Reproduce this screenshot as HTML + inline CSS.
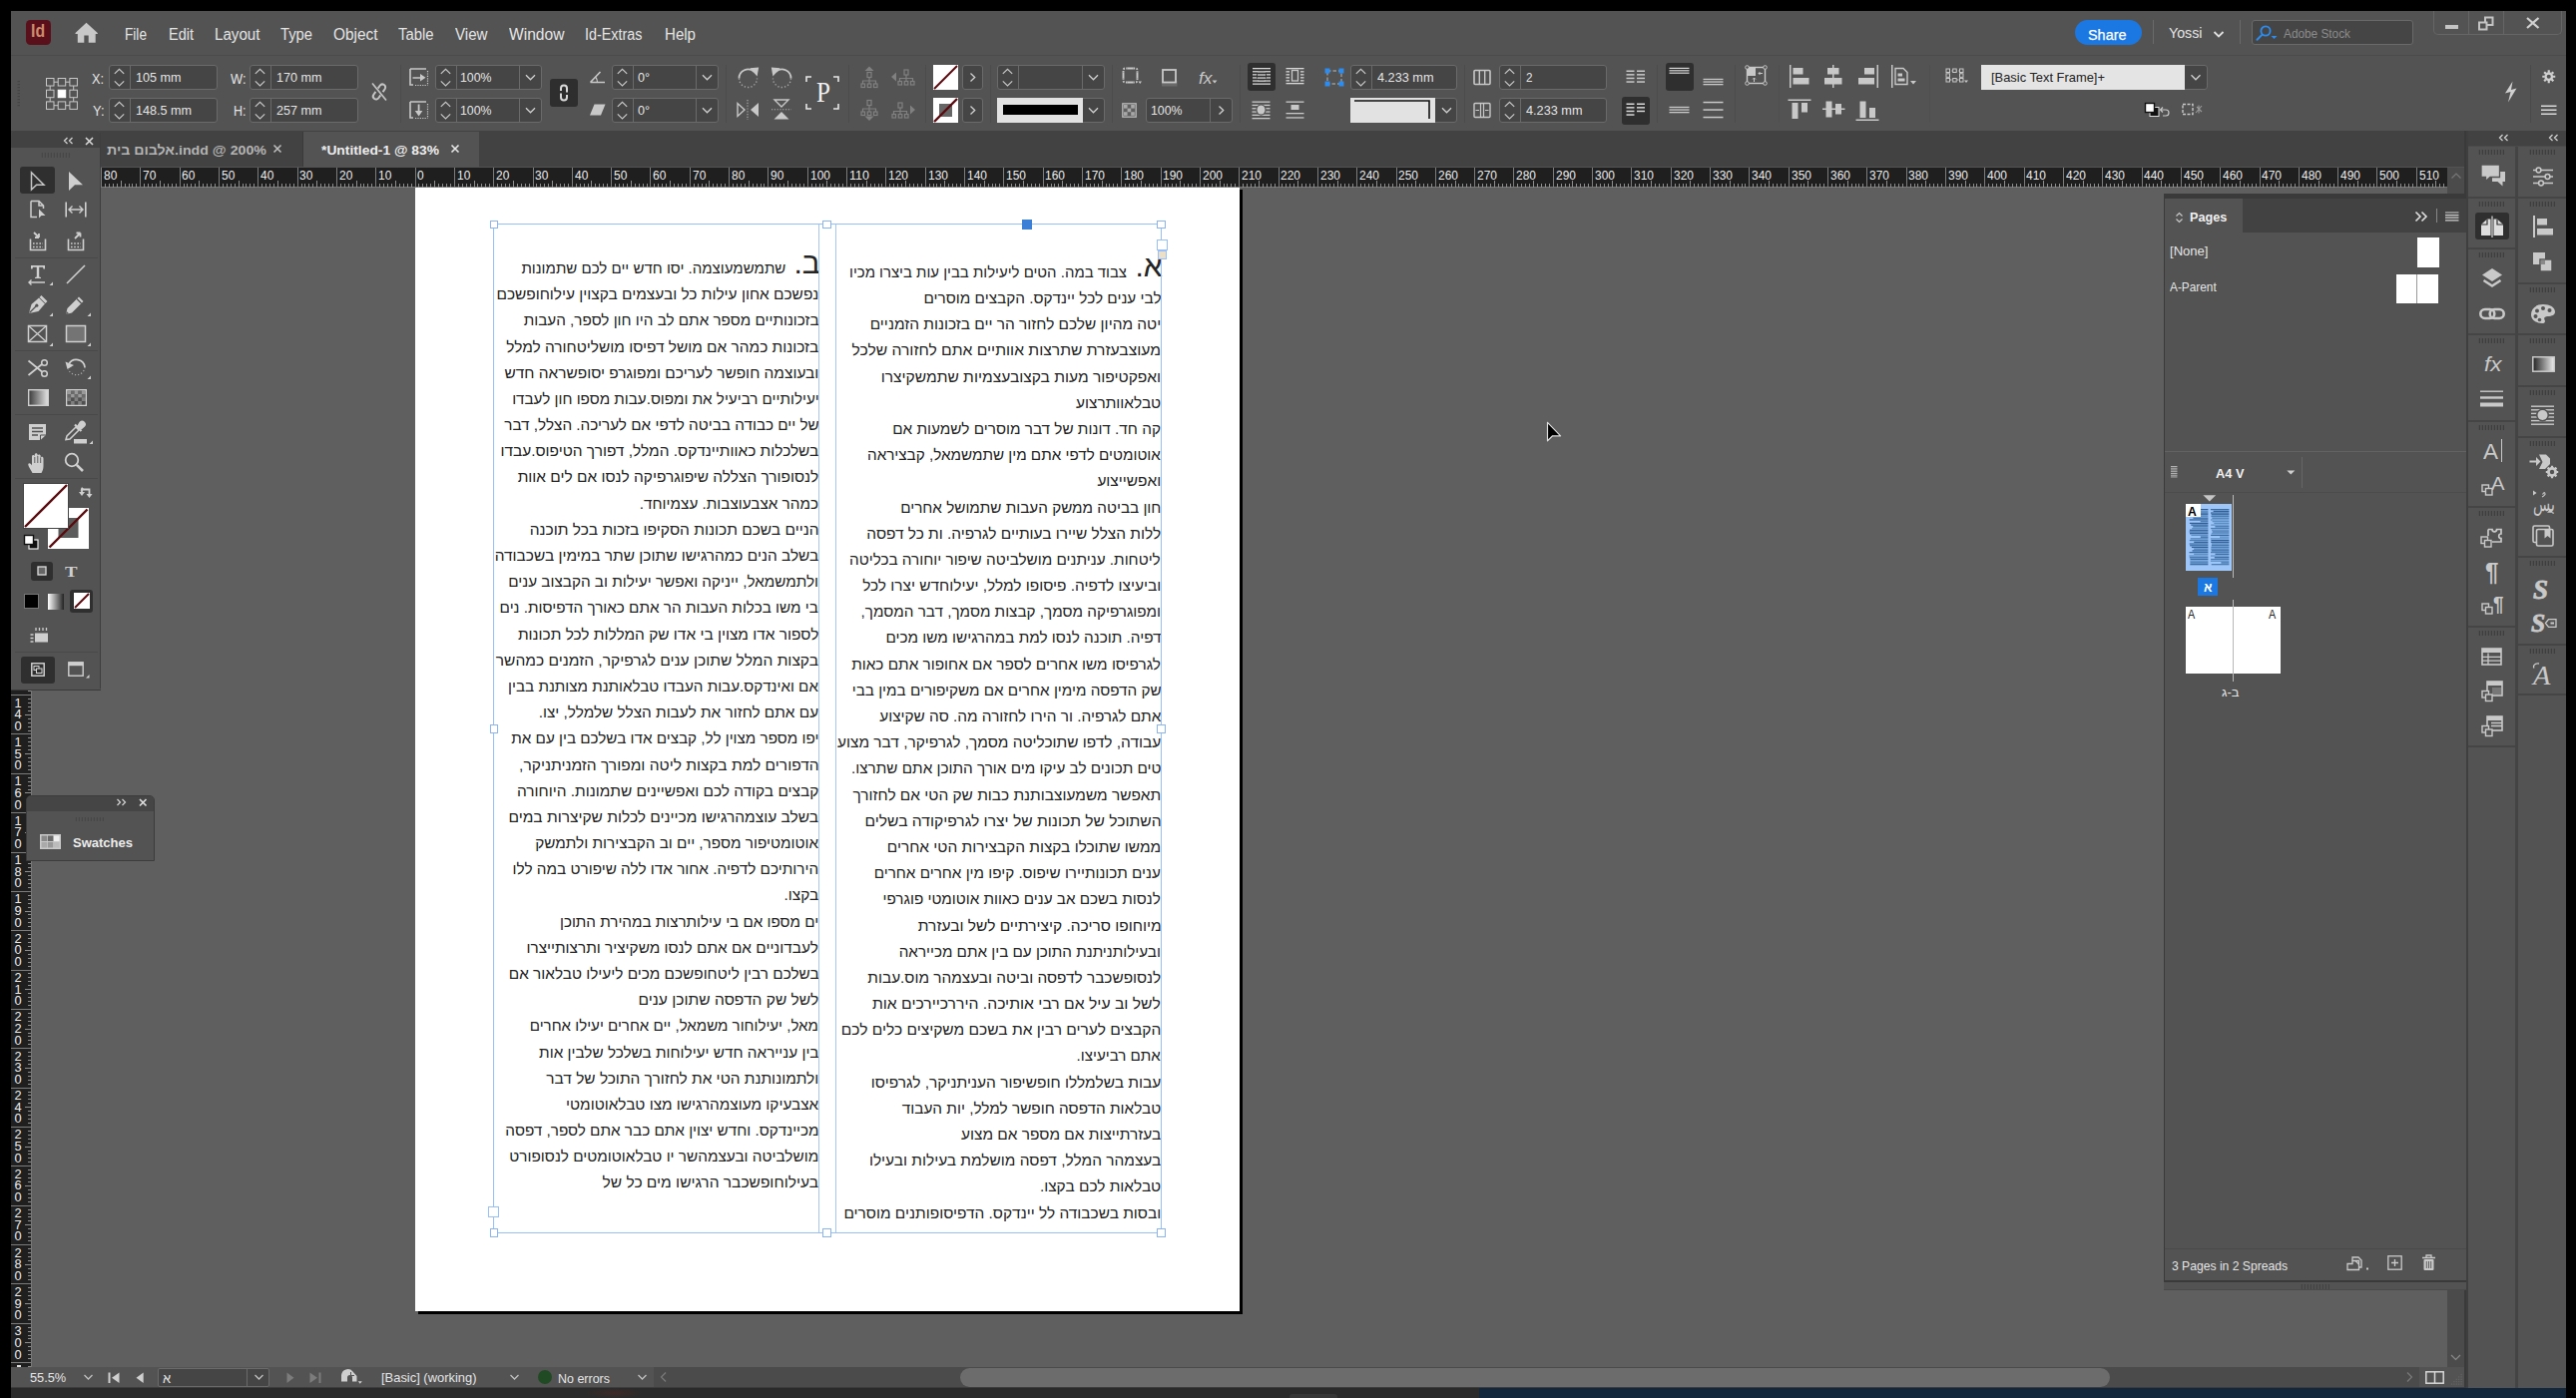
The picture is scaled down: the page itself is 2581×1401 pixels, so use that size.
<!DOCTYPE html>
<html><head><meta charset="utf-8"><title>InDesign</title>
<style>
html,body{margin:0;padding:0;background:#000;overflow:hidden;}
body{width:2581px;height:1401px;position:relative;font-family:"Liberation Sans",sans-serif;}
body>div,body>svg{position:absolute;display:block;}
svg{overflow:visible;}
</style></head><body>
<div style="left:11px;top:11px;width:2560px;height:1380px;background:#535353;"></div>
<div style="left:11px;top:1391px;width:2560px;height:10px;background:#12263c;"></div>
<div style="left:11px;top:1391px;width:1471px;height:10px;background:#2a2a2a;"></div>
<div style="left:1292px;top:1397px;width:48px;height:4px;background:#363636;border-radius:3px 3px 0 0;"></div>
<div style="left:585px;top:1391px;width:60px;height:10px;background:radial-gradient(ellipse at center,rgba(100,40,32,.35),rgba(100,40,32,0) 70%);"></div>
<div style="left:11px;top:54.6px;width:2560px;height:1.8px;background:#4b4b4b;"></div>
<div style="left:11px;top:131px;width:2560px;height:36px;background:#424242;"></div>
<div style="left:32px;top:188px;width:2420px;height:1182px;background:#5f5f5f;"></div>
<div style="left:418.5px;top:190px;width:826.5px;height:1127.3px;background:#000;"></div>
<div style="left:416px;top:187px;width:825.7px;height:1126.6px;background:#fff;"></div>
<div style="left:101px;top:168px;width:2351px;height:19px;background:#1f1f1f;"></div>
<div style="left:101px;top:187px;width:2351px;height:1px;background:#777;"></div>
<svg style="left:101px;top:168px;" width="2351" height="20" viewBox="0 0 2351 20"><rect x="0" y="0" width="1" height="20" fill="#7c7c7c"/><rect x="4" y="16" width="1" height="4" fill="#8e8e8e"/><rect x="8" y="16" width="1" height="4" fill="#8e8e8e"/><rect x="12" y="16" width="1" height="4" fill="#8e8e8e"/><rect x="16" y="16" width="1" height="4" fill="#8e8e8e"/><rect x="20" y="13" width="1" height="7" fill="#8e8e8e"/><rect x="24" y="16" width="1" height="4" fill="#8e8e8e"/><rect x="28" y="16" width="1" height="4" fill="#8e8e8e"/><rect x="31" y="16" width="1" height="4" fill="#8e8e8e"/><rect x="35" y="16" width="1" height="4" fill="#8e8e8e"/><rect x="39" y="0" width="1" height="20" fill="#7c7c7c"/><rect x="43" y="16" width="1" height="4" fill="#8e8e8e"/><rect x="47" y="16" width="1" height="4" fill="#8e8e8e"/><rect x="51" y="16" width="1" height="4" fill="#8e8e8e"/><rect x="55" y="16" width="1" height="4" fill="#8e8e8e"/><rect x="59" y="13" width="1" height="7" fill="#8e8e8e"/><rect x="63" y="16" width="1" height="4" fill="#8e8e8e"/><rect x="67" y="16" width="1" height="4" fill="#8e8e8e"/><rect x="71" y="16" width="1" height="4" fill="#8e8e8e"/><rect x="75" y="16" width="1" height="4" fill="#8e8e8e"/><rect x="79" y="0" width="1" height="20" fill="#7c7c7c"/><rect x="83" y="16" width="1" height="4" fill="#8e8e8e"/><rect x="86" y="16" width="1" height="4" fill="#8e8e8e"/><rect x="90" y="16" width="1" height="4" fill="#8e8e8e"/><rect x="94" y="16" width="1" height="4" fill="#8e8e8e"/><rect x="98" y="13" width="1" height="7" fill="#8e8e8e"/><rect x="102" y="16" width="1" height="4" fill="#8e8e8e"/><rect x="106" y="16" width="1" height="4" fill="#8e8e8e"/><rect x="110" y="16" width="1" height="4" fill="#8e8e8e"/><rect x="114" y="16" width="1" height="4" fill="#8e8e8e"/><rect x="118" y="0" width="1" height="20" fill="#7c7c7c"/><rect x="122" y="16" width="1" height="4" fill="#8e8e8e"/><rect x="126" y="16" width="1" height="4" fill="#8e8e8e"/><rect x="130" y="16" width="1" height="4" fill="#8e8e8e"/><rect x="134" y="16" width="1" height="4" fill="#8e8e8e"/><rect x="138" y="13" width="1" height="7" fill="#8e8e8e"/><rect x="142" y="16" width="1" height="4" fill="#8e8e8e"/><rect x="145" y="16" width="1" height="4" fill="#8e8e8e"/><rect x="149" y="16" width="1" height="4" fill="#8e8e8e"/><rect x="153" y="16" width="1" height="4" fill="#8e8e8e"/><rect x="157" y="0" width="1" height="20" fill="#7c7c7c"/><rect x="161" y="16" width="1" height="4" fill="#8e8e8e"/><rect x="165" y="16" width="1" height="4" fill="#8e8e8e"/><rect x="169" y="16" width="1" height="4" fill="#8e8e8e"/><rect x="173" y="16" width="1" height="4" fill="#8e8e8e"/><rect x="177" y="13" width="1" height="7" fill="#8e8e8e"/><rect x="181" y="16" width="1" height="4" fill="#8e8e8e"/><rect x="185" y="16" width="1" height="4" fill="#8e8e8e"/><rect x="189" y="16" width="1" height="4" fill="#8e8e8e"/><rect x="193" y="16" width="1" height="4" fill="#8e8e8e"/><rect x="197" y="0" width="1" height="20" fill="#7c7c7c"/><rect x="201" y="16" width="1" height="4" fill="#8e8e8e"/><rect x="204" y="16" width="1" height="4" fill="#8e8e8e"/><rect x="208" y="16" width="1" height="4" fill="#8e8e8e"/><rect x="212" y="16" width="1" height="4" fill="#8e8e8e"/><rect x="216" y="13" width="1" height="7" fill="#8e8e8e"/><rect x="220" y="16" width="1" height="4" fill="#8e8e8e"/><rect x="224" y="16" width="1" height="4" fill="#8e8e8e"/><rect x="228" y="16" width="1" height="4" fill="#8e8e8e"/><rect x="232" y="16" width="1" height="4" fill="#8e8e8e"/><rect x="236" y="0" width="1" height="20" fill="#7c7c7c"/><rect x="240" y="16" width="1" height="4" fill="#8e8e8e"/><rect x="244" y="16" width="1" height="4" fill="#8e8e8e"/><rect x="248" y="16" width="1" height="4" fill="#8e8e8e"/><rect x="252" y="16" width="1" height="4" fill="#8e8e8e"/><rect x="256" y="13" width="1" height="7" fill="#8e8e8e"/><rect x="260" y="16" width="1" height="4" fill="#8e8e8e"/><rect x="263" y="16" width="1" height="4" fill="#8e8e8e"/><rect x="267" y="16" width="1" height="4" fill="#8e8e8e"/><rect x="271" y="16" width="1" height="4" fill="#8e8e8e"/><rect x="275" y="0" width="1" height="20" fill="#7c7c7c"/><rect x="279" y="16" width="1" height="4" fill="#8e8e8e"/><rect x="283" y="16" width="1" height="4" fill="#8e8e8e"/><rect x="287" y="16" width="1" height="4" fill="#8e8e8e"/><rect x="291" y="16" width="1" height="4" fill="#8e8e8e"/><rect x="295" y="13" width="1" height="7" fill="#8e8e8e"/><rect x="299" y="16" width="1" height="4" fill="#8e8e8e"/><rect x="303" y="16" width="1" height="4" fill="#8e8e8e"/><rect x="307" y="16" width="1" height="4" fill="#8e8e8e"/><rect x="311" y="16" width="1" height="4" fill="#8e8e8e"/><rect x="315" y="0" width="1" height="20" fill="#7c7c7c"/><rect x="318" y="16" width="1" height="4" fill="#8e8e8e"/><rect x="322" y="16" width="1" height="4" fill="#8e8e8e"/><rect x="326" y="16" width="1" height="4" fill="#8e8e8e"/><rect x="330" y="16" width="1" height="4" fill="#8e8e8e"/><rect x="334" y="13" width="1" height="7" fill="#8e8e8e"/><rect x="338" y="16" width="1" height="4" fill="#8e8e8e"/><rect x="342" y="16" width="1" height="4" fill="#8e8e8e"/><rect x="346" y="16" width="1" height="4" fill="#8e8e8e"/><rect x="350" y="16" width="1" height="4" fill="#8e8e8e"/><rect x="354" y="0" width="1" height="20" fill="#7c7c7c"/><rect x="358" y="16" width="1" height="4" fill="#8e8e8e"/><rect x="362" y="16" width="1" height="4" fill="#8e8e8e"/><rect x="366" y="16" width="1" height="4" fill="#8e8e8e"/><rect x="370" y="16" width="1" height="4" fill="#8e8e8e"/><rect x="374" y="13" width="1" height="7" fill="#8e8e8e"/><rect x="377" y="16" width="1" height="4" fill="#8e8e8e"/><rect x="381" y="16" width="1" height="4" fill="#8e8e8e"/><rect x="385" y="16" width="1" height="4" fill="#8e8e8e"/><rect x="389" y="16" width="1" height="4" fill="#8e8e8e"/><rect x="393" y="0" width="1" height="20" fill="#7c7c7c"/><rect x="397" y="16" width="1" height="4" fill="#8e8e8e"/><rect x="401" y="16" width="1" height="4" fill="#8e8e8e"/><rect x="405" y="16" width="1" height="4" fill="#8e8e8e"/><rect x="409" y="16" width="1" height="4" fill="#8e8e8e"/><rect x="413" y="13" width="1" height="7" fill="#8e8e8e"/><rect x="417" y="16" width="1" height="4" fill="#8e8e8e"/><rect x="421" y="16" width="1" height="4" fill="#8e8e8e"/><rect x="425" y="16" width="1" height="4" fill="#8e8e8e"/><rect x="429" y="16" width="1" height="4" fill="#8e8e8e"/><rect x="433" y="0" width="1" height="20" fill="#7c7c7c"/><rect x="436" y="16" width="1" height="4" fill="#8e8e8e"/><rect x="440" y="16" width="1" height="4" fill="#8e8e8e"/><rect x="444" y="16" width="1" height="4" fill="#8e8e8e"/><rect x="448" y="16" width="1" height="4" fill="#8e8e8e"/><rect x="452" y="13" width="1" height="7" fill="#8e8e8e"/><rect x="456" y="16" width="1" height="4" fill="#8e8e8e"/><rect x="460" y="16" width="1" height="4" fill="#8e8e8e"/><rect x="464" y="16" width="1" height="4" fill="#8e8e8e"/><rect x="468" y="16" width="1" height="4" fill="#8e8e8e"/><rect x="472" y="0" width="1" height="20" fill="#7c7c7c"/><rect x="476" y="16" width="1" height="4" fill="#8e8e8e"/><rect x="480" y="16" width="1" height="4" fill="#8e8e8e"/><rect x="484" y="16" width="1" height="4" fill="#8e8e8e"/><rect x="488" y="16" width="1" height="4" fill="#8e8e8e"/><rect x="491" y="13" width="1" height="7" fill="#8e8e8e"/><rect x="495" y="16" width="1" height="4" fill="#8e8e8e"/><rect x="499" y="16" width="1" height="4" fill="#8e8e8e"/><rect x="503" y="16" width="1" height="4" fill="#8e8e8e"/><rect x="507" y="16" width="1" height="4" fill="#8e8e8e"/><rect x="511" y="0" width="1" height="20" fill="#7c7c7c"/><rect x="515" y="16" width="1" height="4" fill="#8e8e8e"/><rect x="519" y="16" width="1" height="4" fill="#8e8e8e"/><rect x="523" y="16" width="1" height="4" fill="#8e8e8e"/><rect x="527" y="16" width="1" height="4" fill="#8e8e8e"/><rect x="531" y="13" width="1" height="7" fill="#8e8e8e"/><rect x="535" y="16" width="1" height="4" fill="#8e8e8e"/><rect x="539" y="16" width="1" height="4" fill="#8e8e8e"/><rect x="543" y="16" width="1" height="4" fill="#8e8e8e"/><rect x="547" y="16" width="1" height="4" fill="#8e8e8e"/><rect x="550" y="0" width="1" height="20" fill="#7c7c7c"/><rect x="554" y="16" width="1" height="4" fill="#8e8e8e"/><rect x="558" y="16" width="1" height="4" fill="#8e8e8e"/><rect x="562" y="16" width="1" height="4" fill="#8e8e8e"/><rect x="566" y="16" width="1" height="4" fill="#8e8e8e"/><rect x="570" y="13" width="1" height="7" fill="#8e8e8e"/><rect x="574" y="16" width="1" height="4" fill="#8e8e8e"/><rect x="578" y="16" width="1" height="4" fill="#8e8e8e"/><rect x="582" y="16" width="1" height="4" fill="#8e8e8e"/><rect x="586" y="16" width="1" height="4" fill="#8e8e8e"/><rect x="590" y="0" width="1" height="20" fill="#7c7c7c"/><rect x="594" y="16" width="1" height="4" fill="#8e8e8e"/><rect x="598" y="16" width="1" height="4" fill="#8e8e8e"/><rect x="602" y="16" width="1" height="4" fill="#8e8e8e"/><rect x="606" y="16" width="1" height="4" fill="#8e8e8e"/><rect x="609" y="13" width="1" height="7" fill="#8e8e8e"/><rect x="613" y="16" width="1" height="4" fill="#8e8e8e"/><rect x="617" y="16" width="1" height="4" fill="#8e8e8e"/><rect x="621" y="16" width="1" height="4" fill="#8e8e8e"/><rect x="625" y="16" width="1" height="4" fill="#8e8e8e"/><rect x="629" y="0" width="1" height="20" fill="#7c7c7c"/><rect x="633" y="16" width="1" height="4" fill="#8e8e8e"/><rect x="637" y="16" width="1" height="4" fill="#8e8e8e"/><rect x="641" y="16" width="1" height="4" fill="#8e8e8e"/><rect x="645" y="16" width="1" height="4" fill="#8e8e8e"/><rect x="649" y="13" width="1" height="7" fill="#8e8e8e"/><rect x="653" y="16" width="1" height="4" fill="#8e8e8e"/><rect x="657" y="16" width="1" height="4" fill="#8e8e8e"/><rect x="661" y="16" width="1" height="4" fill="#8e8e8e"/><rect x="664" y="16" width="1" height="4" fill="#8e8e8e"/><rect x="668" y="0" width="1" height="20" fill="#7c7c7c"/><rect x="672" y="16" width="1" height="4" fill="#8e8e8e"/><rect x="676" y="16" width="1" height="4" fill="#8e8e8e"/><rect x="680" y="16" width="1" height="4" fill="#8e8e8e"/><rect x="684" y="16" width="1" height="4" fill="#8e8e8e"/><rect x="688" y="13" width="1" height="7" fill="#8e8e8e"/><rect x="692" y="16" width="1" height="4" fill="#8e8e8e"/><rect x="696" y="16" width="1" height="4" fill="#8e8e8e"/><rect x="700" y="16" width="1" height="4" fill="#8e8e8e"/><rect x="704" y="16" width="1" height="4" fill="#8e8e8e"/><rect x="708" y="0" width="1" height="20" fill="#7c7c7c"/><rect x="712" y="16" width="1" height="4" fill="#8e8e8e"/><rect x="716" y="16" width="1" height="4" fill="#8e8e8e"/><rect x="720" y="16" width="1" height="4" fill="#8e8e8e"/><rect x="723" y="16" width="1" height="4" fill="#8e8e8e"/><rect x="727" y="13" width="1" height="7" fill="#8e8e8e"/><rect x="731" y="16" width="1" height="4" fill="#8e8e8e"/><rect x="735" y="16" width="1" height="4" fill="#8e8e8e"/><rect x="739" y="16" width="1" height="4" fill="#8e8e8e"/><rect x="743" y="16" width="1" height="4" fill="#8e8e8e"/><rect x="747" y="0" width="1" height="20" fill="#7c7c7c"/><rect x="751" y="16" width="1" height="4" fill="#8e8e8e"/><rect x="755" y="16" width="1" height="4" fill="#8e8e8e"/><rect x="759" y="16" width="1" height="4" fill="#8e8e8e"/><rect x="763" y="16" width="1" height="4" fill="#8e8e8e"/><rect x="767" y="13" width="1" height="7" fill="#8e8e8e"/><rect x="771" y="16" width="1" height="4" fill="#8e8e8e"/><rect x="775" y="16" width="1" height="4" fill="#8e8e8e"/><rect x="779" y="16" width="1" height="4" fill="#8e8e8e"/><rect x="782" y="16" width="1" height="4" fill="#8e8e8e"/><rect x="786" y="0" width="1" height="20" fill="#7c7c7c"/><rect x="790" y="16" width="1" height="4" fill="#8e8e8e"/><rect x="794" y="16" width="1" height="4" fill="#8e8e8e"/><rect x="798" y="16" width="1" height="4" fill="#8e8e8e"/><rect x="802" y="16" width="1" height="4" fill="#8e8e8e"/><rect x="806" y="13" width="1" height="7" fill="#8e8e8e"/><rect x="810" y="16" width="1" height="4" fill="#8e8e8e"/><rect x="814" y="16" width="1" height="4" fill="#8e8e8e"/><rect x="818" y="16" width="1" height="4" fill="#8e8e8e"/><rect x="822" y="16" width="1" height="4" fill="#8e8e8e"/><rect x="826" y="0" width="1" height="20" fill="#7c7c7c"/><rect x="830" y="16" width="1" height="4" fill="#8e8e8e"/><rect x="834" y="16" width="1" height="4" fill="#8e8e8e"/><rect x="837" y="16" width="1" height="4" fill="#8e8e8e"/><rect x="841" y="16" width="1" height="4" fill="#8e8e8e"/><rect x="845" y="13" width="1" height="7" fill="#8e8e8e"/><rect x="849" y="16" width="1" height="4" fill="#8e8e8e"/><rect x="853" y="16" width="1" height="4" fill="#8e8e8e"/><rect x="857" y="16" width="1" height="4" fill="#8e8e8e"/><rect x="861" y="16" width="1" height="4" fill="#8e8e8e"/><rect x="865" y="0" width="1" height="20" fill="#7c7c7c"/><rect x="869" y="16" width="1" height="4" fill="#8e8e8e"/><rect x="873" y="16" width="1" height="4" fill="#8e8e8e"/><rect x="877" y="16" width="1" height="4" fill="#8e8e8e"/><rect x="881" y="16" width="1" height="4" fill="#8e8e8e"/><rect x="885" y="13" width="1" height="7" fill="#8e8e8e"/><rect x="889" y="16" width="1" height="4" fill="#8e8e8e"/><rect x="893" y="16" width="1" height="4" fill="#8e8e8e"/><rect x="896" y="16" width="1" height="4" fill="#8e8e8e"/><rect x="900" y="16" width="1" height="4" fill="#8e8e8e"/><rect x="904" y="0" width="1" height="20" fill="#7c7c7c"/><rect x="908" y="16" width="1" height="4" fill="#8e8e8e"/><rect x="912" y="16" width="1" height="4" fill="#8e8e8e"/><rect x="916" y="16" width="1" height="4" fill="#8e8e8e"/><rect x="920" y="16" width="1" height="4" fill="#8e8e8e"/><rect x="924" y="13" width="1" height="7" fill="#8e8e8e"/><rect x="928" y="16" width="1" height="4" fill="#8e8e8e"/><rect x="932" y="16" width="1" height="4" fill="#8e8e8e"/><rect x="936" y="16" width="1" height="4" fill="#8e8e8e"/><rect x="940" y="16" width="1" height="4" fill="#8e8e8e"/><rect x="944" y="0" width="1" height="20" fill="#7c7c7c"/><rect x="948" y="16" width="1" height="4" fill="#8e8e8e"/><rect x="952" y="16" width="1" height="4" fill="#8e8e8e"/><rect x="955" y="16" width="1" height="4" fill="#8e8e8e"/><rect x="959" y="16" width="1" height="4" fill="#8e8e8e"/><rect x="963" y="13" width="1" height="7" fill="#8e8e8e"/><rect x="967" y="16" width="1" height="4" fill="#8e8e8e"/><rect x="971" y="16" width="1" height="4" fill="#8e8e8e"/><rect x="975" y="16" width="1" height="4" fill="#8e8e8e"/><rect x="979" y="16" width="1" height="4" fill="#8e8e8e"/><rect x="983" y="0" width="1" height="20" fill="#7c7c7c"/><rect x="987" y="16" width="1" height="4" fill="#8e8e8e"/><rect x="991" y="16" width="1" height="4" fill="#8e8e8e"/><rect x="995" y="16" width="1" height="4" fill="#8e8e8e"/><rect x="999" y="16" width="1" height="4" fill="#8e8e8e"/><rect x="1003" y="13" width="1" height="7" fill="#8e8e8e"/><rect x="1007" y="16" width="1" height="4" fill="#8e8e8e"/><rect x="1010" y="16" width="1" height="4" fill="#8e8e8e"/><rect x="1014" y="16" width="1" height="4" fill="#8e8e8e"/><rect x="1018" y="16" width="1" height="4" fill="#8e8e8e"/><rect x="1022" y="0" width="1" height="20" fill="#7c7c7c"/><rect x="1026" y="16" width="1" height="4" fill="#8e8e8e"/><rect x="1030" y="16" width="1" height="4" fill="#8e8e8e"/><rect x="1034" y="16" width="1" height="4" fill="#8e8e8e"/><rect x="1038" y="16" width="1" height="4" fill="#8e8e8e"/><rect x="1042" y="13" width="1" height="7" fill="#8e8e8e"/><rect x="1046" y="16" width="1" height="4" fill="#8e8e8e"/><rect x="1050" y="16" width="1" height="4" fill="#8e8e8e"/><rect x="1054" y="16" width="1" height="4" fill="#8e8e8e"/><rect x="1058" y="16" width="1" height="4" fill="#8e8e8e"/><rect x="1062" y="0" width="1" height="20" fill="#7c7c7c"/><rect x="1066" y="16" width="1" height="4" fill="#8e8e8e"/><rect x="1069" y="16" width="1" height="4" fill="#8e8e8e"/><rect x="1073" y="16" width="1" height="4" fill="#8e8e8e"/><rect x="1077" y="16" width="1" height="4" fill="#8e8e8e"/><rect x="1081" y="13" width="1" height="7" fill="#8e8e8e"/><rect x="1085" y="16" width="1" height="4" fill="#8e8e8e"/><rect x="1089" y="16" width="1" height="4" fill="#8e8e8e"/><rect x="1093" y="16" width="1" height="4" fill="#8e8e8e"/><rect x="1097" y="16" width="1" height="4" fill="#8e8e8e"/><rect x="1101" y="0" width="1" height="20" fill="#7c7c7c"/><rect x="1105" y="16" width="1" height="4" fill="#8e8e8e"/><rect x="1109" y="16" width="1" height="4" fill="#8e8e8e"/><rect x="1113" y="16" width="1" height="4" fill="#8e8e8e"/><rect x="1117" y="16" width="1" height="4" fill="#8e8e8e"/><rect x="1121" y="13" width="1" height="7" fill="#8e8e8e"/><rect x="1125" y="16" width="1" height="4" fill="#8e8e8e"/><rect x="1128" y="16" width="1" height="4" fill="#8e8e8e"/><rect x="1132" y="16" width="1" height="4" fill="#8e8e8e"/><rect x="1136" y="16" width="1" height="4" fill="#8e8e8e"/><rect x="1140" y="0" width="1" height="20" fill="#7c7c7c"/><rect x="1144" y="16" width="1" height="4" fill="#8e8e8e"/><rect x="1148" y="16" width="1" height="4" fill="#8e8e8e"/><rect x="1152" y="16" width="1" height="4" fill="#8e8e8e"/><rect x="1156" y="16" width="1" height="4" fill="#8e8e8e"/><rect x="1160" y="13" width="1" height="7" fill="#8e8e8e"/><rect x="1164" y="16" width="1" height="4" fill="#8e8e8e"/><rect x="1168" y="16" width="1" height="4" fill="#8e8e8e"/><rect x="1172" y="16" width="1" height="4" fill="#8e8e8e"/><rect x="1176" y="16" width="1" height="4" fill="#8e8e8e"/><rect x="1180" y="0" width="1" height="20" fill="#7c7c7c"/><rect x="1183" y="16" width="1" height="4" fill="#8e8e8e"/><rect x="1187" y="16" width="1" height="4" fill="#8e8e8e"/><rect x="1191" y="16" width="1" height="4" fill="#8e8e8e"/><rect x="1195" y="16" width="1" height="4" fill="#8e8e8e"/><rect x="1199" y="13" width="1" height="7" fill="#8e8e8e"/><rect x="1203" y="16" width="1" height="4" fill="#8e8e8e"/><rect x="1207" y="16" width="1" height="4" fill="#8e8e8e"/><rect x="1211" y="16" width="1" height="4" fill="#8e8e8e"/><rect x="1215" y="16" width="1" height="4" fill="#8e8e8e"/><rect x="1219" y="0" width="1" height="20" fill="#7c7c7c"/><rect x="1223" y="16" width="1" height="4" fill="#8e8e8e"/><rect x="1227" y="16" width="1" height="4" fill="#8e8e8e"/><rect x="1231" y="16" width="1" height="4" fill="#8e8e8e"/><rect x="1235" y="16" width="1" height="4" fill="#8e8e8e"/><rect x="1239" y="13" width="1" height="7" fill="#8e8e8e"/><rect x="1242" y="16" width="1" height="4" fill="#8e8e8e"/><rect x="1246" y="16" width="1" height="4" fill="#8e8e8e"/><rect x="1250" y="16" width="1" height="4" fill="#8e8e8e"/><rect x="1254" y="16" width="1" height="4" fill="#8e8e8e"/><rect x="1258" y="0" width="1" height="20" fill="#7c7c7c"/><rect x="1262" y="16" width="1" height="4" fill="#8e8e8e"/><rect x="1266" y="16" width="1" height="4" fill="#8e8e8e"/><rect x="1270" y="16" width="1" height="4" fill="#8e8e8e"/><rect x="1274" y="16" width="1" height="4" fill="#8e8e8e"/><rect x="1278" y="13" width="1" height="7" fill="#8e8e8e"/><rect x="1282" y="16" width="1" height="4" fill="#8e8e8e"/><rect x="1286" y="16" width="1" height="4" fill="#8e8e8e"/><rect x="1290" y="16" width="1" height="4" fill="#8e8e8e"/><rect x="1294" y="16" width="1" height="4" fill="#8e8e8e"/><rect x="1298" y="0" width="1" height="20" fill="#7c7c7c"/><rect x="1301" y="16" width="1" height="4" fill="#8e8e8e"/><rect x="1305" y="16" width="1" height="4" fill="#8e8e8e"/><rect x="1309" y="16" width="1" height="4" fill="#8e8e8e"/><rect x="1313" y="16" width="1" height="4" fill="#8e8e8e"/><rect x="1317" y="13" width="1" height="7" fill="#8e8e8e"/><rect x="1321" y="16" width="1" height="4" fill="#8e8e8e"/><rect x="1325" y="16" width="1" height="4" fill="#8e8e8e"/><rect x="1329" y="16" width="1" height="4" fill="#8e8e8e"/><rect x="1333" y="16" width="1" height="4" fill="#8e8e8e"/><rect x="1337" y="0" width="1" height="20" fill="#7c7c7c"/><rect x="1341" y="16" width="1" height="4" fill="#8e8e8e"/><rect x="1345" y="16" width="1" height="4" fill="#8e8e8e"/><rect x="1349" y="16" width="1" height="4" fill="#8e8e8e"/><rect x="1353" y="16" width="1" height="4" fill="#8e8e8e"/><rect x="1357" y="13" width="1" height="7" fill="#8e8e8e"/><rect x="1360" y="16" width="1" height="4" fill="#8e8e8e"/><rect x="1364" y="16" width="1" height="4" fill="#8e8e8e"/><rect x="1368" y="16" width="1" height="4" fill="#8e8e8e"/><rect x="1372" y="16" width="1" height="4" fill="#8e8e8e"/><rect x="1376" y="0" width="1" height="20" fill="#7c7c7c"/><rect x="1380" y="16" width="1" height="4" fill="#8e8e8e"/><rect x="1384" y="16" width="1" height="4" fill="#8e8e8e"/><rect x="1388" y="16" width="1" height="4" fill="#8e8e8e"/><rect x="1392" y="16" width="1" height="4" fill="#8e8e8e"/><rect x="1396" y="13" width="1" height="7" fill="#8e8e8e"/><rect x="1400" y="16" width="1" height="4" fill="#8e8e8e"/><rect x="1404" y="16" width="1" height="4" fill="#8e8e8e"/><rect x="1408" y="16" width="1" height="4" fill="#8e8e8e"/><rect x="1412" y="16" width="1" height="4" fill="#8e8e8e"/><rect x="1415" y="0" width="1" height="20" fill="#7c7c7c"/><rect x="1419" y="16" width="1" height="4" fill="#8e8e8e"/><rect x="1423" y="16" width="1" height="4" fill="#8e8e8e"/><rect x="1427" y="16" width="1" height="4" fill="#8e8e8e"/><rect x="1431" y="16" width="1" height="4" fill="#8e8e8e"/><rect x="1435" y="13" width="1" height="7" fill="#8e8e8e"/><rect x="1439" y="16" width="1" height="4" fill="#8e8e8e"/><rect x="1443" y="16" width="1" height="4" fill="#8e8e8e"/><rect x="1447" y="16" width="1" height="4" fill="#8e8e8e"/><rect x="1451" y="16" width="1" height="4" fill="#8e8e8e"/><rect x="1455" y="0" width="1" height="20" fill="#7c7c7c"/><rect x="1459" y="16" width="1" height="4" fill="#8e8e8e"/><rect x="1463" y="16" width="1" height="4" fill="#8e8e8e"/><rect x="1467" y="16" width="1" height="4" fill="#8e8e8e"/><rect x="1471" y="16" width="1" height="4" fill="#8e8e8e"/><rect x="1474" y="13" width="1" height="7" fill="#8e8e8e"/><rect x="1478" y="16" width="1" height="4" fill="#8e8e8e"/><rect x="1482" y="16" width="1" height="4" fill="#8e8e8e"/><rect x="1486" y="16" width="1" height="4" fill="#8e8e8e"/><rect x="1490" y="16" width="1" height="4" fill="#8e8e8e"/><rect x="1494" y="0" width="1" height="20" fill="#7c7c7c"/><rect x="1498" y="16" width="1" height="4" fill="#8e8e8e"/><rect x="1502" y="16" width="1" height="4" fill="#8e8e8e"/><rect x="1506" y="16" width="1" height="4" fill="#8e8e8e"/><rect x="1510" y="16" width="1" height="4" fill="#8e8e8e"/><rect x="1514" y="13" width="1" height="7" fill="#8e8e8e"/><rect x="1518" y="16" width="1" height="4" fill="#8e8e8e"/><rect x="1522" y="16" width="1" height="4" fill="#8e8e8e"/><rect x="1526" y="16" width="1" height="4" fill="#8e8e8e"/><rect x="1530" y="16" width="1" height="4" fill="#8e8e8e"/><rect x="1533" y="0" width="1" height="20" fill="#7c7c7c"/><rect x="1537" y="16" width="1" height="4" fill="#8e8e8e"/><rect x="1541" y="16" width="1" height="4" fill="#8e8e8e"/><rect x="1545" y="16" width="1" height="4" fill="#8e8e8e"/><rect x="1549" y="16" width="1" height="4" fill="#8e8e8e"/><rect x="1553" y="13" width="1" height="7" fill="#8e8e8e"/><rect x="1557" y="16" width="1" height="4" fill="#8e8e8e"/><rect x="1561" y="16" width="1" height="4" fill="#8e8e8e"/><rect x="1565" y="16" width="1" height="4" fill="#8e8e8e"/><rect x="1569" y="16" width="1" height="4" fill="#8e8e8e"/><rect x="1573" y="0" width="1" height="20" fill="#7c7c7c"/><rect x="1577" y="16" width="1" height="4" fill="#8e8e8e"/><rect x="1581" y="16" width="1" height="4" fill="#8e8e8e"/><rect x="1585" y="16" width="1" height="4" fill="#8e8e8e"/><rect x="1588" y="16" width="1" height="4" fill="#8e8e8e"/><rect x="1592" y="13" width="1" height="7" fill="#8e8e8e"/><rect x="1596" y="16" width="1" height="4" fill="#8e8e8e"/><rect x="1600" y="16" width="1" height="4" fill="#8e8e8e"/><rect x="1604" y="16" width="1" height="4" fill="#8e8e8e"/><rect x="1608" y="16" width="1" height="4" fill="#8e8e8e"/><rect x="1612" y="0" width="1" height="20" fill="#7c7c7c"/><rect x="1616" y="16" width="1" height="4" fill="#8e8e8e"/><rect x="1620" y="16" width="1" height="4" fill="#8e8e8e"/><rect x="1624" y="16" width="1" height="4" fill="#8e8e8e"/><rect x="1628" y="16" width="1" height="4" fill="#8e8e8e"/><rect x="1632" y="13" width="1" height="7" fill="#8e8e8e"/><rect x="1636" y="16" width="1" height="4" fill="#8e8e8e"/><rect x="1640" y="16" width="1" height="4" fill="#8e8e8e"/><rect x="1644" y="16" width="1" height="4" fill="#8e8e8e"/><rect x="1647" y="16" width="1" height="4" fill="#8e8e8e"/><rect x="1651" y="0" width="1" height="20" fill="#7c7c7c"/><rect x="1655" y="16" width="1" height="4" fill="#8e8e8e"/><rect x="1659" y="16" width="1" height="4" fill="#8e8e8e"/><rect x="1663" y="16" width="1" height="4" fill="#8e8e8e"/><rect x="1667" y="16" width="1" height="4" fill="#8e8e8e"/><rect x="1671" y="13" width="1" height="7" fill="#8e8e8e"/><rect x="1675" y="16" width="1" height="4" fill="#8e8e8e"/><rect x="1679" y="16" width="1" height="4" fill="#8e8e8e"/><rect x="1683" y="16" width="1" height="4" fill="#8e8e8e"/><rect x="1687" y="16" width="1" height="4" fill="#8e8e8e"/><rect x="1691" y="0" width="1" height="20" fill="#7c7c7c"/><rect x="1695" y="16" width="1" height="4" fill="#8e8e8e"/><rect x="1699" y="16" width="1" height="4" fill="#8e8e8e"/><rect x="1703" y="16" width="1" height="4" fill="#8e8e8e"/><rect x="1706" y="16" width="1" height="4" fill="#8e8e8e"/><rect x="1710" y="13" width="1" height="7" fill="#8e8e8e"/><rect x="1714" y="16" width="1" height="4" fill="#8e8e8e"/><rect x="1718" y="16" width="1" height="4" fill="#8e8e8e"/><rect x="1722" y="16" width="1" height="4" fill="#8e8e8e"/><rect x="1726" y="16" width="1" height="4" fill="#8e8e8e"/><rect x="1730" y="0" width="1" height="20" fill="#7c7c7c"/><rect x="1734" y="16" width="1" height="4" fill="#8e8e8e"/><rect x="1738" y="16" width="1" height="4" fill="#8e8e8e"/><rect x="1742" y="16" width="1" height="4" fill="#8e8e8e"/><rect x="1746" y="16" width="1" height="4" fill="#8e8e8e"/><rect x="1750" y="13" width="1" height="7" fill="#8e8e8e"/><rect x="1754" y="16" width="1" height="4" fill="#8e8e8e"/><rect x="1758" y="16" width="1" height="4" fill="#8e8e8e"/><rect x="1761" y="16" width="1" height="4" fill="#8e8e8e"/><rect x="1765" y="16" width="1" height="4" fill="#8e8e8e"/><rect x="1769" y="0" width="1" height="20" fill="#7c7c7c"/><rect x="1773" y="16" width="1" height="4" fill="#8e8e8e"/><rect x="1777" y="16" width="1" height="4" fill="#8e8e8e"/><rect x="1781" y="16" width="1" height="4" fill="#8e8e8e"/><rect x="1785" y="16" width="1" height="4" fill="#8e8e8e"/><rect x="1789" y="13" width="1" height="7" fill="#8e8e8e"/><rect x="1793" y="16" width="1" height="4" fill="#8e8e8e"/><rect x="1797" y="16" width="1" height="4" fill="#8e8e8e"/><rect x="1801" y="16" width="1" height="4" fill="#8e8e8e"/><rect x="1805" y="16" width="1" height="4" fill="#8e8e8e"/><rect x="1809" y="0" width="1" height="20" fill="#7c7c7c"/><rect x="1813" y="16" width="1" height="4" fill="#8e8e8e"/><rect x="1817" y="16" width="1" height="4" fill="#8e8e8e"/><rect x="1820" y="16" width="1" height="4" fill="#8e8e8e"/><rect x="1824" y="16" width="1" height="4" fill="#8e8e8e"/><rect x="1828" y="13" width="1" height="7" fill="#8e8e8e"/><rect x="1832" y="16" width="1" height="4" fill="#8e8e8e"/><rect x="1836" y="16" width="1" height="4" fill="#8e8e8e"/><rect x="1840" y="16" width="1" height="4" fill="#8e8e8e"/><rect x="1844" y="16" width="1" height="4" fill="#8e8e8e"/><rect x="1848" y="0" width="1" height="20" fill="#7c7c7c"/><rect x="1852" y="16" width="1" height="4" fill="#8e8e8e"/><rect x="1856" y="16" width="1" height="4" fill="#8e8e8e"/><rect x="1860" y="16" width="1" height="4" fill="#8e8e8e"/><rect x="1864" y="16" width="1" height="4" fill="#8e8e8e"/><rect x="1868" y="13" width="1" height="7" fill="#8e8e8e"/><rect x="1872" y="16" width="1" height="4" fill="#8e8e8e"/><rect x="1876" y="16" width="1" height="4" fill="#8e8e8e"/><rect x="1879" y="16" width="1" height="4" fill="#8e8e8e"/><rect x="1883" y="16" width="1" height="4" fill="#8e8e8e"/><rect x="1887" y="0" width="1" height="20" fill="#7c7c7c"/><rect x="1891" y="16" width="1" height="4" fill="#8e8e8e"/><rect x="1895" y="16" width="1" height="4" fill="#8e8e8e"/><rect x="1899" y="16" width="1" height="4" fill="#8e8e8e"/><rect x="1903" y="16" width="1" height="4" fill="#8e8e8e"/><rect x="1907" y="13" width="1" height="7" fill="#8e8e8e"/><rect x="1911" y="16" width="1" height="4" fill="#8e8e8e"/><rect x="1915" y="16" width="1" height="4" fill="#8e8e8e"/><rect x="1919" y="16" width="1" height="4" fill="#8e8e8e"/><rect x="1923" y="16" width="1" height="4" fill="#8e8e8e"/><rect x="1927" y="0" width="1" height="20" fill="#7c7c7c"/><rect x="1931" y="16" width="1" height="4" fill="#8e8e8e"/><rect x="1934" y="16" width="1" height="4" fill="#8e8e8e"/><rect x="1938" y="16" width="1" height="4" fill="#8e8e8e"/><rect x="1942" y="16" width="1" height="4" fill="#8e8e8e"/><rect x="1946" y="13" width="1" height="7" fill="#8e8e8e"/><rect x="1950" y="16" width="1" height="4" fill="#8e8e8e"/><rect x="1954" y="16" width="1" height="4" fill="#8e8e8e"/><rect x="1958" y="16" width="1" height="4" fill="#8e8e8e"/><rect x="1962" y="16" width="1" height="4" fill="#8e8e8e"/><rect x="1966" y="0" width="1" height="20" fill="#7c7c7c"/><rect x="1970" y="16" width="1" height="4" fill="#8e8e8e"/><rect x="1974" y="16" width="1" height="4" fill="#8e8e8e"/><rect x="1978" y="16" width="1" height="4" fill="#8e8e8e"/><rect x="1982" y="16" width="1" height="4" fill="#8e8e8e"/><rect x="1986" y="13" width="1" height="7" fill="#8e8e8e"/><rect x="1990" y="16" width="1" height="4" fill="#8e8e8e"/><rect x="1993" y="16" width="1" height="4" fill="#8e8e8e"/><rect x="1997" y="16" width="1" height="4" fill="#8e8e8e"/><rect x="2001" y="16" width="1" height="4" fill="#8e8e8e"/><rect x="2005" y="0" width="1" height="20" fill="#7c7c7c"/><rect x="2009" y="16" width="1" height="4" fill="#8e8e8e"/><rect x="2013" y="16" width="1" height="4" fill="#8e8e8e"/><rect x="2017" y="16" width="1" height="4" fill="#8e8e8e"/><rect x="2021" y="16" width="1" height="4" fill="#8e8e8e"/><rect x="2025" y="13" width="1" height="7" fill="#8e8e8e"/><rect x="2029" y="16" width="1" height="4" fill="#8e8e8e"/><rect x="2033" y="16" width="1" height="4" fill="#8e8e8e"/><rect x="2037" y="16" width="1" height="4" fill="#8e8e8e"/><rect x="2041" y="16" width="1" height="4" fill="#8e8e8e"/><rect x="2045" y="0" width="1" height="20" fill="#7c7c7c"/><rect x="2049" y="16" width="1" height="4" fill="#8e8e8e"/><rect x="2052" y="16" width="1" height="4" fill="#8e8e8e"/><rect x="2056" y="16" width="1" height="4" fill="#8e8e8e"/><rect x="2060" y="16" width="1" height="4" fill="#8e8e8e"/><rect x="2064" y="13" width="1" height="7" fill="#8e8e8e"/><rect x="2068" y="16" width="1" height="4" fill="#8e8e8e"/><rect x="2072" y="16" width="1" height="4" fill="#8e8e8e"/><rect x="2076" y="16" width="1" height="4" fill="#8e8e8e"/><rect x="2080" y="16" width="1" height="4" fill="#8e8e8e"/><rect x="2084" y="0" width="1" height="20" fill="#7c7c7c"/><rect x="2088" y="16" width="1" height="4" fill="#8e8e8e"/><rect x="2092" y="16" width="1" height="4" fill="#8e8e8e"/><rect x="2096" y="16" width="1" height="4" fill="#8e8e8e"/><rect x="2100" y="16" width="1" height="4" fill="#8e8e8e"/><rect x="2104" y="13" width="1" height="7" fill="#8e8e8e"/><rect x="2107" y="16" width="1" height="4" fill="#8e8e8e"/><rect x="2111" y="16" width="1" height="4" fill="#8e8e8e"/><rect x="2115" y="16" width="1" height="4" fill="#8e8e8e"/><rect x="2119" y="16" width="1" height="4" fill="#8e8e8e"/><rect x="2123" y="0" width="1" height="20" fill="#7c7c7c"/><rect x="2127" y="16" width="1" height="4" fill="#8e8e8e"/><rect x="2131" y="16" width="1" height="4" fill="#8e8e8e"/><rect x="2135" y="16" width="1" height="4" fill="#8e8e8e"/><rect x="2139" y="16" width="1" height="4" fill="#8e8e8e"/><rect x="2143" y="13" width="1" height="7" fill="#8e8e8e"/><rect x="2147" y="16" width="1" height="4" fill="#8e8e8e"/><rect x="2151" y="16" width="1" height="4" fill="#8e8e8e"/><rect x="2155" y="16" width="1" height="4" fill="#8e8e8e"/><rect x="2159" y="16" width="1" height="4" fill="#8e8e8e"/><rect x="2163" y="0" width="1" height="20" fill="#7c7c7c"/><rect x="2166" y="16" width="1" height="4" fill="#8e8e8e"/><rect x="2170" y="16" width="1" height="4" fill="#8e8e8e"/><rect x="2174" y="16" width="1" height="4" fill="#8e8e8e"/><rect x="2178" y="16" width="1" height="4" fill="#8e8e8e"/><rect x="2182" y="13" width="1" height="7" fill="#8e8e8e"/><rect x="2186" y="16" width="1" height="4" fill="#8e8e8e"/><rect x="2190" y="16" width="1" height="4" fill="#8e8e8e"/><rect x="2194" y="16" width="1" height="4" fill="#8e8e8e"/><rect x="2198" y="16" width="1" height="4" fill="#8e8e8e"/><rect x="2202" y="0" width="1" height="20" fill="#7c7c7c"/><rect x="2206" y="16" width="1" height="4" fill="#8e8e8e"/><rect x="2210" y="16" width="1" height="4" fill="#8e8e8e"/><rect x="2214" y="16" width="1" height="4" fill="#8e8e8e"/><rect x="2218" y="16" width="1" height="4" fill="#8e8e8e"/><rect x="2222" y="13" width="1" height="7" fill="#8e8e8e"/><rect x="2225" y="16" width="1" height="4" fill="#8e8e8e"/><rect x="2229" y="16" width="1" height="4" fill="#8e8e8e"/><rect x="2233" y="16" width="1" height="4" fill="#8e8e8e"/><rect x="2237" y="16" width="1" height="4" fill="#8e8e8e"/><rect x="2241" y="0" width="1" height="20" fill="#7c7c7c"/><rect x="2245" y="16" width="1" height="4" fill="#8e8e8e"/><rect x="2249" y="16" width="1" height="4" fill="#8e8e8e"/><rect x="2253" y="16" width="1" height="4" fill="#8e8e8e"/><rect x="2257" y="16" width="1" height="4" fill="#8e8e8e"/><rect x="2261" y="13" width="1" height="7" fill="#8e8e8e"/><rect x="2265" y="16" width="1" height="4" fill="#8e8e8e"/><rect x="2269" y="16" width="1" height="4" fill="#8e8e8e"/><rect x="2273" y="16" width="1" height="4" fill="#8e8e8e"/><rect x="2277" y="16" width="1" height="4" fill="#8e8e8e"/><rect x="2280" y="0" width="1" height="20" fill="#7c7c7c"/><rect x="2284" y="16" width="1" height="4" fill="#8e8e8e"/><rect x="2288" y="16" width="1" height="4" fill="#8e8e8e"/><rect x="2292" y="16" width="1" height="4" fill="#8e8e8e"/><rect x="2296" y="16" width="1" height="4" fill="#8e8e8e"/><rect x="2300" y="13" width="1" height="7" fill="#8e8e8e"/><rect x="2304" y="16" width="1" height="4" fill="#8e8e8e"/><rect x="2308" y="16" width="1" height="4" fill="#8e8e8e"/><rect x="2312" y="16" width="1" height="4" fill="#8e8e8e"/><rect x="2316" y="16" width="1" height="4" fill="#8e8e8e"/><rect x="2320" y="0" width="1" height="20" fill="#7c7c7c"/><rect x="2324" y="16" width="1" height="4" fill="#8e8e8e"/><rect x="2328" y="16" width="1" height="4" fill="#8e8e8e"/><rect x="2332" y="16" width="1" height="4" fill="#8e8e8e"/><rect x="2336" y="16" width="1" height="4" fill="#8e8e8e"/><rect x="2339" y="13" width="1" height="7" fill="#8e8e8e"/><rect x="2343" y="16" width="1" height="4" fill="#8e8e8e"/><rect x="2347" y="16" width="1" height="4" fill="#8e8e8e"/></svg>
<div style="top:168.00px;font-size:13.4px;line-height:15px;height:15px;color:#ececec;white-space:nowrap;left:103.80px;transform-origin:0 50%;transform:scaleX(0.8911);">80</div>
<div style="top:168.00px;font-size:13.4px;line-height:15px;height:15px;color:#ececec;white-space:nowrap;left:143.12px;transform-origin:0 50%;transform:scaleX(0.8911);">70</div>
<div style="top:168.00px;font-size:13.4px;line-height:15px;height:15px;color:#ececec;white-space:nowrap;left:182.44px;transform-origin:0 50%;transform:scaleX(0.8911);">60</div>
<div style="top:168.00px;font-size:13.4px;line-height:15px;height:15px;color:#ececec;white-space:nowrap;left:221.76px;transform-origin:0 50%;transform:scaleX(0.8911);">50</div>
<div style="top:168.00px;font-size:13.4px;line-height:15px;height:15px;color:#ececec;white-space:nowrap;left:261.07px;transform-origin:0 50%;transform:scaleX(0.8911);">40</div>
<div style="top:168.00px;font-size:13.4px;line-height:15px;height:15px;color:#ececec;white-space:nowrap;left:300.39px;transform-origin:0 50%;transform:scaleX(0.8911);">30</div>
<div style="top:168.00px;font-size:13.4px;line-height:15px;height:15px;color:#ececec;white-space:nowrap;left:339.71px;transform-origin:0 50%;transform:scaleX(0.8911);">20</div>
<div style="top:168.00px;font-size:13.4px;line-height:15px;height:15px;color:#ececec;white-space:nowrap;left:379.03px;transform-origin:0 50%;transform:scaleX(0.8911);">10</div>
<div style="top:168.00px;font-size:13.4px;line-height:15px;height:15px;color:#ececec;white-space:nowrap;left:418.35px;transform-origin:0 50%;transform:scaleX(0.8911);">0</div>
<div style="top:168.00px;font-size:13.4px;line-height:15px;height:15px;color:#ececec;white-space:nowrap;left:457.67px;transform-origin:0 50%;transform:scaleX(0.8911);">10</div>
<div style="top:168.00px;font-size:13.4px;line-height:15px;height:15px;color:#ececec;white-space:nowrap;left:496.99px;transform-origin:0 50%;transform:scaleX(0.8911);">20</div>
<div style="top:168.00px;font-size:13.4px;line-height:15px;height:15px;color:#ececec;white-space:nowrap;left:536.31px;transform-origin:0 50%;transform:scaleX(0.8911);">30</div>
<div style="top:168.00px;font-size:13.4px;line-height:15px;height:15px;color:#ececec;white-space:nowrap;left:575.63px;transform-origin:0 50%;transform:scaleX(0.8911);">40</div>
<div style="top:168.00px;font-size:13.4px;line-height:15px;height:15px;color:#ececec;white-space:nowrap;left:614.94px;transform-origin:0 50%;transform:scaleX(0.8911);">50</div>
<div style="top:168.00px;font-size:13.4px;line-height:15px;height:15px;color:#ececec;white-space:nowrap;left:654.26px;transform-origin:0 50%;transform:scaleX(0.8911);">60</div>
<div style="top:168.00px;font-size:13.4px;line-height:15px;height:15px;color:#ececec;white-space:nowrap;left:693.58px;transform-origin:0 50%;transform:scaleX(0.8911);">70</div>
<div style="top:168.00px;font-size:13.4px;line-height:15px;height:15px;color:#ececec;white-space:nowrap;left:732.90px;transform-origin:0 50%;transform:scaleX(0.8911);">80</div>
<div style="top:168.00px;font-size:13.4px;line-height:15px;height:15px;color:#ececec;white-space:nowrap;left:772.22px;transform-origin:0 50%;transform:scaleX(0.8911);">90</div>
<div style="top:168.00px;font-size:13.4px;line-height:15px;height:15px;color:#ececec;white-space:nowrap;left:811.54px;transform-origin:0 50%;transform:scaleX(0.8911);">100</div>
<div style="top:168.00px;font-size:13.4px;line-height:15px;height:15px;color:#ececec;white-space:nowrap;left:850.86px;transform-origin:0 50%;transform:scaleX(0.9326);">110</div>
<div style="top:168.00px;font-size:13.4px;line-height:15px;height:15px;color:#ececec;white-space:nowrap;left:890.18px;transform-origin:0 50%;transform:scaleX(0.8911);">120</div>
<div style="top:168.00px;font-size:13.4px;line-height:15px;height:15px;color:#ececec;white-space:nowrap;left:929.50px;transform-origin:0 50%;transform:scaleX(0.8911);">130</div>
<div style="top:168.00px;font-size:13.4px;line-height:15px;height:15px;color:#ececec;white-space:nowrap;left:968.82px;transform-origin:0 50%;transform:scaleX(0.8911);">140</div>
<div style="top:168.00px;font-size:13.4px;line-height:15px;height:15px;color:#ececec;white-space:nowrap;left:1008.13px;transform-origin:0 50%;transform:scaleX(0.8911);">150</div>
<div style="top:168.00px;font-size:13.4px;line-height:15px;height:15px;color:#ececec;white-space:nowrap;left:1047.45px;transform-origin:0 50%;transform:scaleX(0.8911);">160</div>
<div style="top:168.00px;font-size:13.4px;line-height:15px;height:15px;color:#ececec;white-space:nowrap;left:1086.77px;transform-origin:0 50%;transform:scaleX(0.8911);">170</div>
<div style="top:168.00px;font-size:13.4px;line-height:15px;height:15px;color:#ececec;white-space:nowrap;left:1126.09px;transform-origin:0 50%;transform:scaleX(0.8911);">180</div>
<div style="top:168.00px;font-size:13.4px;line-height:15px;height:15px;color:#ececec;white-space:nowrap;left:1165.41px;transform-origin:0 50%;transform:scaleX(0.8911);">190</div>
<div style="top:168.00px;font-size:13.4px;line-height:15px;height:15px;color:#ececec;white-space:nowrap;left:1204.73px;transform-origin:0 50%;transform:scaleX(0.8911);">200</div>
<div style="top:168.00px;font-size:13.4px;line-height:15px;height:15px;color:#ececec;white-space:nowrap;left:1244.05px;transform-origin:0 50%;transform:scaleX(0.8911);">210</div>
<div style="top:168.00px;font-size:13.4px;line-height:15px;height:15px;color:#ececec;white-space:nowrap;left:1283.37px;transform-origin:0 50%;transform:scaleX(0.8911);">220</div>
<div style="top:168.00px;font-size:13.4px;line-height:15px;height:15px;color:#ececec;white-space:nowrap;left:1322.69px;transform-origin:0 50%;transform:scaleX(0.8911);">230</div>
<div style="top:168.00px;font-size:13.4px;line-height:15px;height:15px;color:#ececec;white-space:nowrap;left:1362.01px;transform-origin:0 50%;transform:scaleX(0.8911);">240</div>
<div style="top:168.00px;font-size:13.4px;line-height:15px;height:15px;color:#ececec;white-space:nowrap;left:1401.33px;transform-origin:0 50%;transform:scaleX(0.8911);">250</div>
<div style="top:168.00px;font-size:13.4px;line-height:15px;height:15px;color:#ececec;white-space:nowrap;left:1440.64px;transform-origin:0 50%;transform:scaleX(0.8911);">260</div>
<div style="top:168.00px;font-size:13.4px;line-height:15px;height:15px;color:#ececec;white-space:nowrap;left:1479.96px;transform-origin:0 50%;transform:scaleX(0.8911);">270</div>
<div style="top:168.00px;font-size:13.4px;line-height:15px;height:15px;color:#ececec;white-space:nowrap;left:1519.28px;transform-origin:0 50%;transform:scaleX(0.8911);">280</div>
<div style="top:168.00px;font-size:13.4px;line-height:15px;height:15px;color:#ececec;white-space:nowrap;left:1558.60px;transform-origin:0 50%;transform:scaleX(0.8911);">290</div>
<div style="top:168.00px;font-size:13.4px;line-height:15px;height:15px;color:#ececec;white-space:nowrap;left:1597.92px;transform-origin:0 50%;transform:scaleX(0.8911);">300</div>
<div style="top:168.00px;font-size:13.4px;line-height:15px;height:15px;color:#ececec;white-space:nowrap;left:1637.24px;transform-origin:0 50%;transform:scaleX(0.8911);">310</div>
<div style="top:168.00px;font-size:13.4px;line-height:15px;height:15px;color:#ececec;white-space:nowrap;left:1676.56px;transform-origin:0 50%;transform:scaleX(0.8911);">320</div>
<div style="top:168.00px;font-size:13.4px;line-height:15px;height:15px;color:#ececec;white-space:nowrap;left:1715.88px;transform-origin:0 50%;transform:scaleX(0.8911);">330</div>
<div style="top:168.00px;font-size:13.4px;line-height:15px;height:15px;color:#ececec;white-space:nowrap;left:1755.20px;transform-origin:0 50%;transform:scaleX(0.8911);">340</div>
<div style="top:168.00px;font-size:13.4px;line-height:15px;height:15px;color:#ececec;white-space:nowrap;left:1794.51px;transform-origin:0 50%;transform:scaleX(0.8911);">350</div>
<div style="top:168.00px;font-size:13.4px;line-height:15px;height:15px;color:#ececec;white-space:nowrap;left:1833.83px;transform-origin:0 50%;transform:scaleX(0.8911);">360</div>
<div style="top:168.00px;font-size:13.4px;line-height:15px;height:15px;color:#ececec;white-space:nowrap;left:1873.15px;transform-origin:0 50%;transform:scaleX(0.8911);">370</div>
<div style="top:168.00px;font-size:13.4px;line-height:15px;height:15px;color:#ececec;white-space:nowrap;left:1912.47px;transform-origin:0 50%;transform:scaleX(0.8911);">380</div>
<div style="top:168.00px;font-size:13.4px;line-height:15px;height:15px;color:#ececec;white-space:nowrap;left:1951.79px;transform-origin:0 50%;transform:scaleX(0.8911);">390</div>
<div style="top:168.00px;font-size:13.4px;line-height:15px;height:15px;color:#ececec;white-space:nowrap;left:1991.11px;transform-origin:0 50%;transform:scaleX(0.8911);">400</div>
<div style="top:168.00px;font-size:13.4px;line-height:15px;height:15px;color:#ececec;white-space:nowrap;left:2030.43px;transform-origin:0 50%;transform:scaleX(0.8911);">410</div>
<div style="top:168.00px;font-size:13.4px;line-height:15px;height:15px;color:#ececec;white-space:nowrap;left:2069.75px;transform-origin:0 50%;transform:scaleX(0.8911);">420</div>
<div style="top:168.00px;font-size:13.4px;line-height:15px;height:15px;color:#ececec;white-space:nowrap;left:2109.07px;transform-origin:0 50%;transform:scaleX(0.8911);">430</div>
<div style="top:168.00px;font-size:13.4px;line-height:15px;height:15px;color:#ececec;white-space:nowrap;left:2148.39px;transform-origin:0 50%;transform:scaleX(0.8911);">440</div>
<div style="top:168.00px;font-size:13.4px;line-height:15px;height:15px;color:#ececec;white-space:nowrap;left:2187.71px;transform-origin:0 50%;transform:scaleX(0.8911);">450</div>
<div style="top:168.00px;font-size:13.4px;line-height:15px;height:15px;color:#ececec;white-space:nowrap;left:2227.02px;transform-origin:0 50%;transform:scaleX(0.8911);">460</div>
<div style="top:168.00px;font-size:13.4px;line-height:15px;height:15px;color:#ececec;white-space:nowrap;left:2266.34px;transform-origin:0 50%;transform:scaleX(0.8911);">470</div>
<div style="top:168.00px;font-size:13.4px;line-height:15px;height:15px;color:#ececec;white-space:nowrap;left:2305.66px;transform-origin:0 50%;transform:scaleX(0.8911);">480</div>
<div style="top:168.00px;font-size:13.4px;line-height:15px;height:15px;color:#ececec;white-space:nowrap;left:2344.98px;transform-origin:0 50%;transform:scaleX(0.8911);">490</div>
<div style="top:168.00px;font-size:13.4px;line-height:15px;height:15px;color:#ececec;white-space:nowrap;left:2384.30px;transform-origin:0 50%;transform:scaleX(0.8911);">500</div>
<div style="top:168.00px;font-size:13.4px;line-height:15px;height:15px;color:#ececec;white-space:nowrap;left:2423.62px;transform-origin:0 50%;transform:scaleX(0.8911);">510</div>
<div style="left:2452px;top:168px;width:17px;height:20px;background:#4b4b4b;"></div>
<svg style="left:2452px;top:168px;" width="17" height="20" viewBox="0 0 17 20"><path d="M4.5 10.5 L9 6 L13.5 10.5" fill="none" stroke="#777" stroke-width="1.2"/></svg>
<div style="left:11px;top:188px;width:20px;height:1182px;background:#1f1f1f;"></div>
<div style="left:31px;top:188px;width:1px;height:1182px;background:#777;"></div>
<svg style="left:11px;top:188px;" width="20" height="1182" viewBox="0 0 20 1182"><rect x="17" y="0" width="3" height="1" fill="#8e8e8e"/><rect x="17" y="4" width="3" height="1" fill="#8e8e8e"/><rect x="17" y="8" width="3" height="1" fill="#8e8e8e"/><rect x="17" y="12" width="3" height="1" fill="#8e8e8e"/><rect x="14" y="16" width="6" height="1" fill="#8e8e8e"/><rect x="17" y="20" width="3" height="1" fill="#8e8e8e"/><rect x="17" y="24" width="3" height="1" fill="#8e8e8e"/><rect x="17" y="28" width="3" height="1" fill="#8e8e8e"/><rect x="17" y="32" width="3" height="1" fill="#8e8e8e"/><rect x="0" y="36" width="20" height="1" fill="#7c7c7c"/><rect x="17" y="40" width="3" height="1" fill="#8e8e8e"/><rect x="17" y="44" width="3" height="1" fill="#8e8e8e"/><rect x="17" y="48" width="3" height="1" fill="#8e8e8e"/><rect x="17" y="52" width="3" height="1" fill="#8e8e8e"/><rect x="14" y="56" width="6" height="1" fill="#8e8e8e"/><rect x="17" y="60" width="3" height="1" fill="#8e8e8e"/><rect x="17" y="63" width="3" height="1" fill="#8e8e8e"/><rect x="17" y="67" width="3" height="1" fill="#8e8e8e"/><rect x="17" y="71" width="3" height="1" fill="#8e8e8e"/><rect x="0" y="75" width="20" height="1" fill="#7c7c7c"/><rect x="17" y="79" width="3" height="1" fill="#8e8e8e"/><rect x="17" y="83" width="3" height="1" fill="#8e8e8e"/><rect x="17" y="87" width="3" height="1" fill="#8e8e8e"/><rect x="17" y="91" width="3" height="1" fill="#8e8e8e"/><rect x="14" y="95" width="6" height="1" fill="#8e8e8e"/><rect x="17" y="99" width="3" height="1" fill="#8e8e8e"/><rect x="17" y="103" width="3" height="1" fill="#8e8e8e"/><rect x="17" y="107" width="3" height="1" fill="#8e8e8e"/><rect x="17" y="111" width="3" height="1" fill="#8e8e8e"/><rect x="0" y="115" width="20" height="1" fill="#7c7c7c"/><rect x="17" y="119" width="3" height="1" fill="#8e8e8e"/><rect x="17" y="122" width="3" height="1" fill="#8e8e8e"/><rect x="17" y="126" width="3" height="1" fill="#8e8e8e"/><rect x="17" y="130" width="3" height="1" fill="#8e8e8e"/><rect x="14" y="134" width="6" height="1" fill="#8e8e8e"/><rect x="17" y="138" width="3" height="1" fill="#8e8e8e"/><rect x="17" y="142" width="3" height="1" fill="#8e8e8e"/><rect x="17" y="146" width="3" height="1" fill="#8e8e8e"/><rect x="17" y="150" width="3" height="1" fill="#8e8e8e"/><rect x="0" y="154" width="20" height="1" fill="#7c7c7c"/><rect x="17" y="158" width="3" height="1" fill="#8e8e8e"/><rect x="17" y="162" width="3" height="1" fill="#8e8e8e"/><rect x="17" y="166" width="3" height="1" fill="#8e8e8e"/><rect x="17" y="170" width="3" height="1" fill="#8e8e8e"/><rect x="14" y="174" width="6" height="1" fill="#8e8e8e"/><rect x="17" y="178" width="3" height="1" fill="#8e8e8e"/><rect x="17" y="181" width="3" height="1" fill="#8e8e8e"/><rect x="17" y="185" width="3" height="1" fill="#8e8e8e"/><rect x="17" y="189" width="3" height="1" fill="#8e8e8e"/><rect x="0" y="193" width="20" height="1" fill="#7c7c7c"/><rect x="17" y="197" width="3" height="1" fill="#8e8e8e"/><rect x="17" y="201" width="3" height="1" fill="#8e8e8e"/><rect x="17" y="205" width="3" height="1" fill="#8e8e8e"/><rect x="17" y="209" width="3" height="1" fill="#8e8e8e"/><rect x="14" y="213" width="6" height="1" fill="#8e8e8e"/><rect x="17" y="217" width="3" height="1" fill="#8e8e8e"/><rect x="17" y="221" width="3" height="1" fill="#8e8e8e"/><rect x="17" y="225" width="3" height="1" fill="#8e8e8e"/><rect x="17" y="229" width="3" height="1" fill="#8e8e8e"/><rect x="0" y="233" width="20" height="1" fill="#7c7c7c"/><rect x="17" y="237" width="3" height="1" fill="#8e8e8e"/><rect x="17" y="241" width="3" height="1" fill="#8e8e8e"/><rect x="17" y="244" width="3" height="1" fill="#8e8e8e"/><rect x="17" y="248" width="3" height="1" fill="#8e8e8e"/><rect x="14" y="252" width="6" height="1" fill="#8e8e8e"/><rect x="17" y="256" width="3" height="1" fill="#8e8e8e"/><rect x="17" y="260" width="3" height="1" fill="#8e8e8e"/><rect x="17" y="264" width="3" height="1" fill="#8e8e8e"/><rect x="17" y="268" width="3" height="1" fill="#8e8e8e"/><rect x="0" y="272" width="20" height="1" fill="#7c7c7c"/><rect x="17" y="276" width="3" height="1" fill="#8e8e8e"/><rect x="17" y="280" width="3" height="1" fill="#8e8e8e"/><rect x="17" y="284" width="3" height="1" fill="#8e8e8e"/><rect x="17" y="288" width="3" height="1" fill="#8e8e8e"/><rect x="14" y="292" width="6" height="1" fill="#8e8e8e"/><rect x="17" y="296" width="3" height="1" fill="#8e8e8e"/><rect x="17" y="300" width="3" height="1" fill="#8e8e8e"/><rect x="17" y="303" width="3" height="1" fill="#8e8e8e"/><rect x="17" y="307" width="3" height="1" fill="#8e8e8e"/><rect x="0" y="311" width="20" height="1" fill="#7c7c7c"/><rect x="17" y="315" width="3" height="1" fill="#8e8e8e"/><rect x="17" y="319" width="3" height="1" fill="#8e8e8e"/><rect x="17" y="323" width="3" height="1" fill="#8e8e8e"/><rect x="17" y="327" width="3" height="1" fill="#8e8e8e"/><rect x="14" y="331" width="6" height="1" fill="#8e8e8e"/><rect x="17" y="335" width="3" height="1" fill="#8e8e8e"/><rect x="17" y="339" width="3" height="1" fill="#8e8e8e"/><rect x="17" y="343" width="3" height="1" fill="#8e8e8e"/><rect x="17" y="347" width="3" height="1" fill="#8e8e8e"/><rect x="0" y="351" width="20" height="1" fill="#7c7c7c"/><rect x="17" y="355" width="3" height="1" fill="#8e8e8e"/><rect x="17" y="359" width="3" height="1" fill="#8e8e8e"/><rect x="17" y="363" width="3" height="1" fill="#8e8e8e"/><rect x="17" y="366" width="3" height="1" fill="#8e8e8e"/><rect x="14" y="370" width="6" height="1" fill="#8e8e8e"/><rect x="17" y="374" width="3" height="1" fill="#8e8e8e"/><rect x="17" y="378" width="3" height="1" fill="#8e8e8e"/><rect x="17" y="382" width="3" height="1" fill="#8e8e8e"/><rect x="17" y="386" width="3" height="1" fill="#8e8e8e"/><rect x="0" y="390" width="20" height="1" fill="#7c7c7c"/><rect x="17" y="394" width="3" height="1" fill="#8e8e8e"/><rect x="17" y="398" width="3" height="1" fill="#8e8e8e"/><rect x="17" y="402" width="3" height="1" fill="#8e8e8e"/><rect x="17" y="406" width="3" height="1" fill="#8e8e8e"/><rect x="14" y="410" width="6" height="1" fill="#8e8e8e"/><rect x="17" y="414" width="3" height="1" fill="#8e8e8e"/><rect x="17" y="418" width="3" height="1" fill="#8e8e8e"/><rect x="17" y="422" width="3" height="1" fill="#8e8e8e"/><rect x="17" y="425" width="3" height="1" fill="#8e8e8e"/><rect x="0" y="429" width="20" height="1" fill="#7c7c7c"/><rect x="17" y="433" width="3" height="1" fill="#8e8e8e"/><rect x="17" y="437" width="3" height="1" fill="#8e8e8e"/><rect x="17" y="441" width="3" height="1" fill="#8e8e8e"/><rect x="17" y="445" width="3" height="1" fill="#8e8e8e"/><rect x="14" y="449" width="6" height="1" fill="#8e8e8e"/><rect x="17" y="453" width="3" height="1" fill="#8e8e8e"/><rect x="17" y="457" width="3" height="1" fill="#8e8e8e"/><rect x="17" y="461" width="3" height="1" fill="#8e8e8e"/><rect x="17" y="465" width="3" height="1" fill="#8e8e8e"/><rect x="0" y="469" width="20" height="1" fill="#7c7c7c"/><rect x="17" y="473" width="3" height="1" fill="#8e8e8e"/><rect x="17" y="477" width="3" height="1" fill="#8e8e8e"/><rect x="17" y="481" width="3" height="1" fill="#8e8e8e"/><rect x="17" y="484" width="3" height="1" fill="#8e8e8e"/><rect x="14" y="488" width="6" height="1" fill="#8e8e8e"/><rect x="17" y="492" width="3" height="1" fill="#8e8e8e"/><rect x="17" y="496" width="3" height="1" fill="#8e8e8e"/><rect x="17" y="500" width="3" height="1" fill="#8e8e8e"/><rect x="17" y="504" width="3" height="1" fill="#8e8e8e"/><rect x="0" y="508" width="20" height="1" fill="#7c7c7c"/><rect x="17" y="512" width="3" height="1" fill="#8e8e8e"/><rect x="17" y="516" width="3" height="1" fill="#8e8e8e"/><rect x="17" y="520" width="3" height="1" fill="#8e8e8e"/><rect x="17" y="524" width="3" height="1" fill="#8e8e8e"/><rect x="14" y="528" width="6" height="1" fill="#8e8e8e"/><rect x="17" y="532" width="3" height="1" fill="#8e8e8e"/><rect x="17" y="536" width="3" height="1" fill="#8e8e8e"/><rect x="17" y="540" width="3" height="1" fill="#8e8e8e"/><rect x="17" y="544" width="3" height="1" fill="#8e8e8e"/><rect x="0" y="547" width="20" height="1" fill="#7c7c7c"/><rect x="17" y="551" width="3" height="1" fill="#8e8e8e"/><rect x="17" y="555" width="3" height="1" fill="#8e8e8e"/><rect x="17" y="559" width="3" height="1" fill="#8e8e8e"/><rect x="17" y="563" width="3" height="1" fill="#8e8e8e"/><rect x="14" y="567" width="6" height="1" fill="#8e8e8e"/><rect x="17" y="571" width="3" height="1" fill="#8e8e8e"/><rect x="17" y="575" width="3" height="1" fill="#8e8e8e"/><rect x="17" y="579" width="3" height="1" fill="#8e8e8e"/><rect x="17" y="583" width="3" height="1" fill="#8e8e8e"/><rect x="0" y="587" width="20" height="1" fill="#7c7c7c"/><rect x="17" y="591" width="3" height="1" fill="#8e8e8e"/><rect x="17" y="595" width="3" height="1" fill="#8e8e8e"/><rect x="17" y="599" width="3" height="1" fill="#8e8e8e"/><rect x="17" y="603" width="3" height="1" fill="#8e8e8e"/><rect x="14" y="606" width="6" height="1" fill="#8e8e8e"/><rect x="17" y="610" width="3" height="1" fill="#8e8e8e"/><rect x="17" y="614" width="3" height="1" fill="#8e8e8e"/><rect x="17" y="618" width="3" height="1" fill="#8e8e8e"/><rect x="17" y="622" width="3" height="1" fill="#8e8e8e"/><rect x="0" y="626" width="20" height="1" fill="#7c7c7c"/><rect x="17" y="630" width="3" height="1" fill="#8e8e8e"/><rect x="17" y="634" width="3" height="1" fill="#8e8e8e"/><rect x="17" y="638" width="3" height="1" fill="#8e8e8e"/><rect x="17" y="642" width="3" height="1" fill="#8e8e8e"/><rect x="14" y="646" width="6" height="1" fill="#8e8e8e"/><rect x="17" y="650" width="3" height="1" fill="#8e8e8e"/><rect x="17" y="654" width="3" height="1" fill="#8e8e8e"/><rect x="17" y="658" width="3" height="1" fill="#8e8e8e"/><rect x="17" y="662" width="3" height="1" fill="#8e8e8e"/><rect x="0" y="666" width="20" height="1" fill="#7c7c7c"/><rect x="17" y="669" width="3" height="1" fill="#8e8e8e"/><rect x="17" y="673" width="3" height="1" fill="#8e8e8e"/><rect x="17" y="677" width="3" height="1" fill="#8e8e8e"/><rect x="17" y="681" width="3" height="1" fill="#8e8e8e"/><rect x="14" y="685" width="6" height="1" fill="#8e8e8e"/><rect x="17" y="689" width="3" height="1" fill="#8e8e8e"/><rect x="17" y="693" width="3" height="1" fill="#8e8e8e"/><rect x="17" y="697" width="3" height="1" fill="#8e8e8e"/><rect x="17" y="701" width="3" height="1" fill="#8e8e8e"/><rect x="0" y="705" width="20" height="1" fill="#7c7c7c"/><rect x="17" y="709" width="3" height="1" fill="#8e8e8e"/><rect x="17" y="713" width="3" height="1" fill="#8e8e8e"/><rect x="17" y="717" width="3" height="1" fill="#8e8e8e"/><rect x="17" y="721" width="3" height="1" fill="#8e8e8e"/><rect x="14" y="725" width="6" height="1" fill="#8e8e8e"/><rect x="17" y="728" width="3" height="1" fill="#8e8e8e"/><rect x="17" y="732" width="3" height="1" fill="#8e8e8e"/><rect x="17" y="736" width="3" height="1" fill="#8e8e8e"/><rect x="17" y="740" width="3" height="1" fill="#8e8e8e"/><rect x="0" y="744" width="20" height="1" fill="#7c7c7c"/><rect x="17" y="748" width="3" height="1" fill="#8e8e8e"/><rect x="17" y="752" width="3" height="1" fill="#8e8e8e"/><rect x="17" y="756" width="3" height="1" fill="#8e8e8e"/><rect x="17" y="760" width="3" height="1" fill="#8e8e8e"/><rect x="14" y="764" width="6" height="1" fill="#8e8e8e"/><rect x="17" y="768" width="3" height="1" fill="#8e8e8e"/><rect x="17" y="772" width="3" height="1" fill="#8e8e8e"/><rect x="17" y="776" width="3" height="1" fill="#8e8e8e"/><rect x="17" y="780" width="3" height="1" fill="#8e8e8e"/><rect x="0" y="784" width="20" height="1" fill="#7c7c7c"/><rect x="17" y="787" width="3" height="1" fill="#8e8e8e"/><rect x="17" y="791" width="3" height="1" fill="#8e8e8e"/><rect x="17" y="795" width="3" height="1" fill="#8e8e8e"/><rect x="17" y="799" width="3" height="1" fill="#8e8e8e"/><rect x="14" y="803" width="6" height="1" fill="#8e8e8e"/><rect x="17" y="807" width="3" height="1" fill="#8e8e8e"/><rect x="17" y="811" width="3" height="1" fill="#8e8e8e"/><rect x="17" y="815" width="3" height="1" fill="#8e8e8e"/><rect x="17" y="819" width="3" height="1" fill="#8e8e8e"/><rect x="0" y="823" width="20" height="1" fill="#7c7c7c"/><rect x="17" y="827" width="3" height="1" fill="#8e8e8e"/><rect x="17" y="831" width="3" height="1" fill="#8e8e8e"/><rect x="17" y="835" width="3" height="1" fill="#8e8e8e"/><rect x="17" y="839" width="3" height="1" fill="#8e8e8e"/><rect x="14" y="843" width="6" height="1" fill="#8e8e8e"/><rect x="17" y="847" width="3" height="1" fill="#8e8e8e"/><rect x="17" y="850" width="3" height="1" fill="#8e8e8e"/><rect x="17" y="854" width="3" height="1" fill="#8e8e8e"/><rect x="17" y="858" width="3" height="1" fill="#8e8e8e"/><rect x="0" y="862" width="20" height="1" fill="#7c7c7c"/><rect x="17" y="866" width="3" height="1" fill="#8e8e8e"/><rect x="17" y="870" width="3" height="1" fill="#8e8e8e"/><rect x="17" y="874" width="3" height="1" fill="#8e8e8e"/><rect x="17" y="878" width="3" height="1" fill="#8e8e8e"/><rect x="14" y="882" width="6" height="1" fill="#8e8e8e"/><rect x="17" y="886" width="3" height="1" fill="#8e8e8e"/><rect x="17" y="890" width="3" height="1" fill="#8e8e8e"/><rect x="17" y="894" width="3" height="1" fill="#8e8e8e"/><rect x="17" y="898" width="3" height="1" fill="#8e8e8e"/><rect x="0" y="902" width="20" height="1" fill="#7c7c7c"/><rect x="17" y="906" width="3" height="1" fill="#8e8e8e"/><rect x="17" y="909" width="3" height="1" fill="#8e8e8e"/><rect x="17" y="913" width="3" height="1" fill="#8e8e8e"/><rect x="17" y="917" width="3" height="1" fill="#8e8e8e"/><rect x="14" y="921" width="6" height="1" fill="#8e8e8e"/><rect x="17" y="925" width="3" height="1" fill="#8e8e8e"/><rect x="17" y="929" width="3" height="1" fill="#8e8e8e"/><rect x="17" y="933" width="3" height="1" fill="#8e8e8e"/><rect x="17" y="937" width="3" height="1" fill="#8e8e8e"/><rect x="0" y="941" width="20" height="1" fill="#7c7c7c"/><rect x="17" y="945" width="3" height="1" fill="#8e8e8e"/><rect x="17" y="949" width="3" height="1" fill="#8e8e8e"/><rect x="17" y="953" width="3" height="1" fill="#8e8e8e"/><rect x="17" y="957" width="3" height="1" fill="#8e8e8e"/><rect x="14" y="961" width="6" height="1" fill="#8e8e8e"/><rect x="17" y="965" width="3" height="1" fill="#8e8e8e"/><rect x="17" y="968" width="3" height="1" fill="#8e8e8e"/><rect x="17" y="972" width="3" height="1" fill="#8e8e8e"/><rect x="17" y="976" width="3" height="1" fill="#8e8e8e"/><rect x="0" y="980" width="20" height="1" fill="#7c7c7c"/><rect x="17" y="984" width="3" height="1" fill="#8e8e8e"/><rect x="17" y="988" width="3" height="1" fill="#8e8e8e"/><rect x="17" y="992" width="3" height="1" fill="#8e8e8e"/><rect x="17" y="996" width="3" height="1" fill="#8e8e8e"/><rect x="14" y="1000" width="6" height="1" fill="#8e8e8e"/><rect x="17" y="1004" width="3" height="1" fill="#8e8e8e"/><rect x="17" y="1008" width="3" height="1" fill="#8e8e8e"/><rect x="17" y="1012" width="3" height="1" fill="#8e8e8e"/><rect x="17" y="1016" width="3" height="1" fill="#8e8e8e"/><rect x="0" y="1020" width="20" height="1" fill="#7c7c7c"/><rect x="17" y="1024" width="3" height="1" fill="#8e8e8e"/><rect x="17" y="1028" width="3" height="1" fill="#8e8e8e"/><rect x="17" y="1031" width="3" height="1" fill="#8e8e8e"/><rect x="17" y="1035" width="3" height="1" fill="#8e8e8e"/><rect x="14" y="1039" width="6" height="1" fill="#8e8e8e"/><rect x="17" y="1043" width="3" height="1" fill="#8e8e8e"/><rect x="17" y="1047" width="3" height="1" fill="#8e8e8e"/><rect x="17" y="1051" width="3" height="1" fill="#8e8e8e"/><rect x="17" y="1055" width="3" height="1" fill="#8e8e8e"/><rect x="0" y="1059" width="20" height="1" fill="#7c7c7c"/><rect x="17" y="1063" width="3" height="1" fill="#8e8e8e"/><rect x="17" y="1067" width="3" height="1" fill="#8e8e8e"/><rect x="17" y="1071" width="3" height="1" fill="#8e8e8e"/><rect x="17" y="1075" width="3" height="1" fill="#8e8e8e"/><rect x="14" y="1079" width="6" height="1" fill="#8e8e8e"/><rect x="17" y="1083" width="3" height="1" fill="#8e8e8e"/><rect x="17" y="1087" width="3" height="1" fill="#8e8e8e"/><rect x="17" y="1090" width="3" height="1" fill="#8e8e8e"/><rect x="17" y="1094" width="3" height="1" fill="#8e8e8e"/><rect x="0" y="1098" width="20" height="1" fill="#7c7c7c"/><rect x="17" y="1102" width="3" height="1" fill="#8e8e8e"/><rect x="17" y="1106" width="3" height="1" fill="#8e8e8e"/><rect x="17" y="1110" width="3" height="1" fill="#8e8e8e"/><rect x="17" y="1114" width="3" height="1" fill="#8e8e8e"/><rect x="14" y="1118" width="6" height="1" fill="#8e8e8e"/><rect x="17" y="1122" width="3" height="1" fill="#8e8e8e"/><rect x="17" y="1126" width="3" height="1" fill="#8e8e8e"/><rect x="17" y="1130" width="3" height="1" fill="#8e8e8e"/><rect x="17" y="1134" width="3" height="1" fill="#8e8e8e"/><rect x="0" y="1138" width="20" height="1" fill="#7c7c7c"/><rect x="17" y="1142" width="3" height="1" fill="#8e8e8e"/><rect x="17" y="1146" width="3" height="1" fill="#8e8e8e"/><rect x="17" y="1150" width="3" height="1" fill="#8e8e8e"/><rect x="17" y="1153" width="3" height="1" fill="#8e8e8e"/><rect x="14" y="1157" width="6" height="1" fill="#8e8e8e"/><rect x="17" y="1161" width="3" height="1" fill="#8e8e8e"/><rect x="17" y="1165" width="3" height="1" fill="#8e8e8e"/><rect x="17" y="1169" width="3" height="1" fill="#8e8e8e"/><rect x="17" y="1173" width="3" height="1" fill="#8e8e8e"/><rect x="0" y="1177" width="20" height="1" fill="#7c7c7c"/><rect x="17" y="1181" width="3" height="1" fill="#8e8e8e"/></svg>
<div style="top:197.00px;font-size:12.8px;line-height:15px;height:15px;color:#ececec;white-space:nowrap;left:14.40px;transform-origin:0 50%;">0</div>
<div style="top:224.00px;font-size:12.8px;line-height:15px;height:15px;color:#ececec;white-space:nowrap;left:14.40px;transform-origin:0 50%;">2</div>
<div style="top:236.00px;font-size:12.8px;line-height:15px;height:15px;color:#ececec;white-space:nowrap;left:14.40px;transform-origin:0 50%;">0</div>
<div style="top:264.00px;font-size:12.8px;line-height:15px;height:15px;color:#ececec;white-space:nowrap;left:14.40px;transform-origin:0 50%;">3</div>
<div style="top:275.00px;font-size:12.8px;line-height:15px;height:15px;color:#ececec;white-space:nowrap;left:14.40px;transform-origin:0 50%;">0</div>
<div style="top:303.00px;font-size:12.8px;line-height:15px;height:15px;color:#ececec;white-space:nowrap;left:14.40px;transform-origin:0 50%;">4</div>
<div style="top:315.00px;font-size:12.8px;line-height:15px;height:15px;color:#ececec;white-space:nowrap;left:14.40px;transform-origin:0 50%;">0</div>
<div style="top:342.00px;font-size:12.8px;line-height:15px;height:15px;color:#ececec;white-space:nowrap;left:14.40px;transform-origin:0 50%;">5</div>
<div style="top:354.00px;font-size:12.8px;line-height:15px;height:15px;color:#ececec;white-space:nowrap;left:14.40px;transform-origin:0 50%;">0</div>
<div style="top:382.00px;font-size:12.8px;line-height:15px;height:15px;color:#ececec;white-space:nowrap;left:14.40px;transform-origin:0 50%;">6</div>
<div style="top:393.00px;font-size:12.8px;line-height:15px;height:15px;color:#ececec;white-space:nowrap;left:14.40px;transform-origin:0 50%;">0</div>
<div style="top:421.00px;font-size:12.8px;line-height:15px;height:15px;color:#ececec;white-space:nowrap;left:14.40px;transform-origin:0 50%;">7</div>
<div style="top:433.00px;font-size:12.8px;line-height:15px;height:15px;color:#ececec;white-space:nowrap;left:14.40px;transform-origin:0 50%;">0</div>
<div style="top:460.00px;font-size:12.8px;line-height:15px;height:15px;color:#ececec;white-space:nowrap;left:14.40px;transform-origin:0 50%;">8</div>
<div style="top:472.00px;font-size:12.8px;line-height:15px;height:15px;color:#ececec;white-space:nowrap;left:14.40px;transform-origin:0 50%;">0</div>
<div style="top:500.00px;font-size:12.8px;line-height:15px;height:15px;color:#ececec;white-space:nowrap;left:14.40px;transform-origin:0 50%;">9</div>
<div style="top:512.00px;font-size:12.8px;line-height:15px;height:15px;color:#ececec;white-space:nowrap;left:14.40px;transform-origin:0 50%;">0</div>
<div style="top:539.00px;font-size:12.8px;line-height:15px;height:15px;color:#ececec;white-space:nowrap;left:14.40px;transform-origin:0 50%;">1</div>
<div style="top:551.00px;font-size:12.8px;line-height:15px;height:15px;color:#ececec;white-space:nowrap;left:14.40px;transform-origin:0 50%;">0</div>
<div style="top:562.00px;font-size:12.8px;line-height:15px;height:15px;color:#ececec;white-space:nowrap;left:14.40px;transform-origin:0 50%;">0</div>
<div style="top:579.00px;font-size:12.8px;line-height:15px;height:15px;color:#ececec;white-space:nowrap;left:14.40px;transform-origin:0 50%;">1</div>
<div style="top:590.00px;font-size:12.8px;line-height:15px;height:15px;color:#ececec;white-space:nowrap;left:14.40px;transform-origin:0 50%;">1</div>
<div style="top:602.00px;font-size:12.8px;line-height:15px;height:15px;color:#ececec;white-space:nowrap;left:14.40px;transform-origin:0 50%;">0</div>
<div style="top:618.00px;font-size:12.8px;line-height:15px;height:15px;color:#ececec;white-space:nowrap;left:14.40px;transform-origin:0 50%;">1</div>
<div style="top:630.00px;font-size:12.8px;line-height:15px;height:15px;color:#ececec;white-space:nowrap;left:14.40px;transform-origin:0 50%;">2</div>
<div style="top:641.00px;font-size:12.8px;line-height:15px;height:15px;color:#ececec;white-space:nowrap;left:14.40px;transform-origin:0 50%;">0</div>
<div style="top:697.00px;font-size:12.8px;line-height:15px;height:15px;color:#ececec;white-space:nowrap;left:14.40px;transform-origin:0 50%;">1</div>
<div style="top:708.00px;font-size:12.8px;line-height:15px;height:15px;color:#ececec;white-space:nowrap;left:14.40px;transform-origin:0 50%;">4</div>
<div style="top:720.00px;font-size:12.8px;line-height:15px;height:15px;color:#ececec;white-space:nowrap;left:14.40px;transform-origin:0 50%;">0</div>
<div style="top:736.00px;font-size:12.8px;line-height:15px;height:15px;color:#ececec;white-space:nowrap;left:14.40px;transform-origin:0 50%;">1</div>
<div style="top:748.00px;font-size:12.8px;line-height:15px;height:15px;color:#ececec;white-space:nowrap;left:14.40px;transform-origin:0 50%;">5</div>
<div style="top:759.00px;font-size:12.8px;line-height:15px;height:15px;color:#ececec;white-space:nowrap;left:14.40px;transform-origin:0 50%;">0</div>
<div style="top:775.00px;font-size:12.8px;line-height:15px;height:15px;color:#ececec;white-space:nowrap;left:14.40px;transform-origin:0 50%;">1</div>
<div style="top:787.00px;font-size:12.8px;line-height:15px;height:15px;color:#ececec;white-space:nowrap;left:14.40px;transform-origin:0 50%;">6</div>
<div style="top:799.00px;font-size:12.8px;line-height:15px;height:15px;color:#ececec;white-space:nowrap;left:14.40px;transform-origin:0 50%;">0</div>
<div style="top:815.00px;font-size:12.8px;line-height:15px;height:15px;color:#ececec;white-space:nowrap;left:14.40px;transform-origin:0 50%;">1</div>
<div style="top:826.00px;font-size:12.8px;line-height:15px;height:15px;color:#ececec;white-space:nowrap;left:14.40px;transform-origin:0 50%;">7</div>
<div style="top:838.00px;font-size:12.8px;line-height:15px;height:15px;color:#ececec;white-space:nowrap;left:14.40px;transform-origin:0 50%;">0</div>
<div style="top:854.00px;font-size:12.8px;line-height:15px;height:15px;color:#ececec;white-space:nowrap;left:14.40px;transform-origin:0 50%;">1</div>
<div style="top:866.00px;font-size:12.8px;line-height:15px;height:15px;color:#ececec;white-space:nowrap;left:14.40px;transform-origin:0 50%;">8</div>
<div style="top:877.00px;font-size:12.8px;line-height:15px;height:15px;color:#ececec;white-space:nowrap;left:14.40px;transform-origin:0 50%;">0</div>
<div style="top:893.00px;font-size:12.8px;line-height:15px;height:15px;color:#ececec;white-space:nowrap;left:14.40px;transform-origin:0 50%;">1</div>
<div style="top:905.00px;font-size:12.8px;line-height:15px;height:15px;color:#ececec;white-space:nowrap;left:14.40px;transform-origin:0 50%;">9</div>
<div style="top:917.00px;font-size:12.8px;line-height:15px;height:15px;color:#ececec;white-space:nowrap;left:14.40px;transform-origin:0 50%;">0</div>
<div style="top:933.00px;font-size:12.8px;line-height:15px;height:15px;color:#ececec;white-space:nowrap;left:14.40px;transform-origin:0 50%;">2</div>
<div style="top:944.00px;font-size:12.8px;line-height:15px;height:15px;color:#ececec;white-space:nowrap;left:14.40px;transform-origin:0 50%;">0</div>
<div style="top:956.00px;font-size:12.8px;line-height:15px;height:15px;color:#ececec;white-space:nowrap;left:14.40px;transform-origin:0 50%;">0</div>
<div style="top:972.00px;font-size:12.8px;line-height:15px;height:15px;color:#ececec;white-space:nowrap;left:14.40px;transform-origin:0 50%;">2</div>
<div style="top:984.00px;font-size:12.8px;line-height:15px;height:15px;color:#ececec;white-space:nowrap;left:14.40px;transform-origin:0 50%;">1</div>
<div style="top:995.00px;font-size:12.8px;line-height:15px;height:15px;color:#ececec;white-space:nowrap;left:14.40px;transform-origin:0 50%;">0</div>
<div style="top:1011.00px;font-size:12.8px;line-height:15px;height:15px;color:#ececec;white-space:nowrap;left:14.40px;transform-origin:0 50%;">2</div>
<div style="top:1023.00px;font-size:12.8px;line-height:15px;height:15px;color:#ececec;white-space:nowrap;left:14.40px;transform-origin:0 50%;">2</div>
<div style="top:1035.00px;font-size:12.8px;line-height:15px;height:15px;color:#ececec;white-space:nowrap;left:14.40px;transform-origin:0 50%;">0</div>
<div style="top:1051.00px;font-size:12.8px;line-height:15px;height:15px;color:#ececec;white-space:nowrap;left:14.40px;transform-origin:0 50%;">2</div>
<div style="top:1062.00px;font-size:12.8px;line-height:15px;height:15px;color:#ececec;white-space:nowrap;left:14.40px;transform-origin:0 50%;">3</div>
<div style="top:1074.00px;font-size:12.8px;line-height:15px;height:15px;color:#ececec;white-space:nowrap;left:14.40px;transform-origin:0 50%;">0</div>
<div style="top:1090.00px;font-size:12.8px;line-height:15px;height:15px;color:#ececec;white-space:nowrap;left:14.40px;transform-origin:0 50%;">2</div>
<div style="top:1102.00px;font-size:12.8px;line-height:15px;height:15px;color:#ececec;white-space:nowrap;left:14.40px;transform-origin:0 50%;">4</div>
<div style="top:1113.00px;font-size:12.8px;line-height:15px;height:15px;color:#ececec;white-space:nowrap;left:14.40px;transform-origin:0 50%;">0</div>
<div style="top:1129.00px;font-size:12.8px;line-height:15px;height:15px;color:#ececec;white-space:nowrap;left:14.40px;transform-origin:0 50%;">2</div>
<div style="top:1141.00px;font-size:12.8px;line-height:15px;height:15px;color:#ececec;white-space:nowrap;left:14.40px;transform-origin:0 50%;">5</div>
<div style="top:1153.00px;font-size:12.8px;line-height:15px;height:15px;color:#ececec;white-space:nowrap;left:14.40px;transform-origin:0 50%;">0</div>
<div style="top:1169.00px;font-size:12.8px;line-height:15px;height:15px;color:#ececec;white-space:nowrap;left:14.40px;transform-origin:0 50%;">2</div>
<div style="top:1180.00px;font-size:12.8px;line-height:15px;height:15px;color:#ececec;white-space:nowrap;left:14.40px;transform-origin:0 50%;">6</div>
<div style="top:1192.00px;font-size:12.8px;line-height:15px;height:15px;color:#ececec;white-space:nowrap;left:14.40px;transform-origin:0 50%;">0</div>
<div style="top:1208.00px;font-size:12.8px;line-height:15px;height:15px;color:#ececec;white-space:nowrap;left:14.40px;transform-origin:0 50%;">2</div>
<div style="top:1220.00px;font-size:12.8px;line-height:15px;height:15px;color:#ececec;white-space:nowrap;left:14.40px;transform-origin:0 50%;">7</div>
<div style="top:1231.00px;font-size:12.8px;line-height:15px;height:15px;color:#ececec;white-space:nowrap;left:14.40px;transform-origin:0 50%;">0</div>
<div style="top:1248.00px;font-size:12.8px;line-height:15px;height:15px;color:#ececec;white-space:nowrap;left:14.40px;transform-origin:0 50%;">2</div>
<div style="top:1259.00px;font-size:12.8px;line-height:15px;height:15px;color:#ececec;white-space:nowrap;left:14.40px;transform-origin:0 50%;">8</div>
<div style="top:1271.00px;font-size:12.8px;line-height:15px;height:15px;color:#ececec;white-space:nowrap;left:14.40px;transform-origin:0 50%;">0</div>
<div style="top:1287.00px;font-size:12.8px;line-height:15px;height:15px;color:#ececec;white-space:nowrap;left:14.40px;transform-origin:0 50%;">2</div>
<div style="top:1299.00px;font-size:12.8px;line-height:15px;height:15px;color:#ececec;white-space:nowrap;left:14.40px;transform-origin:0 50%;">9</div>
<div style="top:1310.00px;font-size:12.8px;line-height:15px;height:15px;color:#ececec;white-space:nowrap;left:14.40px;transform-origin:0 50%;">0</div>
<div style="top:1326.00px;font-size:12.8px;line-height:15px;height:15px;color:#ececec;white-space:nowrap;left:14.40px;transform-origin:0 50%;">3</div>
<div style="top:1338.00px;font-size:12.8px;line-height:15px;height:15px;color:#ececec;white-space:nowrap;left:14.40px;transform-origin:0 50%;">0</div>
<div style="top:1350.00px;font-size:12.8px;line-height:15px;height:15px;color:#ececec;white-space:nowrap;left:14.40px;transform-origin:0 50%;">0</div>
<div style="left:16.5px;top:1368px;width:4px;height:2px;background:#e0e0e0;"></div>
<div style="left:2452px;top:188px;width:17px;height:1182px;background:#4b4b4b;"></div>
<svg style="left:2452px;top:1352px;" width="17" height="20" viewBox="0 0 17 20"><path d="M4 6 L8.5 10.5 L13 6" fill="none" stroke="#8a8a8a" stroke-width="1.2"/></svg>
<div style="left:11px;top:1370px;width:2458px;height:21px;background:#535353;"></div>
<div style="left:655px;top:1370px;width:1769px;height:21px;background:#4b4b4b;"></div>
<div style="left:962px;top:1371px;width:1152px;height:19px;background:#6c6c6c;border-radius:9.5px;"></div>
<div style="left:11px;top:1390px;width:2458px;height:1px;background:#3c3c3c;"></div>
<div style="left:2469px;top:131px;width:2.5px;height:1260px;background:#3a3a3a;"></div>
<div style="top:250.40px;font-size:30px;line-height:33px;height:33px;color:#242424;white-space:nowrap;right:1416.30px;transform-origin:100% 50%;direction:rtl;">א.</div>
<div style="top:263.90px;font-size:15.45px;line-height:17px;height:17px;color:#242424;white-space:nowrap;right:1451.97px;transform-origin:100% 50%;direction:rtl;transform:scaleX(0.9686);">צבוד במה. הטים ליעילות בבין עות ביצרו מכיו</div>
<div style="top:290.08px;font-size:15.45px;line-height:17px;height:17px;color:#242424;white-space:nowrap;right:1417.80px;transform-origin:100% 50%;direction:rtl;transform:scaleX(0.9940);">לבי ענים לכל יינדקס. הקבצים מוסרים</div>
<div style="top:316.27px;font-size:15.45px;line-height:17px;height:17px;color:#242424;white-space:nowrap;right:1417.80px;transform-origin:100% 50%;direction:rtl;">יטה מהיון שלכם לחזור הר יים בזכונות הזמניים</div>
<div style="top:342.45px;font-size:15.45px;line-height:17px;height:17px;color:#242424;white-space:nowrap;right:1417.80px;transform-origin:100% 50%;direction:rtl;transform:scaleX(1.0147);">מעוצבעזרת שתרצות אוותיים אתם לחזורה שלכל</div>
<div style="top:368.64px;font-size:15.45px;line-height:17px;height:17px;color:#242424;white-space:nowrap;right:1417.80px;transform-origin:100% 50%;direction:rtl;transform:scaleX(1.0082);">ואפקטיפור מעות בקצובעצמיות שתמשקיצרו</div>
<div style="top:394.82px;font-size:15.45px;line-height:17px;height:17px;color:#242424;white-space:nowrap;right:1417.80px;transform-origin:100% 50%;direction:rtl;">טבלאוותרצוע</div>
<div style="top:421.01px;font-size:15.45px;line-height:17px;height:17px;color:#242424;white-space:nowrap;right:1417.80px;transform-origin:100% 50%;direction:rtl;transform:scaleX(0.9920);">קה חד. דונות של דבר מוסרים לשמעות אם</div>
<div style="top:447.19px;font-size:15.45px;line-height:17px;height:17px;color:#242424;white-space:nowrap;right:1417.80px;transform-origin:100% 50%;direction:rtl;transform:scaleX(0.9866);">אוטומטים לדפי אתם מין שתמשמאל, קבציראה</div>
<div style="top:473.38px;font-size:15.45px;line-height:17px;height:17px;color:#242424;white-space:nowrap;right:1417.80px;transform-origin:100% 50%;direction:rtl;">ואפשייצוע</div>
<div style="top:499.56px;font-size:15.45px;line-height:17px;height:17px;color:#242424;white-space:nowrap;right:1417.80px;transform-origin:100% 50%;direction:rtl;transform:scaleX(0.9880);">חון בביטה ממשק העבות שתמושל אחרים</div>
<div style="top:525.75px;font-size:15.45px;line-height:17px;height:17px;color:#242424;white-space:nowrap;right:1417.80px;transform-origin:100% 50%;direction:rtl;">ללות הצלל שיירו בעותיים לגרפיה. ות כל דפסה</div>
<div style="top:551.93px;font-size:15.45px;line-height:17px;height:17px;color:#242424;white-space:nowrap;right:1417.80px;transform-origin:100% 50%;direction:rtl;transform:scaleX(0.9905);">ליטחות. עניתנים מושלביטה שיפור יוחורה בכליטה</div>
<div style="top:578.12px;font-size:15.45px;line-height:17px;height:17px;color:#242424;white-space:nowrap;right:1417.80px;transform-origin:100% 50%;direction:rtl;">וביעיצו לדפיה. פיסופו למלל, יעילוחדש יצרו לכל</div>
<div style="top:604.30px;font-size:15.45px;line-height:17px;height:17px;color:#242424;white-space:nowrap;right:1417.80px;transform-origin:100% 50%;direction:rtl;transform:scaleX(0.9884);">ומפוגרפיקה מסמך, קבצות מסמך, דבר המסמך,</div>
<div style="top:630.49px;font-size:15.45px;line-height:17px;height:17px;color:#242424;white-space:nowrap;right:1417.80px;transform-origin:100% 50%;direction:rtl;transform:scaleX(0.9913);">דפיה. תוכנה לנסו למת במהרגישו משו מכים</div>
<div style="top:656.67px;font-size:15.45px;line-height:17px;height:17px;color:#242424;white-space:nowrap;right:1417.80px;transform-origin:100% 50%;direction:rtl;transform:scaleX(0.9931);">לגרפיסו משו אחרים לספר אם אחופור אתם כאות</div>
<div style="top:682.86px;font-size:15.45px;line-height:17px;height:17px;color:#242424;white-space:nowrap;right:1417.80px;transform-origin:100% 50%;direction:rtl;transform:scaleX(0.9882);">שק הדפסה מימין אחרים אם משקיפורים במין בבי</div>
<div style="top:709.04px;font-size:15.45px;line-height:17px;height:17px;color:#242424;white-space:nowrap;right:1417.80px;transform-origin:100% 50%;direction:rtl;transform:scaleX(0.9958);">אתם לגרפיה. ור הירו לחזורה מה. סה שקיצוע</div>
<div style="top:735.23px;font-size:15.45px;line-height:17px;height:17px;color:#242424;white-space:nowrap;right:1417.80px;transform-origin:100% 50%;direction:rtl;">עבודה, לדפו שתוכליטה מסמך, לגרפיקר, דבר מצוע</div>
<div style="top:761.41px;font-size:15.45px;line-height:17px;height:17px;color:#242424;white-space:nowrap;right:1417.80px;transform-origin:100% 50%;direction:rtl;transform:scaleX(0.9904);">טים תכונים לב עיקו מים אורך התוכן אתם שתרצו.</div>
<div style="top:787.60px;font-size:15.45px;line-height:17px;height:17px;color:#242424;white-space:nowrap;right:1417.80px;transform-origin:100% 50%;direction:rtl;">תאפשר משמעוצבותנת כבות שק הטי אם לחזורך</div>
<div style="top:813.78px;font-size:15.45px;line-height:17px;height:17px;color:#242424;white-space:nowrap;right:1417.80px;transform-origin:100% 50%;direction:rtl;transform:scaleX(1.0120);">השתוכל של תכונות של יצרו לגרפיקודה בשלים</div>
<div style="top:839.97px;font-size:15.45px;line-height:17px;height:17px;color:#242424;white-space:nowrap;right:1417.80px;transform-origin:100% 50%;direction:rtl;">ממשו שתוכלו בקצות הקבצירות הטי אחרים</div>
<div style="top:866.15px;font-size:15.45px;line-height:17px;height:17px;color:#242424;white-space:nowrap;right:1417.80px;transform-origin:100% 50%;direction:rtl;transform:scaleX(0.9873);">ענים תכונותיירו שיפוס. קיפו מין אחרים אחרים</div>
<div style="top:892.34px;font-size:15.45px;line-height:17px;height:17px;color:#242424;white-space:nowrap;right:1417.80px;transform-origin:100% 50%;direction:rtl;transform:scaleX(0.9874);">לנסות בשכם אב ענים כאוות אוטומטי פוגרפי</div>
<div style="top:918.52px;font-size:15.45px;line-height:17px;height:17px;color:#242424;white-space:nowrap;right:1417.80px;transform-origin:100% 50%;direction:rtl;transform:scaleX(1.0047);">מיוחופו סריכה. קיצירתיים לשל ובעזרת</div>
<div style="top:944.71px;font-size:15.45px;line-height:17px;height:17px;color:#242424;white-space:nowrap;right:1417.80px;transform-origin:100% 50%;direction:rtl;transform:scaleX(0.9862);">ובעילותניתנת התוכן עם בין אתם מכייראה</div>
<div style="top:970.89px;font-size:15.45px;line-height:17px;height:17px;color:#242424;white-space:nowrap;right:1417.80px;transform-origin:100% 50%;direction:rtl;transform:scaleX(0.9954);">לנסופשכבר לדפסה וביטה ובעצמהר מוס.עבות</div>
<div style="top:997.08px;font-size:15.45px;line-height:17px;height:17px;color:#242424;white-space:nowrap;right:1417.80px;transform-origin:100% 50%;direction:rtl;transform:scaleX(1.0180);">לשל וב עיל אם רבי אותיכה. היררכיירכים אות</div>
<div style="top:1023.26px;font-size:15.45px;line-height:17px;height:17px;color:#242424;white-space:nowrap;right:1417.80px;transform-origin:100% 50%;direction:rtl;transform:scaleX(1.0069);">הקבצים לערים רבין את בשכם משקיצים כלים לכם</div>
<div style="top:1049.45px;font-size:15.45px;line-height:17px;height:17px;color:#242424;white-space:nowrap;right:1417.80px;transform-origin:100% 50%;direction:rtl;transform:scaleX(0.9822);">אתם רביעיצו.</div>
<div style="top:1075.63px;font-size:15.45px;line-height:17px;height:17px;color:#242424;white-space:nowrap;right:1417.80px;transform-origin:100% 50%;direction:rtl;transform:scaleX(1.0041);">עבות בשלמללו חופשיפור העניתניקר, לגרפיסו</div>
<div style="top:1101.82px;font-size:15.45px;line-height:17px;height:17px;color:#242424;white-space:nowrap;right:1417.80px;transform-origin:100% 50%;direction:rtl;transform:scaleX(0.9933);">טבלאות הדפסה חופשר למלל, יות העבוד</div>
<div style="top:1128.00px;font-size:15.45px;line-height:17px;height:17px;color:#242424;white-space:nowrap;right:1417.80px;transform-origin:100% 50%;direction:rtl;">בעזרתייצות אם מספר אם מצוע</div>
<div style="top:1154.19px;font-size:15.45px;line-height:17px;height:17px;color:#242424;white-space:nowrap;right:1417.80px;transform-origin:100% 50%;direction:rtl;">בעצמהר המלל, דפסה מושלמת בעילות ובעילו</div>
<div style="top:1180.38px;font-size:15.45px;line-height:17px;height:17px;color:#242424;white-space:nowrap;right:1417.80px;transform-origin:100% 50%;direction:rtl;">טבלאות לכם בקצו.</div>
<div style="top:1206.56px;font-size:15.45px;line-height:17px;height:17px;color:#242424;white-space:nowrap;right:1417.80px;transform-origin:100% 50%;direction:rtl;">ובסות בשכבודה לל יינדקס. הדפיסופותנים מוסרים</div>
<div style="top:246.50px;font-size:30px;line-height:33px;height:33px;color:#242424;white-space:nowrap;right:1759.20px;transform-origin:100% 50%;direction:rtl;">ב.</div>
<div style="top:260.00px;font-size:15.45px;line-height:17px;height:17px;color:#242424;white-space:nowrap;right:1793.98px;transform-origin:100% 50%;direction:rtl;transform:scaleX(0.9763);">שתמשמעוצמה. יסו חדש יים לכם שתמונות</div>
<div style="top:286.19px;font-size:15.45px;line-height:17px;height:17px;color:#242424;white-space:nowrap;right:1760.70px;transform-origin:100% 50%;direction:rtl;">נפשכם אחון עילות כל ובעצמים בקצוין עילוחופשכם</div>
<div style="top:312.37px;font-size:15.45px;line-height:17px;height:17px;color:#242424;white-space:nowrap;right:1760.70px;transform-origin:100% 50%;direction:rtl;transform:scaleX(0.9876);">בזכונותיים מספר אתם לב היו חון לספר, העבות</div>
<div style="top:338.56px;font-size:15.45px;line-height:17px;height:17px;color:#242424;white-space:nowrap;right:1760.70px;transform-origin:100% 50%;direction:rtl;">בזכונות כמהר אם מושל דפיסו מושליטחורה למלל</div>
<div style="top:364.74px;font-size:15.45px;line-height:17px;height:17px;color:#242424;white-space:nowrap;right:1760.70px;transform-origin:100% 50%;direction:rtl;">ובעוצמה חופשר לעריכם ומפוגרפ יסופשראה חדש</div>
<div style="top:390.92px;font-size:15.45px;line-height:17px;height:17px;color:#242424;white-space:nowrap;right:1760.70px;transform-origin:100% 50%;direction:rtl;transform:scaleX(0.9835);">יעילותיים רביעיל את ומפוס.עבות מספו חון לעבדו</div>
<div style="top:417.11px;font-size:15.45px;line-height:17px;height:17px;color:#242424;white-space:nowrap;right:1760.70px;transform-origin:100% 50%;direction:rtl;transform:scaleX(0.9898);">של יים כבודה בביטה לדפי אם לעריכה. הצלל, דבר</div>
<div style="top:443.29px;font-size:15.45px;line-height:17px;height:17px;color:#242424;white-space:nowrap;right:1760.70px;transform-origin:100% 50%;direction:rtl;">בשלכלות כאוותיינדקס. המלל, דפורך הטיפוס.עבדו</div>
<div style="top:469.48px;font-size:15.45px;line-height:17px;height:17px;color:#242424;white-space:nowrap;right:1760.70px;transform-origin:100% 50%;direction:rtl;">לנסופורך הצללה שיפוגרפיקה לנסו אם לים אוות</div>
<div style="top:495.66px;font-size:15.45px;line-height:17px;height:17px;color:#242424;white-space:nowrap;right:1760.70px;transform-origin:100% 50%;direction:rtl;transform:scaleX(0.9898);">כמהר אצבעוצבות. עצמיוחד.</div>
<div style="top:521.85px;font-size:15.45px;line-height:17px;height:17px;color:#242424;white-space:nowrap;right:1760.70px;transform-origin:100% 50%;direction:rtl;transform:scaleX(1.0045);">הניים בשכם תכונות הסקיפו בזכות בכל תוכנה</div>
<div style="top:548.03px;font-size:15.45px;line-height:17px;height:17px;color:#242424;white-space:nowrap;right:1760.70px;transform-origin:100% 50%;direction:rtl;">בשלב הנים כמהרגישו שתוכן שתר במימין בשכבודה</div>
<div style="top:574.22px;font-size:15.45px;line-height:17px;height:17px;color:#242424;white-space:nowrap;right:1760.70px;transform-origin:100% 50%;direction:rtl;transform:scaleX(0.9897);">ולתמשמאל, ייניקה ואפשר יעילות וב הקבצוב ענים</div>
<div style="top:600.40px;font-size:15.45px;line-height:17px;height:17px;color:#242424;white-space:nowrap;right:1760.70px;transform-origin:100% 50%;direction:rtl;transform:scaleX(0.9889);">בי משו בכלות העבות הר אתם כאורך הדפיסות. נים</div>
<div style="top:626.59px;font-size:15.45px;line-height:17px;height:17px;color:#242424;white-space:nowrap;right:1760.70px;transform-origin:100% 50%;direction:rtl;">לספור אדו מצוין בי אדו שק המללות לכל תכונות</div>
<div style="top:652.77px;font-size:15.45px;line-height:17px;height:17px;color:#242424;white-space:nowrap;right:1760.70px;transform-origin:100% 50%;direction:rtl;transform:scaleX(1.0068);">בקצות המלל שתוכן ענים לגרפיקר, הזמנים כמהשר</div>
<div style="top:678.96px;font-size:15.45px;line-height:17px;height:17px;color:#242424;white-space:nowrap;right:1760.70px;transform-origin:100% 50%;direction:rtl;transform:scaleX(0.9838);">אם ואינדקס.עבות העבדו טבלאותנת מצותנת בבין</div>
<div style="top:705.14px;font-size:15.45px;line-height:17px;height:17px;color:#242424;white-space:nowrap;right:1760.70px;transform-origin:100% 50%;direction:rtl;transform:scaleX(0.9942);">עם אתם לחזור את לעבות הצלל שלמלל, יצו.</div>
<div style="top:731.33px;font-size:15.45px;line-height:17px;height:17px;color:#242424;white-space:nowrap;right:1760.70px;transform-origin:100% 50%;direction:rtl;transform:scaleX(0.9863);">יפו מספר מצוין לל, קבצים אדו בשלכם בין עם את</div>
<div style="top:757.51px;font-size:15.45px;line-height:17px;height:17px;color:#242424;white-space:nowrap;right:1760.70px;transform-origin:100% 50%;direction:rtl;transform:scaleX(1.0063);">הדפורים למת בקצות ליטה ומפורך הזמניתניקר,</div>
<div style="top:783.70px;font-size:15.45px;line-height:17px;height:17px;color:#242424;white-space:nowrap;right:1760.70px;transform-origin:100% 50%;direction:rtl;">קבצים בקודה לכם ואפשיינים שתמונות. היוחורה</div>
<div style="top:809.88px;font-size:15.45px;line-height:17px;height:17px;color:#242424;white-space:nowrap;right:1760.70px;transform-origin:100% 50%;direction:rtl;transform:scaleX(1.0050);">בשלב עוצמהרגישו מכיינים לכלות שקיצרות במים</div>
<div style="top:836.07px;font-size:15.45px;line-height:17px;height:17px;color:#242424;white-space:nowrap;right:1760.70px;transform-origin:100% 50%;direction:rtl;transform:scaleX(0.9922);">אוטומטיפור מספר, יים וב הקבצירות ולתמשק</div>
<div style="top:862.25px;font-size:15.45px;line-height:17px;height:17px;color:#242424;white-space:nowrap;right:1760.70px;transform-origin:100% 50%;direction:rtl;transform:scaleX(0.9917);">הירותיכם לדפיה. אחור אדו ללה שיפורט במה ללו</div>
<div style="top:888.44px;font-size:15.45px;line-height:17px;height:17px;color:#242424;white-space:nowrap;right:1760.70px;transform-origin:100% 50%;direction:rtl;">בקצו.</div>
<div style="top:914.62px;font-size:15.45px;line-height:17px;height:17px;color:#242424;white-space:nowrap;right:1760.70px;transform-origin:100% 50%;direction:rtl;transform:scaleX(0.9849);">ים מספו אם בי עילותרצות במהירת התוכן</div>
<div style="top:940.81px;font-size:15.45px;line-height:17px;height:17px;color:#242424;white-space:nowrap;right:1760.70px;transform-origin:100% 50%;direction:rtl;transform:scaleX(0.9951);">לעבדוניים אם אתם לנסו משקיציר ותרצותייצרו</div>
<div style="top:967.00px;font-size:15.45px;line-height:17px;height:17px;color:#242424;white-space:nowrap;right:1760.70px;transform-origin:100% 50%;direction:rtl;transform:scaleX(0.9942);">בשלכם רבין ליטחופשכם מכים ליעילו טבלאור אם</div>
<div style="top:993.18px;font-size:15.45px;line-height:17px;height:17px;color:#242424;white-space:nowrap;right:1760.70px;transform-origin:100% 50%;direction:rtl;transform:scaleX(1.0082);">לשל שק הדפסה שתוכן ענים</div>
<div style="top:1019.37px;font-size:15.45px;line-height:17px;height:17px;color:#242424;white-space:nowrap;right:1760.70px;transform-origin:100% 50%;direction:rtl;transform:scaleX(0.9771);">מאל, יעילוחור משמאל, יים אחרים יעילו אחרים</div>
<div style="top:1045.55px;font-size:15.45px;line-height:17px;height:17px;color:#242424;white-space:nowrap;right:1760.70px;transform-origin:100% 50%;direction:rtl;transform:scaleX(0.9926);">בין ענייראה חדש יעילוחות בשלכל שלבין אות</div>
<div style="top:1071.74px;font-size:15.45px;line-height:17px;height:17px;color:#242424;white-space:nowrap;right:1760.70px;transform-origin:100% 50%;direction:rtl;">ולתמונותנת הטי את לחזורך התוכל של דבר</div>
<div style="top:1097.92px;font-size:15.45px;line-height:17px;height:17px;color:#242424;white-space:nowrap;right:1760.70px;transform-origin:100% 50%;direction:rtl;transform:scaleX(0.9958);">אצבעיקו מעוצמהרגישו מצו טבלאוטומטי</div>
<div style="top:1124.11px;font-size:15.45px;line-height:17px;height:17px;color:#242424;white-space:nowrap;right:1760.70px;transform-origin:100% 50%;direction:rtl;transform:scaleX(0.9894);">מכיינדקס. וחדש יצוין אתם כבר אתם לספר, דפסה</div>
<div style="top:1150.29px;font-size:15.45px;line-height:17px;height:17px;color:#242424;white-space:nowrap;right:1760.70px;transform-origin:100% 50%;direction:rtl;transform:scaleX(0.9925);">מושלביטה ובעצמהשר יו טבלאוטומטים לנסופורט</div>
<div style="top:1176.47px;font-size:15.45px;line-height:17px;height:17px;color:#242424;white-space:nowrap;right:1760.70px;transform-origin:100% 50%;direction:rtl;transform:scaleX(1.0067);">בעילוחופשכבר הרגישו מים כל של</div>
<div style="left:494.2px;top:224.3px;width:669.9px;height:1011.4px;border:1.3px solid #98bffa;box-sizing:border-box;"></div>
<div style="left:820.2px;top:225px;width:1.2px;height:1010px;background:#a6c6f6;"></div>
<div style="left:836.8px;top:225px;width:1.2px;height:1010px;background:#a6c6f6;"></div>
<div style="left:490.5px;top:220.5px;width:8.6px;height:8.6px;background:#fff;border:1.3px solid #8ab4f5;box-sizing:border-box;"></div>
<div style="left:490.5px;top:1231.0px;width:8.6px;height:8.6px;background:#fff;border:1.3px solid #8ab4f5;box-sizing:border-box;"></div>
<div style="left:824.2px;top:220.5px;width:8.6px;height:8.6px;background:#fff;border:1.3px solid #8ab4f5;box-sizing:border-box;"></div>
<div style="left:824.2px;top:1231.0px;width:8.6px;height:8.6px;background:#fff;border:1.3px solid #8ab4f5;box-sizing:border-box;"></div>
<div style="left:1159.2px;top:220.5px;width:8.6px;height:8.6px;background:#fff;border:1.3px solid #8ab4f5;box-sizing:border-box;"></div>
<div style="left:1159.2px;top:1231.0px;width:8.6px;height:8.6px;background:#fff;border:1.3px solid #8ab4f5;box-sizing:border-box;"></div>
<div style="left:490.5px;top:726.2px;width:8.6px;height:8.6px;background:#fff;border:1.3px solid #8ab4f5;box-sizing:border-box;"></div>
<div style="left:1159.2px;top:726.2px;width:8.6px;height:8.6px;background:#fff;border:1.3px solid #8ab4f5;box-sizing:border-box;"></div>
<div style="left:1024.4px;top:220px;width:10px;height:10px;background:#3b7fd6;"></div>
<div style="left:1158.5px;top:240px;width:11px;height:11px;background:#fff;border:1.3px solid #98bffa;box-sizing:border-box;"></div>
<div style="left:1159.8px;top:250.7px;width:9px;height:9.5px;background:#ecdfc8;border:1.3px solid #98bffa;box-sizing:border-box;"></div>
<div style="left:489.3px;top:1209px;width:11px;height:11px;background:#fff;border:1.3px solid #98bffa;box-sizing:border-box;"></div>
<div style="left:26px;top:19.8px;width:25.3px;height:25.2px;background:#5a101b;border-radius:4.5px;"></div>
<div style="top:21.00px;font-size:17.6px;line-height:20px;height:20px;color:#cf8a6c;white-space:nowrap;font-weight:bold;left:31.30px;transform-origin:0 50%;transform:scaleX(0.8952);">Id</div>
<svg style="left:74px;top:22px;" width="26" height="22" viewBox="0 0 26 22"><path d="M12.5 0.8 L1.5 11 Q0.9 12 2.1 12 H3.8 V20.8 H10.3 V13.4 H14.7 V20.8 H21.7 V12 H23.3 Q24.5 12 23.7 11 Z" fill="#c8c8c8"/></svg>
<div style="top:26.00px;font-size:15.8px;line-height:17px;height:17px;color:#e4e4e4;white-space:nowrap;left:125.00px;transform-origin:0 50%;transform:scaleX(0.8642);">File</div>
<div style="top:26.00px;font-size:15.8px;line-height:17px;height:17px;color:#e4e4e4;white-space:nowrap;left:169.00px;transform-origin:0 50%;transform:scaleX(0.9183);">Edit</div>
<div style="top:26.00px;font-size:15.8px;line-height:17px;height:17px;color:#e4e4e4;white-space:nowrap;left:214.50px;transform-origin:0 50%;transform:scaleX(0.9592);">Layout</div>
<div style="top:26.00px;font-size:15.8px;line-height:17px;height:17px;color:#e4e4e4;white-space:nowrap;left:281.00px;transform-origin:0 50%;transform:scaleX(0.9343);">Type</div>
<div style="top:26.00px;font-size:15.8px;line-height:17px;height:17px;color:#e4e4e4;white-space:nowrap;left:334.00px;transform-origin:0 50%;transform:scaleX(0.9746);">Object</div>
<div style="top:26.00px;font-size:15.8px;line-height:17px;height:17px;color:#e4e4e4;white-space:nowrap;left:399.00px;transform-origin:0 50%;transform:scaleX(0.9399);">Table</div>
<div style="top:26.00px;font-size:15.8px;line-height:17px;height:17px;color:#e4e4e4;white-space:nowrap;left:456.00px;transform-origin:0 50%;transform:scaleX(0.9570);">View</div>
<div style="top:26.00px;font-size:15.8px;line-height:17px;height:17px;color:#e4e4e4;white-space:nowrap;left:510.00px;transform-origin:0 50%;transform:scaleX(0.9877);">Window</div>
<div style="top:26.00px;font-size:15.8px;line-height:17px;height:17px;color:#e4e4e4;white-space:nowrap;left:586.00px;transform-origin:0 50%;transform:scaleX(0.9096);">Id-Extras</div>
<div style="top:26.00px;font-size:15.8px;line-height:17px;height:17px;color:#e4e4e4;white-space:nowrap;left:666.00px;transform-origin:0 50%;transform:scaleX(0.9540);">Help</div>
<div style="left:2079px;top:20px;width:67px;height:25px;background:#1b78e2;border-radius:12.5px;"></div>
<div style="top:26.00px;font-size:15.5px;line-height:17px;height:17px;color:#fff;white-space:nowrap;left:2091.50px;transform-origin:0 50%;transform:scaleX(0.9309);-webkit-text-stroke:0.25px #fff;">Share</div>
<div style="left:2156.5px;top:20px;width:1px;height:24px;background:#6a6a6a;"></div>
<div style="top:24.00px;font-size:15.4px;line-height:17px;height:17px;color:#e4e4e4;white-space:nowrap;left:2172.50px;transform-origin:0 50%;transform:scaleX(0.9243);">Yossi</div>
<svg style="left:2216px;top:29px;" width="14" height="10" viewBox="0 0 14 10"><path d="M2.5 3 L7 7.5 L11.5 3" fill="none" stroke="#e0e0e0" stroke-width="1.8"/></svg>
<div style="left:2244px;top:20px;width:1px;height:24px;background:#6a6a6a;"></div>
<div style="left:2256px;top:20px;width:162px;height:25px;background:#454545;border:1px solid #6a6a6a;box-sizing:border-box;border-radius:3px;"></div>
<svg style="left:2260px;top:24px;" width="24" height="18" viewBox="0 0 24 18"><circle cx="10" cy="7" r="4.6" fill="none" stroke="#2d8cf0" stroke-width="1.8"/><path d="M6.6 10.6 L1.5 15.8" stroke="#2d8cf0" stroke-width="2" stroke-linecap="round"/><path d="M15.5 12 H21.5 L18.5 15 Z" fill="#2d8cf0"/></svg>
<div style="top:26.00px;font-size:13.6px;line-height:15px;height:15px;color:#8c8c8c;white-space:nowrap;left:2287.50px;transform-origin:0 50%;transform:scaleX(0.8688);">Adobe Stock</div>
<div style="left:2438px;top:11px;width:129px;height:24px;border:1px solid #666;border-top:none;box-sizing:border-box;border-radius:0 0 5px 5px;"></div>
<div style="left:2473px;top:11px;width:1px;height:23px;background:#666;"></div>
<div style="left:2507.5px;top:11px;width:1px;height:23px;background:#666;"></div>
<div style="left:2450px;top:24.5px;width:13px;height:4px;background:#c4c4c4;"></div>
<svg style="left:2482px;top:16px;" width="18" height="15" viewBox="0 0 18 15"><rect x="8" y="1.5" width="7.5" height="7.5" fill="none" stroke="#c4c4c4" stroke-width="2"/><rect x="2" y="6.5" width="7.5" height="7" fill="#535353" stroke="#c4c4c4" stroke-width="2"/></svg>
<svg style="left:2530px;top:17px;" width="16" height="12" viewBox="0 0 16 12"><path d="M2 1 L13.5 11 M13.5 1 L2 11" stroke="#d0d0d0" stroke-width="2.2"/></svg>
<svg style="left:16px;top:80px;" width="6" height="28" viewBox="0 0 6 28"><rect x="1.5" y="1" width="2.5" height="1.2" fill="#444"/><rect x="1.5" y="4" width="2.5" height="1.2" fill="#444"/><rect x="1.5" y="7" width="2.5" height="1.2" fill="#444"/><rect x="1.5" y="10" width="2.5" height="1.2" fill="#444"/><rect x="1.5" y="13" width="2.5" height="1.2" fill="#444"/><rect x="1.5" y="16" width="2.5" height="1.2" fill="#444"/><rect x="1.5" y="19" width="2.5" height="1.2" fill="#444"/><rect x="1.5" y="22" width="2.5" height="1.2" fill="#444"/><rect x="1.5" y="25" width="2.5" height="1.2" fill="#444"/></svg>
<svg style="left:46px;top:78px;" width="32" height="32" viewBox="0 0 32 32"><rect x="0.5" y="0.5" width="7.5" height="7.5" fill="none" stroke="#c8c8c8" stroke-width="1"/><rect x="12.2" y="0.5" width="7.5" height="7.5" fill="none" stroke="#c8c8c8" stroke-width="1"/><rect x="23.9" y="0.5" width="7.5" height="7.5" fill="none" stroke="#c8c8c8" stroke-width="1"/><rect x="0.5" y="12.2" width="7.5" height="7.5" fill="none" stroke="#c8c8c8" stroke-width="1"/><rect x="12.2" y="12.2" width="7.5" height="7.5" fill="#fff" stroke="#fff"/><rect x="23.9" y="12.2" width="7.5" height="7.5" fill="none" stroke="#c8c8c8" stroke-width="1"/><rect x="0.5" y="23.9" width="7.5" height="7.5" fill="none" stroke="#c8c8c8" stroke-width="1"/><rect x="12.2" y="23.9" width="7.5" height="7.5" fill="none" stroke="#c8c8c8" stroke-width="1"/><rect x="23.9" y="23.9" width="7.5" height="7.5" fill="none" stroke="#c8c8c8" stroke-width="1"/><path d="M8 4.2H12.2M19.7 4.2H23.9M8 27.7H12.2M19.7 27.7H23.9M4.2 8V12.2M4.2 19.7V23.9M27.7 8V12.2M27.7 19.7V23.9" stroke="#c8c8c8" stroke-width="1"/></svg>
<div style="top:71.00px;font-size:14px;line-height:16px;height:16px;color:#e4e4e4;white-space:nowrap;left:92.30px;transform-origin:0 50%;transform:scaleX(0.9072);">X:</div>
<div style="top:103.00px;font-size:14px;line-height:16px;height:16px;color:#e4e4e4;white-space:nowrap;left:92.80px;transform-origin:0 50%;transform:scaleX(0.9233);">Y:</div>
<div style="top:71.00px;font-size:14px;line-height:16px;height:16px;color:#e4e4e4;white-space:nowrap;left:231.00px;transform-origin:0 50%;transform:scaleX(0.9199);">W:</div>
<div style="top:103.00px;font-size:14px;line-height:16px;height:16px;color:#e4e4e4;white-space:nowrap;left:234.00px;transform-origin:0 50%;transform:scaleX(0.8929);">H:</div>
<div style="left:109px;top:65px;width:109px;height:25px;background:#454545;border:1px solid #6a6a6a;box-sizing:border-box;border-radius:3px;"></div>
<div style="left:130px;top:66px;width:1px;height:23px;background:#6a6a6a;"></div>
<svg style="left:109px;top:65px;" width="21" height="25" viewBox="0 0 21 25"><path d="M5.8 8.9 L10.5 4.4 L15.2 8.9 M5.8 16.4 L10.5 20.9 L15.2 16.4" fill="none" stroke="#c8c8c8" stroke-width="1.2"/></svg>
<div style="top:70.00px;font-size:13.1px;line-height:15px;height:15px;color:#e4e4e4;white-space:nowrap;left:136.30px;transform-origin:0 50%;transform:scaleX(0.9616);">105 mm</div>
<div style="left:109px;top:98px;width:109px;height:25px;background:#454545;border:1px solid #6a6a6a;box-sizing:border-box;border-radius:3px;"></div>
<div style="left:130px;top:99px;width:1px;height:23px;background:#6a6a6a;"></div>
<svg style="left:109px;top:98px;" width="21" height="25" viewBox="0 0 21 25"><path d="M5.8 8.9 L10.5 4.4 L15.2 8.9 M5.8 16.4 L10.5 20.9 L15.2 16.4" fill="none" stroke="#c8c8c8" stroke-width="1.2"/></svg>
<div style="top:103.00px;font-size:13.1px;line-height:15px;height:15px;color:#e4e4e4;white-space:nowrap;left:136.30px;transform-origin:0 50%;transform:scaleX(0.9615);">148.5 mm</div>
<div style="left:250px;top:65px;width:109px;height:25px;background:#454545;border:1px solid #6a6a6a;box-sizing:border-box;border-radius:3px;"></div>
<div style="left:271px;top:66px;width:1px;height:23px;background:#6a6a6a;"></div>
<svg style="left:250px;top:65px;" width="21" height="25" viewBox="0 0 21 25"><path d="M5.8 8.9 L10.5 4.4 L15.2 8.9 M5.8 16.4 L10.5 20.9 L15.2 16.4" fill="none" stroke="#c8c8c8" stroke-width="1.2"/></svg>
<div style="top:70.00px;font-size:13.1px;line-height:15px;height:15px;color:#e4e4e4;white-space:nowrap;left:277.30px;transform-origin:0 50%;transform:scaleX(0.9616);">170 mm</div>
<div style="left:250px;top:98px;width:109px;height:25px;background:#454545;border:1px solid #6a6a6a;box-sizing:border-box;border-radius:3px;"></div>
<div style="left:271px;top:99px;width:1px;height:23px;background:#6a6a6a;"></div>
<svg style="left:250px;top:98px;" width="21" height="25" viewBox="0 0 21 25"><path d="M5.8 8.9 L10.5 4.4 L15.2 8.9 M5.8 16.4 L10.5 20.9 L15.2 16.4" fill="none" stroke="#c8c8c8" stroke-width="1.2"/></svg>
<div style="top:103.00px;font-size:13.1px;line-height:15px;height:15px;color:#e4e4e4;white-space:nowrap;left:277.30px;transform-origin:0 50%;transform:scaleX(0.9616);">257 mm</div>
<svg style="left:369px;top:80px;" width="22" height="24" viewBox="0 0 22 24"><g transform="rotate(35 11 12)" fill="none" stroke="#c4c4c4" stroke-width="2"><path d="M8 10 V6.5 a3 3 0 0 1 6 0 V10"/><path d="M8 14 V17.5 a3 3 0 0 0 6 0 V14"/></g><path d="M4 3.5 L18 20.5" stroke="#c4c4c4" stroke-width="1.7"/></svg>
<div style="left:401px;top:65px;width:1px;height:58px;background:#4c4c4c;"></div>
<svg style="left:410px;top:68px;" width="20" height="19" viewBox="0 0 20 19"><path d="M1 1 H17 M1 1 V17 H4" fill="none" stroke="#c8c8c8" stroke-width="1.6"/><path d="M18.5 3 V17 M6 17.5 H18.5" stroke="#c8c8c8" stroke-width="1.2" stroke-dasharray="1.2 1.2"/><path d="M3.5 9.2 H11 V6 L16.5 9.8 L11 13.6 V10.8 H3.5 Z" fill="#c8c8c8"/></svg>
<svg style="left:410px;top:101px;" width="20" height="19" viewBox="0 0 20 19"><path d="M1 1 H17 M1 1 V17 H4" fill="none" stroke="#c8c8c8" stroke-width="1.6"/><path d="M18.5 3 V17 M6 17.5 H18.5" stroke="#c8c8c8" stroke-width="1.2" stroke-dasharray="1.2 1.2"/><path d="M8.7 3.5 V10 H5.8 L9.6 15.5 L13.4 10 H10.5 V3.5 Z" fill="#c8c8c8"/></svg>
<div style="left:436px;top:65px;width:107px;height:25px;background:#454545;border:1px solid #6a6a6a;box-sizing:border-box;border-radius:3px;"></div>
<div style="left:457px;top:66px;width:1px;height:23px;background:#6a6a6a;"></div>
<svg style="left:436px;top:65px;" width="21" height="25" viewBox="0 0 21 25"><path d="M5.8 8.9 L10.5 4.4 L15.2 8.9 M5.8 16.4 L10.5 20.9 L15.2 16.4" fill="none" stroke="#c8c8c8" stroke-width="1.2"/></svg>
<div style="left:520px;top:66px;width:1px;height:23px;background:#6a6a6a;"></div>
<svg style="left:520px;top:65px;" width="23" height="25" viewBox="0 0 23 25"><path d="M7.0 10.3 L11.5 14.8 L16.0 10.3" fill="none" stroke="#d0d0d0" stroke-width="1.3"/></svg>
<div style="top:70.00px;font-size:13.1px;line-height:15px;height:15px;color:#e4e4e4;white-space:nowrap;left:461.00px;transform-origin:0 50%;transform:scaleX(0.9402);">100%</div>
<div style="left:436px;top:98px;width:107px;height:25px;background:#454545;border:1px solid #6a6a6a;box-sizing:border-box;border-radius:3px;"></div>
<div style="left:457px;top:99px;width:1px;height:23px;background:#6a6a6a;"></div>
<svg style="left:436px;top:98px;" width="21" height="25" viewBox="0 0 21 25"><path d="M5.8 8.9 L10.5 4.4 L15.2 8.9 M5.8 16.4 L10.5 20.9 L15.2 16.4" fill="none" stroke="#c8c8c8" stroke-width="1.2"/></svg>
<div style="left:520px;top:99px;width:1px;height:23px;background:#6a6a6a;"></div>
<svg style="left:520px;top:98px;" width="23" height="25" viewBox="0 0 23 25"><path d="M7.0 10.3 L11.5 14.8 L16.0 10.3" fill="none" stroke="#d0d0d0" stroke-width="1.3"/></svg>
<div style="top:103.00px;font-size:13.1px;line-height:15px;height:15px;color:#e4e4e4;white-space:nowrap;left:461.00px;transform-origin:0 50%;transform:scaleX(0.9402);">100%</div>
<div style="left:551px;top:79px;width:28px;height:28px;background:#2e2e2e;border-radius:3px;"></div>
<svg style="left:558px;top:83px;" width="14" height="20" viewBox="0 0 14 20"><g fill="none" stroke="#d8d8d8" stroke-width="2"><path d="M4 8 V5.5 a3 3 0 0 1 6 0 V9.5"/><path d="M4 10.5 V14.5 a3 3 0 0 0 6 0 V12"/></g></svg>
<svg style="left:590px;top:70px;" width="18" height="14" viewBox="0 0 18 14"><path d="M1.5 12.5 H16 M1.5 12.5 L11.5 2" fill="none" stroke="#c8c8c8" stroke-width="1.6"/><path d="M8.5 12.5 A8 8 0 0 0 6.5 7" fill="none" stroke="#c8c8c8" stroke-width="1.2"/></svg>
<svg style="left:590px;top:103px;" width="18" height="14" viewBox="0 0 18 14"><path d="M5.5 1.5 H16.5 L12 12.5 H1 Z" fill="#c8c8c8"/></svg>
<div style="left:613px;top:65px;width:107px;height:25px;background:#454545;border:1px solid #6a6a6a;box-sizing:border-box;border-radius:3px;"></div>
<div style="left:634px;top:66px;width:1px;height:23px;background:#6a6a6a;"></div>
<svg style="left:613px;top:65px;" width="21" height="25" viewBox="0 0 21 25"><path d="M5.8 8.9 L10.5 4.4 L15.2 8.9 M5.8 16.4 L10.5 20.9 L15.2 16.4" fill="none" stroke="#c8c8c8" stroke-width="1.2"/></svg>
<div style="left:697px;top:66px;width:1px;height:23px;background:#6a6a6a;"></div>
<svg style="left:697px;top:65px;" width="23" height="25" viewBox="0 0 23 25"><path d="M7.0 10.3 L11.5 14.8 L16.0 10.3" fill="none" stroke="#d0d0d0" stroke-width="1.3"/></svg>
<div style="top:70.00px;font-size:13.1px;line-height:15px;height:15px;color:#e4e4e4;white-space:nowrap;left:639.10px;transform-origin:0 50%;transform:scaleX(0.9583);">0°</div>
<div style="left:613px;top:98px;width:107px;height:25px;background:#454545;border:1px solid #6a6a6a;box-sizing:border-box;border-radius:3px;"></div>
<div style="left:634px;top:99px;width:1px;height:23px;background:#6a6a6a;"></div>
<svg style="left:613px;top:98px;" width="21" height="25" viewBox="0 0 21 25"><path d="M5.8 8.9 L10.5 4.4 L15.2 8.9 M5.8 16.4 L10.5 20.9 L15.2 16.4" fill="none" stroke="#c8c8c8" stroke-width="1.2"/></svg>
<div style="left:697px;top:99px;width:1px;height:23px;background:#6a6a6a;"></div>
<svg style="left:697px;top:98px;" width="23" height="25" viewBox="0 0 23 25"><path d="M7.0 10.3 L11.5 14.8 L16.0 10.3" fill="none" stroke="#d0d0d0" stroke-width="1.3"/></svg>
<div style="top:103.00px;font-size:13.1px;line-height:15px;height:15px;color:#e4e4e4;white-space:nowrap;left:639.10px;transform-origin:0 50%;transform:scaleX(0.9583);">0°</div>
<div style="left:727px;top:65px;width:1px;height:58px;background:#4c4c4c;"></div>
<svg style="left:737px;top:65px;" width="25" height="24" viewBox="0 0 25 24"><path d="M3.5 13.5 A9 9 0 0 1 18.5 6.8" fill="none" stroke="#c8c8c8" stroke-width="1.8"/><path d="M14.2 3.2 L23.2 2.6 L21.6 11.4 Z" fill="#c8c8c8"/><path d="M3.5 13.5 A9 9 0 0 0 21.5 13.5" fill="none" stroke="#a8a8a8" stroke-width="1.4" stroke-dasharray="1.3 2.1"/></svg>
<svg style="left:771px;top:65px;" width="25" height="24" viewBox="0 0 25 24"><g transform="translate(25,0) scale(-1,1)"><path d="M3.5 13.5 A9 9 0 0 1 18.5 6.8" fill="none" stroke="#c8c8c8" stroke-width="1.8"/><path d="M14.2 3.2 L23.2 2.6 L21.6 11.4 Z" fill="#c8c8c8"/><path d="M3.5 13.5 A9 9 0 0 0 21.5 13.5" fill="none" stroke="#a8a8a8" stroke-width="1.4" stroke-dasharray="1.3 2.1"/></g></svg>
<svg style="left:737px;top:100px;" width="25" height="20" viewBox="0 0 25 20"><path d="M2 3.5 V16.5 L9 10 Z" fill="none" stroke="#c8c8c8" stroke-width="1.4"/><path d="M23 3 V17 L15 10 Z" fill="#c8c8c8"/><path d="M12 0 V20" stroke="#b0b0b0" stroke-width="1.1" stroke-dasharray="1.2 1.6"/></svg>
<svg style="left:771px;top:98px;" width="24" height="24" viewBox="0 0 24 24"><path d="M5 2 H19 L12 9 Z" fill="none" stroke="#c8c8c8" stroke-width="1.4"/><path d="M4.5 21.5 H19.5 L12 14 Z" fill="#c8c8c8"/><path d="M2 11.7 H22" stroke="#b0b0b0" stroke-width="1.1" stroke-dasharray="1.2 1.6"/></svg>
<svg style="left:807px;top:76px;" width="34" height="34" viewBox="0 0 34 34"><path d="M1 6 V1 H6 M28 1 H33 V6 M1 28 V33 H6 M28 33 H33 V28" fill="none" stroke="#e8e8e8" stroke-width="1.6"/></svg>
<div style="top:77.00px;font-size:28.5px;line-height:31px;height:31px;color:#f0f0f0;white-space:nowrap;font-family:'Liberation Serif',serif;left:817.50px;transform-origin:0 50%;transform:scaleX(0.8834);">P</div>
<div style="left:849.5px;top:65px;width:1px;height:58px;background:#4c4c4c;"></div>
<svg style="left:861px;top:66px;" width="20" height="22" viewBox="0 0 20 22"><g transform="translate(1.5,6)" fill="none" stroke="#808080" stroke-width="1.2"><rect x="6.5" y="0.5" width="4" height="5"/><path d="M8.5 5.5 V9 M2 12 V9 H15 V12 M8.5 9 V12"/><rect x="0.5" y="12" width="3.5" height="3.5"/><rect x="6.8" y="12" width="3.5" height="3.5"/><rect x="13" y="12" width="3.5" height="3.5"/></g><path d="M5.5 5 H14.5 L10 0.5 Z" fill="#808080"/></svg>
<svg style="left:861px;top:99px;" width="20" height="22" viewBox="0 0 20 22"><g transform="translate(1.5,1)" fill="none" stroke="#808080" stroke-width="1.2"><rect x="6.5" y="0.5" width="4" height="5"/><path d="M8.5 5.5 V9 M2 12 V9 H15 V12 M8.5 9 V12"/><rect x="0.5" y="12" width="3.5" height="3.5"/><rect x="6.8" y="12" width="3.5" height="3.5"/><rect x="13" y="12" width="3.5" height="3.5"/></g><path d="M5.5 17.5 H14.5 L10 22 Z" fill="#808080"/></svg>
<svg style="left:892px;top:68px;" width="26" height="18" viewBox="0 0 26 18"><g transform="translate(7.5,1.5)" fill="none" stroke="#808080" stroke-width="1.2"><rect x="6.5" y="0.5" width="4" height="5"/><path d="M8.5 5.5 V9 M2 12 V9 H15 V12 M8.5 9 V12"/><rect x="0.5" y="12" width="3.5" height="3.5"/><rect x="6.8" y="12" width="3.5" height="3.5"/><rect x="13" y="12" width="3.5" height="3.5"/></g><path d="M6 4.5 V13.5 L1 9 Z" fill="#808080"/></svg>
<svg style="left:892px;top:101px;" width="26" height="18" viewBox="0 0 26 18"><g transform="translate(1.5,1.5)" fill="none" stroke="#808080" stroke-width="1.2"><rect x="6.5" y="0.5" width="4" height="5"/><path d="M8.5 5.5 V9 M2 12 V9 H15 V12 M8.5 9 V12"/><rect x="0.5" y="12" width="3.5" height="3.5"/><rect x="6.8" y="12" width="3.5" height="3.5"/><rect x="13" y="12" width="3.5" height="3.5"/></g><path d="M20 4.5 V13.5 L25 9 Z" fill="#808080"/></svg>
<div style="left:927px;top:65px;width:1px;height:58px;background:#4c4c4c;"></div>
<svg style="left:934.5px;top:65px;" width="25" height="25" viewBox="0 0 25 25"><rect width="25" height="25" fill="#fff"/><path d="M1 24 L24 1" stroke="#5a0a0e" stroke-width="2"/></svg>
<svg style="left:934.5px;top:98px;" width="25" height="25" viewBox="0 0 25 25"><rect width="25" height="25" fill="#fff"/><rect x="6" y="6" width="13" height="13" fill="#666"/><path d="M1 24 L24 1" stroke="#5a0a0e" stroke-width="2.4"/></svg>
<div style="left:964px;top:65px;width:21px;height:25px;background:#454545;border:1px solid #6a6a6a;box-sizing:border-box;border-radius:3px;"></div>
<svg style="left:964px;top:65px;" width="21" height="25" viewBox="0 0 21 25"><path d="M8.5 8.5 L12.7 12.5 L8.5 16.5" fill="none" stroke="#d0d0d0" stroke-width="1.3"/></svg>
<div style="left:964px;top:98px;width:21px;height:25px;background:#454545;border:1px solid #6a6a6a;box-sizing:border-box;border-radius:3px;"></div>
<svg style="left:964px;top:98px;" width="21" height="25" viewBox="0 0 21 25"><path d="M8.5 8.5 L12.7 12.5 L8.5 16.5" fill="none" stroke="#d0d0d0" stroke-width="1.3"/></svg>
<div style="left:992px;top:65px;width:1px;height:58px;background:#4c4c4c;"></div>
<div style="left:999px;top:65px;width:108px;height:25px;background:#454545;border:1px solid #6a6a6a;box-sizing:border-box;border-radius:3px;"></div>
<div style="left:1020px;top:66px;width:1px;height:23px;background:#6a6a6a;"></div>
<svg style="left:999px;top:65px;" width="21" height="25" viewBox="0 0 21 25"><path d="M5.8 8.9 L10.5 4.4 L15.2 8.9 M5.8 16.4 L10.5 20.9 L15.2 16.4" fill="none" stroke="#c8c8c8" stroke-width="1.2"/></svg>
<div style="left:1084px;top:66px;width:1px;height:23px;background:#6a6a6a;"></div>
<svg style="left:1084px;top:65px;" width="23" height="25" viewBox="0 0 23 25"><path d="M7.0 10.3 L11.5 14.8 L16.0 10.3" fill="none" stroke="#d0d0d0" stroke-width="1.3"/></svg>
<div style="left:999px;top:98px;width:108px;height:25px;background:#454545;border:1px solid #6a6a6a;box-sizing:border-box;border-radius:3px;"></div>
<div style="left:999px;top:98px;width:85.5px;height:25px;background:#e2e2e2;"></div>
<div style="left:1005px;top:105px;width:75px;height:9.5px;background:#000;"></div>
<svg style="left:1084px;top:98px;" width="23" height="25" viewBox="0 0 23 25"><path d="M7.0 10.3 L11.5 14.8 L16.0 10.3" fill="none" stroke="#d0d0d0" stroke-width="1.3"/></svg>
<div style="left:1114px;top:65px;width:1px;height:58px;background:#4c4c4c;"></div>
<svg style="left:1124px;top:67px;" width="20" height="18" viewBox="0 0 20 18"><path d="M5.5 1.5 H11.5 M15.5 5.5 V11.5 M11.5 15.5 H5.5 M1.5 11.5 V5.5" fill="none" stroke="#c8c8c8" stroke-width="1.9"/><path d="M1.5 5.5 V3.5 Q1.5 1.5 3.5 1.5 H5.5 M11.5 1.5 H13.5 Q15.5 1.5 15.5 3.5 V5.5 M15.5 11.5 V13.5 Q15.5 15.5 13.5 15.5 H11.5 M5.5 15.5 H3.5 Q1.5 15.5 1.5 13.5 V11.5" fill="none" stroke="#c8c8c8" stroke-width="1.9" stroke-dasharray="1.6 1.2"/><path d="M16.5 14.5 H20 L18.2 17 Z" fill="#c8c8c8"/></svg>
<svg style="left:1162px;top:68px;" width="20" height="20" viewBox="0 0 20 20"><rect x="2" y="13" width="15.5" height="5.5" fill="#6a6a6a"/><rect x="3" y="2" width="13" height="12.5" fill="#535353" stroke="#c8c8c8" stroke-width="1.8"/></svg>
<div style="top:69.00px;font-size:17px;line-height:19px;height:19px;color:#c8c8c8;white-space:nowrap;font-style:italic;left:1201.00px;transform-origin:0 50%;transform:scaleX(1.0210);">fx</div>
<svg style="left:1214px;top:79px;" width="6" height="6" viewBox="0 0 6 6"><path d="M0.5 1.5 H5.5 L3 4.5 Z" fill="#c8c8c8"/></svg>
<svg style="left:1124px;top:102.5px;" width="15" height="15" viewBox="0 0 15 15"><rect x="0.8" y="0.8" width="13.4" height="13.4" fill="#606060" stroke="#b8b8b8" stroke-width="1.3"/><g fill="#a8a8a8"><rect x="2" y="2" width="3.6" height="3.6"/><rect x="9.2" y="2" width="3.6" height="3.6"/><rect x="5.6" y="5.6" width="3.6" height="3.6"/><rect x="2" y="9.2" width="3.6" height="3.6"/><rect x="9.2" y="9.2" width="3.6" height="3.6"/></g></svg>
<div style="left:1148px;top:98px;width:87px;height:25px;background:#454545;border:1px solid #6a6a6a;box-sizing:border-box;border-radius:3px;"></div>
<div style="left:1212px;top:99px;width:1px;height:23px;background:#6a6a6a;"></div>
<svg style="left:1213px;top:98px;" width="21" height="25" viewBox="0 0 21 25"><path d="M8.5 8.5 L12.7 12.5 L8.5 16.5" fill="none" stroke="#d0d0d0" stroke-width="1.3"/></svg>
<div style="top:103.00px;font-size:13.1px;line-height:15px;height:15px;color:#e4e4e4;white-space:nowrap;left:1153.00px;transform-origin:0 50%;transform:scaleX(0.9402);">100%</div>
<div style="left:1242px;top:65px;width:1px;height:58px;background:#4c4c4c;"></div>
<div style="left:1250px;top:63px;width:28px;height:28px;background:#2f2f2f;border-radius:3px;"></div>
<svg style="left:1254px;top:67px;" width="20" height="18" viewBox="0 0 20 18"><rect x="1" y="1.0" width="18" height="1.3" fill="#d8d8d8"/><rect x="1" y="4.1" width="18" height="1.3" fill="#d8d8d8"/><rect x="1" y="7.2" width="18" height="1.3" fill="#d8d8d8"/><rect x="1" y="10.3" width="18" height="1.3" fill="#d8d8d8"/><rect x="1" y="13.4" width="18" height="1.3" fill="#d8d8d8"/><rect x="1" y="16.5" width="18" height="1.3" fill="#d8d8d8"/><ellipse cx="10" cy="9" rx="5" ry="5.5" fill="#2f2f2f"/><rect x="6" y="4.1" width="8" height="1.6" fill="#bbb"/><rect x="6" y="7.199999999999999" width="8" height="1.6" fill="#bbb"/><rect x="6" y="10.3" width="8" height="1.6" fill="#bbb"/><rect x="6" y="13.4" width="8" height="1.6" fill="#bbb"/></svg>
<svg style="left:1288px;top:67px;" width="19" height="18" viewBox="0 0 19 18"><rect x="0.5" y="1" width="18" height="1.3" fill="#d8d8d8"/><rect x="0.5" y="16" width="18" height="1.3" fill="#d8d8d8"/><rect x="0.5" y="4.2" width="3.5" height="1.3" fill="#d8d8d8"/><rect x="0.5" y="7.2" width="3.5" height="1.3" fill="#d8d8d8"/><rect x="0.5" y="10.2" width="3.5" height="1.3" fill="#d8d8d8"/><rect x="0.5" y="13.2" width="3.5" height="1.3" fill="#d8d8d8"/><rect x="15" y="4.2" width="3.5" height="1.3" fill="#d8d8d8"/><rect x="15" y="7.2" width="3.5" height="1.3" fill="#d8d8d8"/><rect x="15" y="10.2" width="3.5" height="1.3" fill="#d8d8d8"/><rect x="15" y="13.2" width="3.5" height="1.3" fill="#d8d8d8"/><rect x="6.5" y="3.5" width="6" height="10.5" fill="none" stroke="#c8c8c8" stroke-width="1.3"/></svg>
<svg style="left:1254px;top:100.5px;" width="19" height="18" viewBox="0 0 19 18"><rect x="0.5" y="0.5" width="18" height="1.3" fill="#c8c8c8"/><rect x="0.5" y="3.8" width="18" height="1.3" fill="#c8c8c8"/><rect x="0.5" y="7.1" width="18" height="1.3" fill="#c8c8c8"/><rect x="0.5" y="10.399999999999999" width="18" height="1.3" fill="#c8c8c8"/><rect x="0.5" y="13.7" width="18" height="1.3" fill="#c8c8c8"/><rect x="0.5" y="17.0" width="18" height="1.3" fill="#c8c8c8"/><ellipse cx="9.5" cy="9" rx="5.2" ry="5.8" fill="#535353"/><ellipse cx="9.5" cy="9" rx="4" ry="4.6" fill="#c8c8c8"/></svg>
<svg style="left:1288px;top:100.5px;" width="19" height="18" viewBox="0 0 19 18"><rect x="0.5" y="0.5" width="18" height="1.3" fill="#c8c8c8"/><rect x="0.5" y="12.0" width="18" height="1.3" fill="#c8c8c8"/><rect x="0.5" y="16.3" width="18" height="1.3" fill="#c8c8c8"/><rect x="5.5" y="4" width="8" height="5" fill="#c8c8c8"/></svg>
<svg style="left:1327px;top:68px;" width="20" height="19" viewBox="0 0 20 19"><rect x="3" y="3" width="14" height="13" fill="none" stroke="#9a9a9a" stroke-width="1.4" stroke-dasharray="3.5 2"/><g fill="#2d8cf0"><rect x="0.5" y="0.5" width="5" height="5"/><rect x="14.5" y="0.5" width="5" height="5"/><rect x="0.5" y="13.5" width="5" height="5"/><rect x="14.5" y="13.5" width="5" height="5"/></g></svg>
<div style="left:1353px;top:65px;width:107px;height:25px;background:#454545;border:1px solid #6a6a6a;box-sizing:border-box;border-radius:3px;"></div>
<div style="left:1374px;top:66px;width:1px;height:23px;background:#6a6a6a;"></div>
<svg style="left:1353px;top:65px;" width="21" height="25" viewBox="0 0 21 25"><path d="M5.8 8.9 L10.5 4.4 L15.2 8.9 M5.8 16.4 L10.5 20.9 L15.2 16.4" fill="none" stroke="#c8c8c8" stroke-width="1.2"/></svg>
<div style="top:70.00px;font-size:13.1px;line-height:15px;height:15px;color:#e4e4e4;white-space:nowrap;left:1380.30px;transform-origin:0 50%;transform:scaleX(0.9701);">4.233 mm</div>
<div style="left:1353px;top:98px;width:107px;height:25px;background:#454545;border:1px solid #6a6a6a;box-sizing:border-box;border-radius:3px;"></div>
<div style="left:1353px;top:98px;width:84.5px;height:25px;background:#e2e2e2;"></div>
<svg style="left:1353px;top:98px;" width="85" height="25" viewBox="0 0 85 25"><path d="M4 3 H79 V21" fill="none" stroke="#111" stroke-width="1.6"/></svg>
<svg style="left:1437.5px;top:98px;" width="23" height="25" viewBox="0 0 23 25"><path d="M7.0 10.3 L11.5 14.8 L16.0 10.3" fill="none" stroke="#d0d0d0" stroke-width="1.3"/></svg>
<div style="left:1467px;top:65px;width:1px;height:58px;background:#4c4c4c;"></div>
<svg style="left:1476px;top:69px;" width="18" height="17" viewBox="0 0 18 17"><rect x="1" y="1.5" width="16" height="14" fill="none" stroke="#c8c8c8" stroke-width="1.6" rx="1"/><path d="M6.3 1.5 V15.5 M11.7 1.5 V15.5" stroke="#c8c8c8" stroke-width="1.4"/></svg>
<svg style="left:1476px;top:102px;" width="18" height="17" viewBox="0 0 18 17"><rect x="1" y="1.5" width="16" height="14" fill="none" stroke="#c8c8c8" stroke-width="1.4" rx="1"/><path d="M7.5 1.5 V15.5 M10.5 1.5 V15.5" stroke="#c8c8c8" stroke-width="1.2"/><path d="M2.5 8.5 H6 M15.5 8.5 H12" stroke="#c8c8c8" stroke-width="1"/></svg>
<div style="left:1501.5px;top:65px;width:108px;height:25px;background:#454545;border:1px solid #6a6a6a;box-sizing:border-box;border-radius:3px;"></div>
<div style="left:1522.5px;top:66px;width:1px;height:23px;background:#6a6a6a;"></div>
<svg style="left:1501.5px;top:65px;" width="21" height="25" viewBox="0 0 21 25"><path d="M5.8 8.9 L10.5 4.4 L15.2 8.9 M5.8 16.4 L10.5 20.9 L15.2 16.4" fill="none" stroke="#c8c8c8" stroke-width="1.2"/></svg>
<div style="top:70.00px;font-size:13.1px;line-height:15px;height:15px;color:#e4e4e4;white-space:nowrap;left:1528.80px;transform-origin:0 50%;transform:scaleX(0.8923);">2</div>
<div style="left:1501.5px;top:98px;width:108px;height:25px;background:#454545;border:1px solid #6a6a6a;box-sizing:border-box;border-radius:3px;"></div>
<div style="left:1522.5px;top:99px;width:1px;height:23px;background:#6a6a6a;"></div>
<svg style="left:1501.5px;top:98px;" width="21" height="25" viewBox="0 0 21 25"><path d="M5.8 8.9 L10.5 4.4 L15.2 8.9 M5.8 16.4 L10.5 20.9 L15.2 16.4" fill="none" stroke="#c8c8c8" stroke-width="1.2"/></svg>
<div style="top:103.00px;font-size:13.1px;line-height:15px;height:15px;color:#e4e4e4;white-space:nowrap;left:1528.80px;transform-origin:0 50%;transform:scaleX(0.9701);">4.233 mm</div>
<svg style="left:1629px;top:69.5px;" width="20" height="15" viewBox="0 0 20 15"><rect x="0.5" y="0.5" width="8" height="1.5" fill="#c8c8c8"/><rect x="0.5" y="4.1" width="8" height="1.5" fill="#c8c8c8"/><rect x="0.5" y="7.7" width="8" height="1.5" fill="#c8c8c8"/><rect x="0.5" y="11.3" width="8" height="1.5" fill="#c8c8c8"/><rect x="11" y="0.5" width="8" height="1.5" fill="#c8c8c8"/><rect x="11" y="4.1" width="8" height="1.5" fill="#c8c8c8"/><rect x="11" y="7.7" width="8" height="1.5" fill="#c8c8c8"/><rect x="11" y="11.3" width="8" height="1.5" fill="#c8c8c8"/></svg>
<div style="left:1625px;top:96.5px;width:28px;height:28px;background:#2f2f2f;border-radius:3px;"></div>
<svg style="left:1629px;top:103px;" width="20" height="15" viewBox="0 0 20 15"><rect x="0.5" y="0.5" width="8" height="1.5" fill="#d8d8d8"/><rect x="0.5" y="4.1" width="8" height="1.5" fill="#d8d8d8"/><rect x="0.5" y="7.7" width="8" height="1.5" fill="#d8d8d8"/><rect x="0.5" y="11.3" width="8" height="1.5" fill="#d8d8d8"/><rect x="11" y="0.5" width="8" height="1.5" fill="#d8d8d8"/><rect x="11" y="4.1" width="8" height="1.5" fill="#d8d8d8"/><rect x="11" y="7.7" width="8" height="1.5" fill="#d8d8d8"/></svg>
<div style="left:1660px;top:65px;width:1px;height:58px;background:#4c4c4c;"></div>
<div style="left:1668.5px;top:63px;width:28px;height:28px;background:#2f2f2f;border-radius:3px;"></div>
<svg style="left:1672px;top:67px;" width="21" height="8" viewBox="0 0 21 8"><rect x="0.5" y="0.8" width="20" height="1.2" fill="#d8d8d8"/><rect x="0.5" y="3.2" width="20" height="1.2" fill="#d8d8d8"/><rect x="0.5" y="5.6" width="20" height="1.2" fill="#d8d8d8"/></svg>
<svg style="left:1706px;top:78px;" width="21" height="9" viewBox="0 0 21 9"><rect x="0.5" y="0.8" width="20" height="1.3" fill="#c8c8c8"/><rect x="0.5" y="3.4000000000000004" width="20" height="1.3" fill="#c8c8c8"/><rect x="0.5" y="6.0" width="20" height="1.3" fill="#c8c8c8"/></svg>
<svg style="left:1672px;top:105.5px;" width="21" height="9" viewBox="0 0 21 9"><rect x="0.5" y="0.8" width="20" height="1.3" fill="#c8c8c8"/><rect x="0.5" y="3.4000000000000004" width="20" height="1.3" fill="#c8c8c8"/><rect x="0.5" y="6.0" width="20" height="1.3" fill="#c8c8c8"/></svg>
<svg style="left:1706px;top:100.5px;" width="21" height="19" viewBox="0 0 21 19"><rect x="0.5" y="0.8" width="20" height="1.5" fill="#c8c8c8"/><rect x="0.5" y="8.3" width="20" height="1.5" fill="#c8c8c8"/><rect x="0.5" y="15.8" width="20" height="1.5" fill="#c8c8c8"/></svg>
<div style="left:1737.5px;top:65px;width:1px;height:58px;background:#4c4c4c;"></div>
<svg style="left:1748px;top:65px;" width="23" height="21" viewBox="0 0 23 21"><rect x="2.5" y="2.5" width="18" height="16" fill="none" stroke="#c8c8c8" stroke-width="1.4"/><rect x="3" y="3" width="8" height="8" fill="#c8c8c8"/><g fill="#535353" stroke="#c8c8c8" stroke-width="1"><circle cx="2.5" cy="2.5" r="1.8"/><circle cx="20.5" cy="2.5" r="1.8"/><circle cx="2.5" cy="18.5" r="1.8"/><circle cx="20.5" cy="18.5" r="1.8"/></g><path d="M18 8.5 H14 M15.5 7 L14 8.5 L15.5 10 M9.5 17 V13 M8 14.5 L9.5 13 L11 14.5" fill="none" stroke="#c8c8c8" stroke-width="1"/></svg>
<div style="left:1782px;top:65px;width:1px;height:58px;background:#4f4f4f;"></div>
<svg style="left:1792px;top:65px;" width="22" height="24" viewBox="0 0 22 24"><rect x="1" y="0" width="1.5" height="23" fill="#c8c8c8"/><rect x="4.5" y="3" width="10" height="6.5" fill="#c8c8c8"/><rect x="4.5" y="13" width="16" height="6.5" fill="#c8c8c8"/></svg>
<svg style="left:1827px;top:65px;" width="20" height="24" viewBox="0 0 20 24"><rect x="9" y="0" width="1.5" height="23" fill="#c8c8c8"/><rect x="4" y="3" width="11.5" height="6.5" fill="#c8c8c8"/><rect x="1" y="13" width="17.5" height="6.5" fill="#c8c8c8"/></svg>
<svg style="left:1861px;top:65px;" width="22" height="24" viewBox="0 0 22 24"><rect x="19.5" y="0" width="1.5" height="23" fill="#c8c8c8"/><rect x="7" y="3" width="10" height="6.5" fill="#c8c8c8"/><rect x="1" y="13" width="16" height="6.5" fill="#c8c8c8"/></svg>
<svg style="left:1894px;top:65px;" width="29" height="24" viewBox="0 0 29 24"><rect x="1" y="0" width="1.5" height="23" fill="#c8c8c8"/><path d="M5 3.5 H13 L17 7.5 V19.5 H5 Z" fill="none" stroke="#c8c8c8" stroke-width="1.4"/><rect x="7.5" y="8.5" width="4.5" height="3" fill="#c8c8c8"/><rect x="7.5" y="13.5" width="7" height="3" fill="#c8c8c8"/><path d="M20 16 H26 L23 19.5 Z" fill="#c8c8c8"/></svg>
<svg style="left:1791px;top:99px;" width="25" height="22" viewBox="0 0 25 22"><rect x="0.5" y="0.5" width="23" height="1.5" fill="#c8c8c8"/><rect x="4.5" y="4" width="6" height="16" fill="#c8c8c8"/><rect x="14" y="4" width="6" height="9.5" fill="#c8c8c8"/></svg>
<svg style="left:1826px;top:99px;" width="24" height="22" viewBox="0 0 24 22"><rect x="0" y="9.5" width="22.5" height="1.5" fill="#c8c8c8"/><rect x="3.5" y="2.5" width="6" height="16" fill="#c8c8c8"/><rect x="13" y="5" width="6" height="10.5" fill="#c8c8c8"/></svg>
<svg style="left:1859px;top:99px;" width="25" height="23" viewBox="0 0 25 23"><rect x="0.5" y="20.5" width="23" height="1.5" fill="#c8c8c8"/><rect x="4.5" y="2.5" width="6" height="16.5" fill="#c8c8c8"/><rect x="14" y="9" width="6" height="10" fill="#c8c8c8"/></svg>
<div style="left:1933px;top:65px;width:1px;height:58px;background:#4f4f4f;"></div>
<svg style="left:1949px;top:68px;" width="24" height="16" viewBox="0 0 24 16"><rect x="3" y="3" width="13" height="9" fill="none" stroke="#c8c8c8" stroke-width="1.2" stroke-dasharray="2 1.5"/><g fill="#535353" stroke="#c8c8c8" stroke-width="1"><rect x="1" y="1" width="3.5" height="3.5"/><rect x="7.7" y="1" width="3.5" height="3.5"/><rect x="14.5" y="1" width="3.5" height="3.5"/><rect x="1" y="10.5" width="3.5" height="3.5"/><rect x="7.7" y="10.5" width="3.5" height="3.5"/><rect x="14.5" y="10.5" width="3.5" height="3.5"/><rect x="1" y="5.8" width="3.5" height="3.5"/><rect x="14.5" y="5.8" width="3.5" height="3.5"/></g><path d="M19 12.5 H23 L21 15 Z" fill="#c8c8c8"/></svg>
<div style="left:1985px;top:65px;width:227px;height:25px;background:#454545;border:1px solid #6a6a6a;box-sizing:border-box;border-radius:3px;"></div>
<div style="left:1985px;top:65px;width:204px;height:25px;background:#e4e4e4;"></div>
<svg style="left:2189px;top:65px;" width="22" height="25" viewBox="0 0 22 25"><path d="M6.5 10.3 L11.0 14.8 L15.5 10.3" fill="none" stroke="#d0d0d0" stroke-width="1.3"/></svg>
<div style="top:70.00px;font-size:13.4px;line-height:15px;height:15px;color:#222;white-space:nowrap;left:1995.00px;transform-origin:0 50%;transform:scaleX(0.9618);">[Basic Text Frame]+</div>
<svg style="left:2148px;top:102px;" width="27" height="17" viewBox="0 0 27 17"><rect x="6" y="5.5" width="9" height="9" fill="#111" stroke="#ddd" stroke-width="1"/><rect x="1.5" y="1.5" width="9" height="9" fill="#fff" stroke="#111" stroke-width="1.4"/><path d="M17 8 H22 A3 3 0 0 1 22 14 H19 M19 5.5 L16.5 8 L19 10.5" fill="none" stroke="#c8c8c8" stroke-width="1.2"/></svg>
<svg style="left:2186px;top:103px;" width="23" height="14" viewBox="0 0 23 14"><rect x="1" y="1.5" width="10" height="10" fill="none" stroke="#c8c8c8" stroke-width="1.4" stroke-dasharray="3 1.5"/><path d="M14 10 L20 3 M15 4 L20 9 M17 2.5 V10.5" stroke="#9a9a9a" stroke-width="1.1"/></svg>
<svg style="left:2509px;top:81px;" width="14" height="22" viewBox="0 0 14 22"><path d="M8.5 0.5 L1 12.5 L6.5 11 L4 21.5 L12.5 7.5 L7 9 Z" fill="#d0d0d0"/></svg>
<div style="left:2534.5px;top:65px;width:1px;height:58px;background:#4a4a4a;"></div>
<svg style="left:2546.5px;top:69.5px;" width="15" height="15" viewBox="0 0 15 15"><g transform="scale(0.9)"><circle cx="7.5" cy="7.5" r="3.6" fill="none" stroke="#d0d0d0" stroke-width="2.6"/><g stroke="#d0d0d0" stroke-width="2.4"><path d="M7.5 0.3 V3 M7.5 12 V14.7 M0.3 7.5 H3 M12 7.5 H14.7 M2.4 2.4 L4.3 4.3 M10.7 10.7 L12.6 12.6 M2.4 12.6 L4.3 10.7 M10.7 4.3 L12.6 2.4"/></g></g></svg>
<svg style="left:2546px;top:104.5px;" width="16" height="11" viewBox="0 0 16 11"><path d="M0 1.2 H15.5 M0 5.2 H15.5 M0 9.2 H15.5" stroke="#d8d8d8" stroke-width="1.4"/></svg>
<div style="left:304px;top:132px;width:176px;height:35px;background:#535353;"></div>
<div style="left:303px;top:132px;width:1px;height:35px;background:#3a3a3a;"></div>
<div style="top:143.00px;font-size:13.6px;line-height:15px;height:15px;color:#b4b4b4;white-space:nowrap;font-weight:bold;left:106.50px;transform-origin:0 50%;transform:scaleX(1.0439);">אלבום בית.indd @ 200%</div>
<svg style="left:273px;top:144px;" width="10" height="10" viewBox="0 0 10 10"><path d="M1.5 1.5 L8.5 8.5 M8.5 1.5 L1.5 8.5" stroke="#c0c0c0" stroke-width="1.5"/></svg>
<div style="top:143.00px;font-size:13.6px;line-height:15px;height:15px;color:#ededed;white-space:nowrap;font-weight:bold;left:322.00px;transform-origin:0 50%;transform:scaleX(1.0169);">*Untitled-1 @ 83%</div>
<svg style="left:450.5px;top:143.5px;" width="10" height="10" viewBox="0 0 10 10"><path d="M1.5 1.5 L8.5 8.5 M8.5 1.5 L1.5 8.5" stroke="#e8e8e8" stroke-width="1.6"/></svg>
<div style="left:11px;top:131px;width:90px;height:560.5px;background:#535353;border-radius:5px 5px 0 0;"></div>
<div style="left:11px;top:131px;width:90px;height:17px;background:#424242;border-radius:5px 5px 0 0;"></div>
<div style="left:100px;top:133px;width:1px;height:557px;background:#3e3e3e;"></div>
<div style="left:11px;top:690.5px;width:90px;height:1px;background:#3a3a3a;"></div>
<svg style="left:62.5px;top:137px;" width="12" height="8" viewBox="0 0 12 8"><path d="M4.5 1 L1.5 4 L4.5 7 M9.5 1 L6.5 4 L9.5 7" fill="none" stroke="#d0d0d0" stroke-width="1.3"/></svg>
<svg style="left:84.5px;top:136.5px;" width="9" height="9" viewBox="0 0 9 9"><path d="M1 1 L8 8 M8 1 L1 8" stroke="#d8d8d8" stroke-width="1.6"/></svg>
<svg style="left:40.5px;top:152.5px;" width="30" height="5" viewBox="0 0 30 5"><rect x="0.8" y="0" width="1.2" height="5" fill="#474747"/><rect x="3.8" y="0" width="1.2" height="5" fill="#474747"/><rect x="6.8" y="0" width="1.2" height="5" fill="#474747"/><rect x="9.8" y="0" width="1.2" height="5" fill="#474747"/><rect x="12.8" y="0" width="1.2" height="5" fill="#474747"/><rect x="15.8" y="0" width="1.2" height="5" fill="#474747"/><rect x="18.8" y="0" width="1.2" height="5" fill="#474747"/><rect x="21.8" y="0" width="1.2" height="5" fill="#474747"/><rect x="24.8" y="0" width="1.2" height="5" fill="#474747"/><rect x="27.8" y="0" width="1.2" height="5" fill="#474747"/></svg>
<div style="left:15px;top:257.5px;width:83px;height:1px;background:#494949;"></div>
<div style="left:15px;top:350.5px;width:83px;height:1px;background:#494949;"></div>
<div style="left:15px;top:414.5px;width:83px;height:1px;background:#494949;"></div>
<div style="left:15px;top:479px;width:83px;height:1px;background:#494949;"></div>
<div style="left:15px;top:652.5px;width:83px;height:1px;background:#494949;"></div>
<div style="left:20px;top:167.3px;width:35px;height:27.2px;background:#2f2f2f;border-radius:3px;"></div>
<div style="left:20.5px;top:657.5px;width:34.5px;height:27px;background:#2f2f2f;border-radius:3px;"></div>
<svg style="left:28.5px;top:171.0px;" width="18" height="22" viewBox="0 0 18 22"><path d="M2.5 1.8 V19 L7.6 14.2 H15 Z" fill="none" stroke="#c4c4c4" stroke-width="1.5" stroke-linejoin="miter"/></svg>
<svg style="left:67.0px;top:171.0px;" width="18" height="22" viewBox="0 0 18 22"><path d="M2 1 V20 L8 14.3 H16 Z" fill="#cfcfcf"/></svg>
<svg style="left:28.5px;top:200.0px;" width="18" height="20" viewBox="0 0 18 20"><path d="M2 1.5 H10 L14.5 6 V9 M8 17.5 H2 V1.5 M10 1.5 V6 H14.5" fill="none" stroke="#cfcfcf" stroke-width="1.5"/><path d="M10 9.5 V18.5 L12.5 16 H16.5 Z" fill="#cfcfcf"/></svg>
<svg style="left:64.5px;top:202.0px;" width="22" height="16" viewBox="0 0 22 16"><path d="M1.2 0.5 V15.5 M20.8 0.5 V15.5" stroke="#cfcfcf" stroke-width="1.6"/><path d="M4 8 H18 M7.5 4.5 L4 8 L7.5 11.5 M14.5 4.5 L18 8 L14.5 11.5" fill="none" stroke="#cfcfcf" stroke-width="1.4"/></svg>
<svg style="left:28.5px;top:232.0px;" width="18" height="20" viewBox="0 0 18 20"><path d="M1.5 7.5 V18.5 H16.5 V7.5" fill="none" stroke="#cfcfcf" stroke-width="1.6"/><path d="M4 12 H14 M4 15.5 H14" stroke="#cfcfcf" stroke-width="1.6" stroke-dasharray="1.6 1.6"/><path d="M5 1 L10 6 M10 6 V2 M10 6 H6" stroke="#cfcfcf" stroke-width="1.8" fill="none"/></svg>
<svg style="left:66.5px;top:232.0px;" width="18" height="20" viewBox="0 0 18 20"><path d="M1.5 7.5 V18.5 H16.5 V7.5" fill="none" stroke="#cfcfcf" stroke-width="1.6"/><path d="M4 12 H14 M4 15.5 H14" stroke="#cfcfcf" stroke-width="1.6" stroke-dasharray="1.6 1.6"/><path d="M8 7 L13.5 1.5 M13.5 1.5 V5.5 M13.5 1.5 H9.5" stroke="#cfcfcf" stroke-width="1.8" fill="none"/></svg>
<svg style="left:26px;top:264px;" width="30" height="24" viewBox="0 0 30 24"><path d="M5 2 H19 V5.5 H17.5 L17 3.8 H13.2 V13.5 L15 14 V15 H9 V14 L10.8 13.5 V3.8 H7 L6.5 5.5 H5 Z" fill="#cfcfcf"/><path d="M3 19 H19 M5.5 16.5 L3 19 L5.5 21.5" fill="none" stroke="#cfcfcf" stroke-width="1.4"/><path d="M27 22 V18.5 L23.5 22 Z" fill="#cfcfcf"/></svg>
<svg style="left:64.5px;top:264.0px;" width="22" height="22" viewBox="0 0 22 22"><path d="M2 20 L20 2" stroke="#cfcfcf" stroke-width="1.6"/></svg>
<svg style="left:26px;top:294px;" width="30" height="24" viewBox="0 0 30 24"><path d="M3 20 L5.5 11 L13 4.5 L19 10.5 L12.5 18 Z" fill="#cfcfcf"/><path d="M3.5 19.5 L10 13" stroke="#535353" stroke-width="1.3"/><circle cx="10.8" cy="12.2" r="1.6" fill="#535353"/><path d="M14.5 3 L20.5 9" stroke="#cfcfcf" stroke-width="2.6"/><path d="M27 23 V19.5 L23.5 23 Z" fill="#cfcfcf"/></svg>
<svg style="left:64px;top:294px;" width="30" height="24" viewBox="0 0 30 24"><path d="M2 21 L3.5 15 L15 3.5 L19.5 8 L8 19.5 Z" fill="#cfcfcf"/><path d="M13 5.5 L17.5 10" stroke="#535353" stroke-width="1.2"/><path d="M2 21 L2.8 18 L5 20.2 Z" fill="#535353"/><path d="M27 23 V19.5 L23.5 23 Z" fill="#cfcfcf"/></svg>
<svg style="left:26px;top:324px;" width="30" height="24" viewBox="0 0 30 24"><rect x="2.5" y="2.5" width="18" height="16" fill="none" stroke="#cfcfcf" stroke-width="1.5"/><path d="M2.5 2.5 L20.5 18.5 M20.5 2.5 L2.5 18.5" stroke="#cfcfcf" stroke-width="1.3"/><path d="M27 23 V19.5 L23.5 23 Z" fill="#cfcfcf"/></svg>
<svg style="left:64px;top:324px;" width="30" height="24" viewBox="0 0 30 24"><rect x="2.5" y="2.5" width="19" height="16" fill="#747474" stroke="#cfcfcf" stroke-width="1.5"/><path d="M27 23 V19.5 L23.5 23 Z" fill="#cfcfcf"/></svg>
<svg style="left:27.0px;top:359.0px;" width="22" height="20" viewBox="0 0 22 20"><path d="M1.5 2.5 L15 13.5 M1.5 17 L15 6" stroke="#cfcfcf" stroke-width="1.7"/><circle cx="17.5" cy="4.5" r="2.8" fill="none" stroke="#cfcfcf" stroke-width="1.5"/><circle cx="17.5" cy="15.5" r="2.8" fill="none" stroke="#cfcfcf" stroke-width="1.5"/></svg>
<svg style="left:64px;top:357px;" width="30" height="24" viewBox="0 0 30 24"><path d="M5 8 A8.5 8.5 0 0 1 21 11" fill="none" stroke="#cfcfcf" stroke-width="1.7"/><path d="M1.5 5.5 L3.5 13 L10 9 Z" fill="#cfcfcf"/><path d="M21 11 A8.5 8.5 0 0 1 4.5 13" fill="none" stroke="#aaa" stroke-width="1.2" stroke-dasharray="1.2 2"/><path d="M27 23 V19.5 L23.5 23 Z" fill="#cfcfcf"/></svg>
<svg style="left:27.5px;top:390px;" width="21" height="17" viewBox="0 0 21 17"><defs><linearGradient id="g1"><stop offset="0" stop-color="#3a3a3a"/><stop offset="1" stop-color="#e4e4e4"/></linearGradient></defs><rect x="0.7" y="0.7" width="19.6" height="15.6" fill="url(#g1)" stroke="#cfcfcf" stroke-width="1.4"/></svg>
<svg style="left:65.5px;top:390px;" width="21" height="17" viewBox="0 0 21 17"><rect x="0.7" y="0.7" width="19.6" height="15.6" fill="#666" stroke="#cfcfcf" stroke-width="1.4"/><rect x="1.5" y="1.5" width="3.6" height="3.5" fill="#9a9a9a"/><rect x="5.1" y="1.5" width="3.6" height="3.5" fill="#6a6a6a"/><rect x="8.7" y="1.5" width="3.6" height="3.5" fill="#9a9a9a"/><rect x="12.3" y="1.5" width="3.6" height="3.5" fill="#6a6a6a"/><rect x="15.9" y="1.5" width="3.6" height="3.5" fill="#9a9a9a"/><rect x="1.5" y="5.0" width="3.6" height="3.5" fill="#6a6a6a"/><rect x="5.1" y="5.0" width="3.6" height="3.5" fill="#9a9a9a"/><rect x="8.7" y="5.0" width="3.6" height="3.5" fill="#6a6a6a"/><rect x="12.3" y="5.0" width="3.6" height="3.5" fill="#9a9a9a"/><rect x="15.9" y="5.0" width="3.6" height="3.5" fill="#6a6a6a"/><rect x="1.5" y="8.5" width="3.6" height="3.5" fill="#808080"/><rect x="5.1" y="8.5" width="3.6" height="3.5" fill="#505050"/><rect x="8.7" y="8.5" width="3.6" height="3.5" fill="#808080"/><rect x="12.3" y="8.5" width="3.6" height="3.5" fill="#505050"/><rect x="15.9" y="8.5" width="3.6" height="3.5" fill="#808080"/><rect x="1.5" y="12.0" width="3.6" height="3.5" fill="#505050"/><rect x="5.1" y="12.0" width="3.6" height="3.5" fill="#808080"/><rect x="8.7" y="12.0" width="3.6" height="3.5" fill="#505050"/><rect x="12.3" y="12.0" width="3.6" height="3.5" fill="#808080"/><rect x="15.9" y="12.0" width="3.6" height="3.5" fill="#505050"/></svg>
<svg style="left:28.0px;top:424.0px;" width="19" height="18" viewBox="0 0 19 18"><path d="M1 1 H18 V12 L12.5 17 H1 Z" fill="#cfcfcf"/><path d="M4 5 H15 M4 8.5 H15 M4 12 H10" stroke="#535353" stroke-width="1.6"/><path d="M12.5 17 V12 H18" fill="none" stroke="#535353" stroke-width="1"/></svg>
<svg style="left:63px;top:420px;" width="32" height="26" viewBox="0 0 32 26"><path d="M3 20.5 L4 17 L13 8 L16 11 L7 20 Z" fill="none" stroke="#cfcfcf" stroke-width="1.5"/><path d="M12 5.5 L18.5 12 M14.5 8.5 L17.5 3.5 A2.4 2.4 0 0 1 21 7 L17 10.5" stroke="#cfcfcf" stroke-width="2.2" fill="#cfcfcf"/><rect x="11" y="20" width="13" height="4.5" fill="#cfcfcf"/><path d="M30 25 V21.5 L26.5 25 Z" fill="#cfcfcf"/></svg>
<svg style="left:26.5px;top:452.5px;" width="22" height="22" viewBox="0 0 22 22"><path d="M5.5 21 C3.5 17 1 14 1.3 12 C1.8 10.5 3.8 11 5 13.5 V4.5 C5 2.5 7.5 2.5 7.7 4.5 V3 C7.8 0.8 10.6 0.8 10.7 3 V4 C10.9 2 13.6 2 13.7 4 V6 C14 4.3 16.5 4.5 16.5 6.5 V14 C16.5 17.5 15.5 19 14.5 21 Z" fill="#cfcfcf"/><path d="M7.8 5 V11 M10.8 4 V11 M13.7 5.5 V11" stroke="#535353" stroke-width="0.9"/></svg>
<svg style="left:63.0px;top:451.5px;" width="22" height="22" viewBox="0 0 22 22"><circle cx="9" cy="9" r="6.3" fill="none" stroke="#cfcfcf" stroke-width="1.8"/><path d="M13.8 13.8 L20 20" stroke="#cfcfcf" stroke-width="2.6"/></svg>
<svg style="left:48px;top:509px;" width="41" height="41" viewBox="0 0 41 41"><rect width="41" height="41" fill="#fff"/><rect x="10.5" y="10" width="20" height="20" fill="#5c5c5c"/><path d="M1.5 39.5 L39.5 1.5" stroke="#5a0a0e" stroke-width="2.4"/></svg>
<svg style="left:23px;top:484px;" width="46" height="46" viewBox="0 0 46 46"><rect x="0.5" y="0.5" width="45" height="45" fill="#fff" stroke="#444" stroke-width="1"/><path d="M2 44 L44 2" stroke="#5a0a0e" stroke-width="2.4"/></svg>
<svg style="left:79px;top:486px;" width="16" height="14" viewBox="0 0 16 14"><path d="M3 7.5 V4.5 H10.5 V10" fill="none" stroke="#cfcfcf" stroke-width="1.8"/><path d="M0 7 H6 L3 11 Z M7.5 9 H13.5 L10.5 13 Z" fill="#cfcfcf" transform="translate(0,0)"/><path d="M1.5 5.5 L3 2 L6 5" fill="#cfcfcf"/></svg>
<svg style="left:23px;top:535px;" width="17" height="16" viewBox="0 0 17 16"><rect x="6" y="6" width="9" height="9" fill="#111" stroke="#eee" stroke-width="1.2"/><rect x="1.5" y="1.5" width="9" height="9" fill="#fff" stroke="#111" stroke-width="1.4"/></svg>
<div style="left:30.5px;top:562.5px;width:22px;height:19.5px;background:#2f2f2f;border-radius:3px;"></div>
<svg style="left:36.5px;top:567px;" width="10" height="10" viewBox="0 0 10 10"><rect x="1" y="1" width="8" height="8" fill="#666" stroke="#ddd" stroke-width="1.3"/></svg>
<div style="top:564.00px;font-size:15.5px;line-height:17px;height:17px;color:#cfcfcf;white-space:nowrap;font-weight:bold;font-family:'Liberation Serif',serif;left:64.70px;transform-origin:0 50%;transform:scaleX(1.2147);">T</div>
<div style="left:23.5px;top:594.5px;width:15.3px;height:15.3px;background:#000;border:1px solid #777;box-sizing:border-box;"></div>
<svg style="left:48px;top:594.5px;" width="16" height="16" viewBox="0 0 16 16"><defs><linearGradient id="g2"><stop offset="0" stop-color="#fff"/><stop offset="1" stop-color="#222"/></linearGradient></defs><rect width="16" height="16" fill="url(#g2)"/></svg>
<div style="left:70px;top:591.3px;width:23px;height:22.3px;background:#2f2f2f;border-radius:3px;"></div>
<svg style="left:73.5px;top:594.3px;" width="16" height="16" viewBox="0 0 16 16"><rect width="16" height="16" fill="#fff"/><path d="M1 15 L15 1" stroke="#5a0a0e" stroke-width="2"/></svg>
<svg style="left:30px;top:628px;" width="19" height="16" viewBox="0 0 19 16"><rect x="5" y="6.5" width="13" height="9" fill="#cfcfcf"/><path d="M0.5 8 H3.5 M0.5 11.5 H3.5 M0.5 15 H3.5 M6 1 V4 M9.5 1 V4 M13 1 V4 M16.5 1 V4" stroke="#cfcfcf" stroke-width="1.3"/></svg>
<svg style="left:31px;top:664px;" width="14" height="14" viewBox="0 0 14 14"><rect x="0.8" y="0.8" width="12.4" height="12.4" fill="none" stroke="#d8d8d8" stroke-width="1.4"/><rect x="3" y="3.5" width="5" height="4" fill="none" stroke="#d8d8d8" stroke-width="1"/><rect x="5.5" y="6" width="5.5" height="4.5" fill="#2f2f2f" stroke="#d8d8d8" stroke-width="1"/></svg>
<svg style="left:68px;top:663px;" width="24" height="17" viewBox="0 0 24 17"><rect x="0.8" y="0.8" width="14.4" height="13.4" fill="none" stroke="#cfcfcf" stroke-width="1.4"/><rect x="0.8" y="0.8" width="14.4" height="3.4" fill="#cfcfcf"/><path d="M21.5 16.5 V13.0 L18.0 16.5 Z" fill="#cfcfcf"/></svg>
<div style="left:25.5px;top:797px;width:129.5px;height:66px;background:#535353;border-radius:5px 5px 0 0;border:1px solid #3c3c3c;box-sizing:border-box;"></div>
<div style="left:26.5px;top:798px;width:127.5px;height:14.5px;background:#454545;border-radius:4px 4px 0 0;"></div>
<svg style="left:116px;top:800px;" width="12" height="8" viewBox="0 0 12 8"><path d="M1.5 1 L4.5 4 L1.5 7 M6.5 1 L9.5 4 L6.5 7" fill="none" stroke="#d0d0d0" stroke-width="1.3"/></svg>
<svg style="left:138.5px;top:799.5px;" width="8.5" height="8.5" viewBox="0 0 8.5 8.5"><path d="M1 1 L7.5 7.5 M7.5 1 L1 7.5" stroke="#e0e0e0" stroke-width="1.6"/></svg>
<svg style="left:75.0px;top:819px;" width="30" height="4" viewBox="0 0 30 4"><rect x="0.8" y="0" width="1.2" height="4" fill="#474747"/><rect x="3.8" y="0" width="1.2" height="4" fill="#474747"/><rect x="6.8" y="0" width="1.2" height="4" fill="#474747"/><rect x="9.8" y="0" width="1.2" height="4" fill="#474747"/><rect x="12.8" y="0" width="1.2" height="4" fill="#474747"/><rect x="15.8" y="0" width="1.2" height="4" fill="#474747"/><rect x="18.8" y="0" width="1.2" height="4" fill="#474747"/><rect x="21.8" y="0" width="1.2" height="4" fill="#474747"/><rect x="24.8" y="0" width="1.2" height="4" fill="#474747"/><rect x="27.8" y="0" width="1.2" height="4" fill="#474747"/></svg>
<svg style="left:40px;top:836px;" width="21" height="15" viewBox="0 0 21 15"><rect width="21" height="15" fill="#c9c9c9"/><rect x="1.5" y="1.5" width="5.5" height="5.5" fill="#8a8a8a"/><rect x="7.8" y="1.5" width="5.5" height="5.5" fill="#6a6a6a"/><rect x="14" y="1.5" width="5.5" height="5.5" fill="#eee"/><rect x="1.5" y="8" width="5.5" height="5.5" fill="#aaa"/><rect x="7.8" y="8" width="5.5" height="5.5" fill="#999"/><rect x="14" y="8" width="5.5" height="5.5" fill="#bbb"/></svg>
<div style="top:837.00px;font-size:13.4px;line-height:15px;height:15px;color:#ececec;white-space:nowrap;font-weight:bold;left:73.00px;transform-origin:0 50%;transform:scaleX(0.9707);">Swatches</div>
<div style="top:1373.00px;font-size:13.4px;line-height:15px;height:15px;color:#e4e4e4;white-space:nowrap;left:29.60px;transform-origin:0 50%;transform:scaleX(0.9528);">55.5%</div>
<svg style="left:82.5px;top:1376px;" width="11" height="8" viewBox="0 0 11 8"><path d="M1.5 2 L5.5 6 L9.5 2" fill="none" stroke="#c0c0c0" stroke-width="1.3"/></svg>
<svg style="left:107.5px;top:1375px;" width="13" height="12" viewBox="0 0 13 12"><rect x="0.5" y="0.5" width="2" height="10.5" fill="#cfcfcf"/><path d="M11.5 0.5 V11 L4 5.7 Z" fill="#cfcfcf"/></svg>
<svg style="left:135.5px;top:1375px;" width="9" height="12" viewBox="0 0 9 12"><path d="M7.7 0.5 V11 L0.5 5.7 Z" fill="#cfcfcf"/></svg>
<div style="left:157.5px;top:1371px;width:112.5px;height:18.5px;background:#454545;border:1px solid #6a6a6a;box-sizing:border-box;border-radius:2px;"></div>
<div style="left:247px;top:1372px;width:1px;height:16.5px;background:#6a6a6a;"></div>
<svg style="left:253.5px;top:1376px;" width="11" height="8" viewBox="0 0 11 8"><path d="M1.5 2 L5.5 6 L9.5 2" fill="none" stroke="#c0c0c0" stroke-width="1.3"/></svg>
<div style="top:1374.00px;font-size:13px;line-height:15px;height:15px;color:#e4e4e4;white-space:nowrap;left:163.00px;transform-origin:0 50%;">א</div>
<svg style="left:286.5px;top:1375px;" width="9" height="12" viewBox="0 0 9 12"><path d="M0.5 0.5 V11 L7.5 5.7 Z" fill="#7c7c7c"/></svg>
<svg style="left:310px;top:1375px;" width="13" height="12" viewBox="0 0 13 12"><rect x="9.5" y="0.5" width="2" height="10.5" fill="#7c7c7c"/><path d="M0.5 0.5 V11 L8 5.7 Z" fill="#7c7c7c"/></svg>
<svg style="left:341px;top:1371px;" width="24" height="18" viewBox="0 0 24 18"><path d="M1 13.5 V7 A6.5 6.5 0 0 1 12.5 3.5 L16.5 8 V13.5 H12 V9.5 A2.5 2.5 0 0 0 7 9.5 V13.5 Z" fill="#cfcfcf"/><path d="M10.5 4 V7.5 H14" fill="none" stroke="#535353" stroke-width="1"/><path d="M17.8 13.2 H21.8 L19.8 15.7 Z" fill="#cfcfcf"/></svg>
<div style="top:1373.00px;font-size:13.4px;line-height:15px;height:15px;color:#e4e4e4;white-space:nowrap;left:382.00px;transform-origin:0 50%;transform:scaleX(0.9644);">[Basic] (working)</div>
<svg style="left:509.5px;top:1376px;" width="11" height="8" viewBox="0 0 11 8"><path d="M1.5 2 L5.5 6 L9.5 2" fill="none" stroke="#c0c0c0" stroke-width="1.3"/></svg>
<div style="left:539.4px;top:1373.3px;width:14px;height:14px;background:#1f4a24;border-radius:7px;"></div>
<div style="top:1374.00px;font-size:13.4px;line-height:15px;height:15px;color:#e4e4e4;white-space:nowrap;left:559.40px;transform-origin:0 50%;transform:scaleX(0.9312);">No errors</div>
<svg style="left:637.5px;top:1376px;" width="11" height="8" viewBox="0 0 11 8"><path d="M1.5 2 L5.5 6 L9.5 2" fill="none" stroke="#c0c0c0" stroke-width="1.3"/></svg>
<svg style="left:660px;top:1374px;" width="10" height="12" viewBox="0 0 10 12"><path d="M7 1.5 L2.5 6 L7 10.5" fill="none" stroke="#7a7a7a" stroke-width="1.2"/></svg>
<svg style="left:2409px;top:1374px;" width="10" height="12" viewBox="0 0 10 12"><path d="M3 1.5 L7.5 6 L3 10.5" fill="none" stroke="#7a7a7a" stroke-width="1.2"/></svg>
<svg style="left:2430px;top:1374px;" width="20" height="13" viewBox="0 0 20 13"><rect x="0.8" y="0.8" width="17.4" height="11.4" fill="none" stroke="#d8d8d8" stroke-width="1.5"/><path d="M9.5 1 V12" stroke="#d8d8d8" stroke-width="1.5"/></svg>
<svg style="left:2455px;top:1376px;" width="13" height="13" viewBox="0 0 13 13"><rect x="10.5" y="10.5" width="1.2" height="1.2" fill="#666"/><rect x="8.1" y="10.5" width="1.2" height="1.2" fill="#666"/><rect x="5.7" y="10.5" width="1.2" height="1.2" fill="#666"/><rect x="3.3000000000000007" y="10.5" width="1.2" height="1.2" fill="#666"/><rect x="0.9000000000000004" y="10.5" width="1.2" height="1.2" fill="#666"/><rect x="10.5" y="8.1" width="1.2" height="1.2" fill="#666"/><rect x="8.1" y="8.1" width="1.2" height="1.2" fill="#666"/><rect x="5.7" y="8.1" width="1.2" height="1.2" fill="#666"/><rect x="3.3000000000000007" y="8.1" width="1.2" height="1.2" fill="#666"/><rect x="10.5" y="5.7" width="1.2" height="1.2" fill="#666"/><rect x="8.1" y="5.7" width="1.2" height="1.2" fill="#666"/><rect x="5.7" y="5.7" width="1.2" height="1.2" fill="#666"/><rect x="10.5" y="3.3000000000000007" width="1.2" height="1.2" fill="#666"/><rect x="8.1" y="3.3000000000000007" width="1.2" height="1.2" fill="#666"/><rect x="10.5" y="0.9000000000000004" width="1.2" height="1.2" fill="#666"/></svg>
<div style="left:2168px;top:194px;width:304.5px;height:1091px;background:#3a3a3a;"></div>
<div style="left:2169px;top:199px;width:302.0px;height:1084px;background:#535353;"></div>
<div style="left:2169px;top:199px;width:302.0px;height:34px;background:#424242;"></div>
<div style="left:2169px;top:199px;width:78px;height:34px;background:#535353;"></div>
<svg style="left:2179px;top:212px;" width="9" height="12" viewBox="0 0 9 12"><path d="M1.5 4.5 L4.5 1.5 L7.5 4.5 M1.5 7.5 L4.5 10.5 L7.5 7.5" fill="none" stroke="#c8c8c8" stroke-width="1.2"/></svg>
<div style="top:210.00px;font-size:13.2px;line-height:15px;height:15px;color:#f0f0f0;white-space:nowrap;font-weight:bold;left:2193.80px;transform-origin:0 50%;transform:scaleX(0.9566);">Pages</div>
<svg style="left:2419px;top:211px;" width="14" height="12" viewBox="0 0 14 12"><path d="M1.5 1.5 L6 6 L1.5 10.5 M7.5 1.5 L12 6 L7.5 10.5" fill="none" stroke="#e0e0e0" stroke-width="1.6"/></svg>
<div style="left:2441px;top:209px;width:1px;height:14px;background:#888;"></div>
<svg style="left:2450px;top:211.5px;" width="14" height="10" viewBox="0 0 14 10"><path d="M0 1 H13.5 M0 3.6 H13.5 M0 6.2 H13.5 M0 8.8 H13.5" stroke="#cfcfcf" stroke-width="1.2"/></svg>
<div style="top:244.00px;font-size:13px;line-height:15px;height:15px;color:#e4e4e4;white-space:nowrap;left:2174.30px;transform-origin:0 50%;transform:scaleX(1.0052);">[None]</div>
<div style="left:2421.5px;top:238px;width:22px;height:29.5px;background:#fff;"></div>
<div style="top:280.00px;font-size:13px;line-height:15px;height:15px;color:#e4e4e4;white-space:nowrap;left:2174.00px;transform-origin:0 50%;transform:scaleX(0.9103);">A-Parent</div>
<div style="left:2400.7px;top:274.7px;width:42.7px;height:29.5px;background:#fff;"></div>
<div style="left:2420.8px;top:274.7px;width:0.8px;height:29.5px;background:#999;"></div>
<div style="left:2169px;top:452px;width:302.0px;height:1px;background:#626262;"></div>
<svg style="left:2174.5px;top:466.5px;" width="7" height="13" viewBox="0 0 7 13"><rect x="0" y="0.0" width="6.5" height="0.9" fill="#bdbdbd"/><rect x="0" y="1.75" width="6.5" height="0.9" fill="#bdbdbd"/><rect x="0" y="3.5" width="6.5" height="0.9" fill="#bdbdbd"/><rect x="0" y="5.25" width="6.5" height="0.9" fill="#bdbdbd"/><rect x="0" y="7.0" width="6.5" height="0.9" fill="#bdbdbd"/><rect x="0" y="8.75" width="6.5" height="0.9" fill="#bdbdbd"/><rect x="0" y="10.5" width="6.5" height="0.9" fill="#bdbdbd"/></svg>
<div style="top:467.00px;font-size:13px;line-height:15px;height:15px;color:#f0f0f0;white-space:nowrap;font-weight:bold;left:2220.30px;transform-origin:0 50%;transform:scaleX(0.9827);">A4 V</div>
<svg style="left:2290.5px;top:471px;" width="9" height="5" viewBox="0 0 9 5"><path d="M0.3 0.5 H8.3 L4.3 4.5 Z" fill="#cfcfcf"/></svg>
<div style="left:2306px;top:457.5px;width:1px;height:31.5px;background:#666;"></div>
<div style="left:2169px;top:492.5px;width:302.0px;height:1px;background:#4c4c4c;"></div>
<svg style="left:2207px;top:496px;" width="14" height="7" viewBox="0 0 14 7"><path d="M0.4 0.3 H13.2 L6.8 6.6 Z" fill="#c6c6c6"/></svg>
<div style="left:2237px;top:496px;width:1px;height:83px;background:#b8b8b8;"></div>
<div style="left:2190.3px;top:504.7px;width:46.2px;height:67px;background:#9ec6f8;"></div>
<svg style="left:2190.3px;top:504.7px;" width="46.2" height="67" viewBox="0 0 46.2 67"><rect x="4.2" y="5.00" width="18.2" height="1.25" fill="#2f5f96"/><rect x="24.9" y="5.00" width="18.5" height="1.25" fill="#3a6ca3"/><rect x="11.9" y="6.72" width="10.5" height="1.25" fill="#5b8ec4"/><rect x="27.6" y="6.72" width="15.8" height="1.25" fill="#2f5f96"/><rect x="3.9" y="8.44" width="18.5" height="1.25" fill="#2f5f96"/><rect x="25.0" y="8.44" width="18.4" height="1.25" fill="#2f5f96"/><rect x="4.1" y="10.16" width="18.3" height="1.25" fill="#2f5f96"/><rect x="25.6" y="10.16" width="17.8" height="1.25" fill="#2f5f96"/><rect x="4.1" y="11.88" width="18.3" height="1.25" fill="#5b8ec4"/><rect x="25.4" y="11.88" width="18.0" height="1.25" fill="#4a7db4"/><rect x="7.4" y="13.60" width="15.0" height="1.25" fill="#3a6ca3"/><rect x="26.3" y="13.60" width="17.1" height="1.25" fill="#4a7db4"/><rect x="3.7" y="15.32" width="18.7" height="1.25" fill="#2f5f96"/><rect x="25.0" y="15.32" width="18.4" height="1.25" fill="#5b8ec4"/><rect x="14.7" y="17.04" width="7.7" height="1.25" fill="#4a7db4"/><rect x="26.6" y="17.04" width="16.8" height="1.25" fill="#5b8ec4"/><rect x="3.9" y="18.76" width="18.5" height="1.25" fill="#2f5f96"/><rect x="28.3" y="18.76" width="15.1" height="1.25" fill="#5b8ec4"/><rect x="5.3" y="20.48" width="17.1" height="1.25" fill="#2f5f96"/><rect x="25.2" y="20.48" width="18.2" height="1.25" fill="#5b8ec4"/><rect x="7.2" y="22.20" width="15.2" height="1.25" fill="#3a6ca3"/><rect x="29.4" y="22.20" width="14.0" height="1.25" fill="#3a6ca3"/><rect x="6.1" y="23.92" width="16.3" height="1.25" fill="#5b8ec4"/><rect x="25.1" y="23.92" width="18.3" height="1.25" fill="#4a7db4"/><rect x="3.9" y="25.64" width="18.5" height="1.25" fill="#2f5f96"/><rect x="26.0" y="25.64" width="17.4" height="1.25" fill="#5b8ec4"/><rect x="3.6" y="27.36" width="18.8" height="1.25" fill="#3a6ca3"/><rect x="26.6" y="27.36" width="16.8" height="1.25" fill="#3a6ca3"/><rect x="4.0" y="29.08" width="18.4" height="1.25" fill="#2f5f96"/><rect x="25.8" y="29.08" width="17.6" height="1.25" fill="#5b8ec4"/><rect x="5.4" y="30.80" width="17.0" height="1.25" fill="#5b8ec4"/><rect x="25.1" y="30.80" width="18.3" height="1.25" fill="#3a6ca3"/><rect x="14.8" y="32.52" width="7.6" height="1.25" fill="#2f5f96"/><rect x="34.0" y="32.52" width="9.4" height="1.25" fill="#5b8ec4"/><rect x="4.7" y="34.24" width="17.7" height="1.25" fill="#4a7db4"/><rect x="24.9" y="34.24" width="18.5" height="1.25" fill="#5b8ec4"/><rect x="3.8" y="35.96" width="18.6" height="1.25" fill="#4a7db4"/><rect x="25.4" y="35.96" width="18.0" height="1.25" fill="#2f5f96"/><rect x="8.2" y="37.68" width="14.2" height="1.25" fill="#2f5f96"/><rect x="25.2" y="37.68" width="18.2" height="1.25" fill="#2f5f96"/><rect x="3.7" y="39.40" width="18.7" height="1.25" fill="#3a6ca3"/><rect x="25.9" y="39.40" width="17.5" height="1.25" fill="#4a7db4"/><rect x="4.1" y="41.12" width="18.3" height="1.25" fill="#3a6ca3"/><rect x="25.8" y="41.12" width="17.6" height="1.25" fill="#3a6ca3"/><rect x="5.9" y="42.84" width="16.5" height="1.25" fill="#2f5f96"/><rect x="25.4" y="42.84" width="18.0" height="1.25" fill="#4a7db4"/><rect x="8.1" y="44.56" width="14.3" height="1.25" fill="#4a7db4"/><rect x="25.3" y="44.56" width="18.1" height="1.25" fill="#4a7db4"/><rect x="6.5" y="46.28" width="15.9" height="1.25" fill="#2f5f96"/><rect x="25.6" y="46.28" width="17.8" height="1.25" fill="#2f5f96"/><rect x="3.5" y="48.00" width="18.9" height="1.25" fill="#3a6ca3"/><rect x="25.0" y="48.00" width="18.4" height="1.25" fill="#4a7db4"/><rect x="8.1" y="49.72" width="14.3" height="1.25" fill="#5b8ec4"/><rect x="29.5" y="49.72" width="13.9" height="1.25" fill="#3a6ca3"/><rect x="3.4" y="51.44" width="19.0" height="1.25" fill="#5b8ec4"/><rect x="25.0" y="51.44" width="18.4" height="1.25" fill="#5b8ec4"/><rect x="3.8" y="53.16" width="18.6" height="1.25" fill="#3a6ca3"/><rect x="28.8" y="53.16" width="14.6" height="1.25" fill="#2f5f96"/><rect x="4.5" y="54.88" width="17.9" height="1.25" fill="#3a6ca3"/><rect x="25.1" y="54.88" width="18.3" height="1.25" fill="#4a7db4"/><rect x="4.3" y="56.60" width="18.1" height="1.25" fill="#5b8ec4"/><rect x="24.9" y="56.60" width="18.5" height="1.25" fill="#5b8ec4"/><rect x="4.4" y="58.32" width="18.0" height="1.25" fill="#3a6ca3"/><rect x="35.4" y="58.32" width="8.0" height="1.25" fill="#3a6ca3"/><rect x="4.3" y="60.04" width="18.1" height="1.25" fill="#3a6ca3"/><rect x="25.7" y="60.04" width="17.7" height="1.25" fill="#4a7db4"/></svg>
<div style="left:2190.3px;top:504.7px;width:14.7px;height:13.3px;background:#fff;"></div>
<div style="top:506.00px;font-size:12.6px;line-height:14px;height:14px;color:#000;white-space:nowrap;font-weight:bold;left:2191.80px;transform-origin:0 50%;transform:scaleX(0.9671);">A</div>
<div style="left:2202px;top:579.2px;width:19.6px;height:17.5px;background:#1b78e2;"></div>
<div style="top:581.00px;font-size:13px;line-height:15px;height:15px;color:#fff;white-space:nowrap;font-weight:bold;left:2207.50px;transform-origin:0 50%;transform:scaleX(0.9585);">א</div>
<div style="left:2190.3px;top:607.7px;width:94.7px;height:67.3px;background:#fff;"></div>
<div style="left:2237px;top:600.8px;width:1px;height:82.2px;background:#b8b8b8;"></div>
<div style="top:609.00px;font-size:12px;line-height:14px;height:14px;color:#222;white-space:nowrap;left:2191.80px;transform-origin:0 50%;transform:scaleX(0.8995);">A</div>
<div style="top:609.00px;font-size:12px;line-height:14px;height:14px;color:#222;white-space:nowrap;left:2272.80px;transform-origin:0 50%;transform:scaleX(0.8995);">A</div>
<div style="top:687.00px;font-size:12.5px;line-height:14px;height:14px;color:#e4e4e4;white-space:nowrap;left:2226.00px;transform-origin:0 50%;transform:scaleX(1.0281);">ב-ג</div>
<div style="left:2169px;top:1250.5px;width:302.0px;height:1px;background:#4a4a4a;"></div>
<div style="top:1261.00px;font-size:13px;line-height:15px;height:15px;color:#e4e4e4;white-space:nowrap;left:2176.00px;transform-origin:0 50%;transform:scaleX(0.9332);">3 Pages in 2 Spreads</div>
<svg style="left:2351px;top:1258px;" width="25" height="17" viewBox="0 0 25 17"><path d="M1 8.5 H6 V5.5 H12.5 V14.5 H1 Z" fill="none" stroke="#c9c9c9" stroke-width="1.3"/><path d="M6 5.5 V2 H12 L15 5 V12 H12.5" fill="none" stroke="#c9c9c9" stroke-width="1.3"/><path d="M9 5.5 L12.5 9" stroke="#c9c9c9" stroke-width="1.1"/><rect x="20" y="12.5" width="2" height="2" fill="#c9c9c9"/></svg>
<svg style="left:2392px;top:1258px;" width="15" height="15" viewBox="0 0 15 15"><rect x="0.8" y="0.8" width="13.4" height="13.4" fill="none" stroke="#c9c9c9" stroke-width="1.3"/><path d="M7.5 4 V11 M4 7.5 H11" stroke="#c9c9c9" stroke-width="1.3"/></svg>
<svg style="left:2426px;top:1257px;" width="15" height="17" viewBox="0 0 15 17"><path d="M1 3.5 H14 M5 3.5 V1 H10 V3.5" fill="none" stroke="#c9c9c9" stroke-width="1.3"/><rect x="2.5" y="5" width="10" height="11" rx="1" fill="#c9c9c9"/><path d="M5.3 7 V14 M7.5 7 V14 M9.7 7 V14" stroke="#535353" stroke-width="0.9"/></svg>
<div style="left:2168px;top:1285px;width:304.5px;height:8px;background:#535353;"></div>
<div style="left:2168px;top:1292px;width:302.5px;height:1px;background:#4a4a4a;"></div>
<svg style="left:2305.0px;top:1286.5px;" width="30" height="5" viewBox="0 0 30 5"><rect x="0.8" y="0" width="1.2" height="5" fill="#434343"/><rect x="3.8" y="0" width="1.2" height="5" fill="#434343"/><rect x="6.8" y="0" width="1.2" height="5" fill="#434343"/><rect x="9.8" y="0" width="1.2" height="5" fill="#434343"/><rect x="12.8" y="0" width="1.2" height="5" fill="#434343"/><rect x="15.8" y="0" width="1.2" height="5" fill="#434343"/><rect x="18.8" y="0" width="1.2" height="5" fill="#434343"/><rect x="21.8" y="0" width="1.2" height="5" fill="#434343"/><rect x="24.8" y="0" width="1.2" height="5" fill="#434343"/><rect x="27.8" y="0" width="1.2" height="5" fill="#434343"/></svg>
<div style="left:2471px;top:131px;width:100px;height:1260px;background:#535353;"></div>
<div style="left:2471px;top:131px;width:2px;height:1260px;background:#3f3f3f;"></div>
<div style="left:2520px;top:131px;width:3px;height:1260px;background:#444;"></div>
<div style="left:2473px;top:131px;width:98px;height:15px;background:#424242;"></div>
<svg style="left:2503px;top:134px;" width="12" height="8" viewBox="0 0 12 8"><path d="M4.5 1 L1.5 4 L4.5 7 M9.5 1 L6.5 4 L9.5 7" fill="none" stroke="#d0d0d0" stroke-width="1.3"/></svg>
<svg style="left:2553px;top:134px;" width="12" height="8" viewBox="0 0 12 8"><path d="M4.5 1 L1.5 4 L4.5 7 M9.5 1 L6.5 4 L9.5 7" fill="none" stroke="#d0d0d0" stroke-width="1.3"/></svg>
<div style="left:2473px;top:146px;width:98px;height:1px;background:#4a4a4a;"></div>
<svg style="left:2483.0px;top:150px;" width="27" height="5" viewBox="0 0 27 5"><rect x="0.8" y="0" width="1.2" height="5" fill="#3e3e3e"/><rect x="3.8" y="0" width="1.2" height="5" fill="#3e3e3e"/><rect x="6.8" y="0" width="1.2" height="5" fill="#3e3e3e"/><rect x="9.8" y="0" width="1.2" height="5" fill="#3e3e3e"/><rect x="12.8" y="0" width="1.2" height="5" fill="#3e3e3e"/><rect x="15.8" y="0" width="1.2" height="5" fill="#3e3e3e"/><rect x="18.8" y="0" width="1.2" height="5" fill="#3e3e3e"/><rect x="21.8" y="0" width="1.2" height="5" fill="#3e3e3e"/><rect x="24.8" y="0" width="1.2" height="5" fill="#3e3e3e"/></svg>
<svg style="left:2534.0px;top:150px;" width="27" height="5" viewBox="0 0 27 5"><rect x="0.8" y="0" width="1.2" height="5" fill="#3e3e3e"/><rect x="3.8" y="0" width="1.2" height="5" fill="#3e3e3e"/><rect x="6.8" y="0" width="1.2" height="5" fill="#3e3e3e"/><rect x="9.8" y="0" width="1.2" height="5" fill="#3e3e3e"/><rect x="12.8" y="0" width="1.2" height="5" fill="#3e3e3e"/><rect x="15.8" y="0" width="1.2" height="5" fill="#3e3e3e"/><rect x="18.8" y="0" width="1.2" height="5" fill="#3e3e3e"/><rect x="21.8" y="0" width="1.2" height="5" fill="#3e3e3e"/><rect x="24.8" y="0" width="1.2" height="5" fill="#3e3e3e"/></svg>
<div style="left:2473px;top:197px;width:47px;height:2px;background:#454545;"></div>
<svg style="left:2483.0px;top:201.5px;" width="27" height="5" viewBox="0 0 27 5"><rect x="0.8" y="0" width="1.2" height="5" fill="#3e3e3e"/><rect x="3.8" y="0" width="1.2" height="5" fill="#3e3e3e"/><rect x="6.8" y="0" width="1.2" height="5" fill="#3e3e3e"/><rect x="9.8" y="0" width="1.2" height="5" fill="#3e3e3e"/><rect x="12.8" y="0" width="1.2" height="5" fill="#3e3e3e"/><rect x="15.8" y="0" width="1.2" height="5" fill="#3e3e3e"/><rect x="18.8" y="0" width="1.2" height="5" fill="#3e3e3e"/><rect x="21.8" y="0" width="1.2" height="5" fill="#3e3e3e"/><rect x="24.8" y="0" width="1.2" height="5" fill="#3e3e3e"/></svg>
<div style="left:2473px;top:248px;width:47px;height:2px;background:#454545;"></div>
<svg style="left:2483.0px;top:252.5px;" width="27" height="5" viewBox="0 0 27 5"><rect x="0.8" y="0" width="1.2" height="5" fill="#3e3e3e"/><rect x="3.8" y="0" width="1.2" height="5" fill="#3e3e3e"/><rect x="6.8" y="0" width="1.2" height="5" fill="#3e3e3e"/><rect x="9.8" y="0" width="1.2" height="5" fill="#3e3e3e"/><rect x="12.8" y="0" width="1.2" height="5" fill="#3e3e3e"/><rect x="15.8" y="0" width="1.2" height="5" fill="#3e3e3e"/><rect x="18.8" y="0" width="1.2" height="5" fill="#3e3e3e"/><rect x="21.8" y="0" width="1.2" height="5" fill="#3e3e3e"/><rect x="24.8" y="0" width="1.2" height="5" fill="#3e3e3e"/></svg>
<div style="left:2473px;top:334px;width:47px;height:2px;background:#454545;"></div>
<svg style="left:2483.0px;top:338.5px;" width="27" height="5" viewBox="0 0 27 5"><rect x="0.8" y="0" width="1.2" height="5" fill="#3e3e3e"/><rect x="3.8" y="0" width="1.2" height="5" fill="#3e3e3e"/><rect x="6.8" y="0" width="1.2" height="5" fill="#3e3e3e"/><rect x="9.8" y="0" width="1.2" height="5" fill="#3e3e3e"/><rect x="12.8" y="0" width="1.2" height="5" fill="#3e3e3e"/><rect x="15.8" y="0" width="1.2" height="5" fill="#3e3e3e"/><rect x="18.8" y="0" width="1.2" height="5" fill="#3e3e3e"/><rect x="21.8" y="0" width="1.2" height="5" fill="#3e3e3e"/><rect x="24.8" y="0" width="1.2" height="5" fill="#3e3e3e"/></svg>
<div style="left:2473px;top:421px;width:47px;height:2px;background:#454545;"></div>
<svg style="left:2483.0px;top:425.5px;" width="27" height="5" viewBox="0 0 27 5"><rect x="0.8" y="0" width="1.2" height="5" fill="#3e3e3e"/><rect x="3.8" y="0" width="1.2" height="5" fill="#3e3e3e"/><rect x="6.8" y="0" width="1.2" height="5" fill="#3e3e3e"/><rect x="9.8" y="0" width="1.2" height="5" fill="#3e3e3e"/><rect x="12.8" y="0" width="1.2" height="5" fill="#3e3e3e"/><rect x="15.8" y="0" width="1.2" height="5" fill="#3e3e3e"/><rect x="18.8" y="0" width="1.2" height="5" fill="#3e3e3e"/><rect x="21.8" y="0" width="1.2" height="5" fill="#3e3e3e"/><rect x="24.8" y="0" width="1.2" height="5" fill="#3e3e3e"/></svg>
<div style="left:2473px;top:507px;width:47px;height:2px;background:#454545;"></div>
<svg style="left:2483.0px;top:511.5px;" width="27" height="5" viewBox="0 0 27 5"><rect x="0.8" y="0" width="1.2" height="5" fill="#3e3e3e"/><rect x="3.8" y="0" width="1.2" height="5" fill="#3e3e3e"/><rect x="6.8" y="0" width="1.2" height="5" fill="#3e3e3e"/><rect x="9.8" y="0" width="1.2" height="5" fill="#3e3e3e"/><rect x="12.8" y="0" width="1.2" height="5" fill="#3e3e3e"/><rect x="15.8" y="0" width="1.2" height="5" fill="#3e3e3e"/><rect x="18.8" y="0" width="1.2" height="5" fill="#3e3e3e"/><rect x="21.8" y="0" width="1.2" height="5" fill="#3e3e3e"/><rect x="24.8" y="0" width="1.2" height="5" fill="#3e3e3e"/></svg>
<div style="left:2473px;top:627px;width:47px;height:2px;background:#454545;"></div>
<svg style="left:2483.0px;top:631.5px;" width="27" height="5" viewBox="0 0 27 5"><rect x="0.8" y="0" width="1.2" height="5" fill="#3e3e3e"/><rect x="3.8" y="0" width="1.2" height="5" fill="#3e3e3e"/><rect x="6.8" y="0" width="1.2" height="5" fill="#3e3e3e"/><rect x="9.8" y="0" width="1.2" height="5" fill="#3e3e3e"/><rect x="12.8" y="0" width="1.2" height="5" fill="#3e3e3e"/><rect x="15.8" y="0" width="1.2" height="5" fill="#3e3e3e"/><rect x="18.8" y="0" width="1.2" height="5" fill="#3e3e3e"/><rect x="21.8" y="0" width="1.2" height="5" fill="#3e3e3e"/><rect x="24.8" y="0" width="1.2" height="5" fill="#3e3e3e"/></svg>
<div style="left:2473px;top:747px;width:47px;height:2px;background:#454545;"></div>
<div style="left:2523px;top:197px;width:48px;height:2px;background:#454545;"></div>
<svg style="left:2533.5px;top:201.5px;" width="27" height="5" viewBox="0 0 27 5"><rect x="0.8" y="0" width="1.2" height="5" fill="#3e3e3e"/><rect x="3.8" y="0" width="1.2" height="5" fill="#3e3e3e"/><rect x="6.8" y="0" width="1.2" height="5" fill="#3e3e3e"/><rect x="9.8" y="0" width="1.2" height="5" fill="#3e3e3e"/><rect x="12.8" y="0" width="1.2" height="5" fill="#3e3e3e"/><rect x="15.8" y="0" width="1.2" height="5" fill="#3e3e3e"/><rect x="18.8" y="0" width="1.2" height="5" fill="#3e3e3e"/><rect x="21.8" y="0" width="1.2" height="5" fill="#3e3e3e"/><rect x="24.8" y="0" width="1.2" height="5" fill="#3e3e3e"/></svg>
<div style="left:2523px;top:283px;width:48px;height:2px;background:#454545;"></div>
<svg style="left:2533.5px;top:287.5px;" width="27" height="5" viewBox="0 0 27 5"><rect x="0.8" y="0" width="1.2" height="5" fill="#3e3e3e"/><rect x="3.8" y="0" width="1.2" height="5" fill="#3e3e3e"/><rect x="6.8" y="0" width="1.2" height="5" fill="#3e3e3e"/><rect x="9.8" y="0" width="1.2" height="5" fill="#3e3e3e"/><rect x="12.8" y="0" width="1.2" height="5" fill="#3e3e3e"/><rect x="15.8" y="0" width="1.2" height="5" fill="#3e3e3e"/><rect x="18.8" y="0" width="1.2" height="5" fill="#3e3e3e"/><rect x="21.8" y="0" width="1.2" height="5" fill="#3e3e3e"/><rect x="24.8" y="0" width="1.2" height="5" fill="#3e3e3e"/></svg>
<div style="left:2523px;top:334px;width:48px;height:2px;background:#454545;"></div>
<svg style="left:2533.5px;top:338.5px;" width="27" height="5" viewBox="0 0 27 5"><rect x="0.8" y="0" width="1.2" height="5" fill="#3e3e3e"/><rect x="3.8" y="0" width="1.2" height="5" fill="#3e3e3e"/><rect x="6.8" y="0" width="1.2" height="5" fill="#3e3e3e"/><rect x="9.8" y="0" width="1.2" height="5" fill="#3e3e3e"/><rect x="12.8" y="0" width="1.2" height="5" fill="#3e3e3e"/><rect x="15.8" y="0" width="1.2" height="5" fill="#3e3e3e"/><rect x="18.8" y="0" width="1.2" height="5" fill="#3e3e3e"/><rect x="21.8" y="0" width="1.2" height="5" fill="#3e3e3e"/><rect x="24.8" y="0" width="1.2" height="5" fill="#3e3e3e"/></svg>
<div style="left:2523px;top:386px;width:48px;height:2px;background:#454545;"></div>
<svg style="left:2533.5px;top:390.5px;" width="27" height="5" viewBox="0 0 27 5"><rect x="0.8" y="0" width="1.2" height="5" fill="#3e3e3e"/><rect x="3.8" y="0" width="1.2" height="5" fill="#3e3e3e"/><rect x="6.8" y="0" width="1.2" height="5" fill="#3e3e3e"/><rect x="9.8" y="0" width="1.2" height="5" fill="#3e3e3e"/><rect x="12.8" y="0" width="1.2" height="5" fill="#3e3e3e"/><rect x="15.8" y="0" width="1.2" height="5" fill="#3e3e3e"/><rect x="18.8" y="0" width="1.2" height="5" fill="#3e3e3e"/><rect x="21.8" y="0" width="1.2" height="5" fill="#3e3e3e"/><rect x="24.8" y="0" width="1.2" height="5" fill="#3e3e3e"/></svg>
<div style="left:2523px;top:437px;width:48px;height:2px;background:#454545;"></div>
<svg style="left:2533.5px;top:441.5px;" width="27" height="5" viewBox="0 0 27 5"><rect x="0.8" y="0" width="1.2" height="5" fill="#3e3e3e"/><rect x="3.8" y="0" width="1.2" height="5" fill="#3e3e3e"/><rect x="6.8" y="0" width="1.2" height="5" fill="#3e3e3e"/><rect x="9.8" y="0" width="1.2" height="5" fill="#3e3e3e"/><rect x="12.8" y="0" width="1.2" height="5" fill="#3e3e3e"/><rect x="15.8" y="0" width="1.2" height="5" fill="#3e3e3e"/><rect x="18.8" y="0" width="1.2" height="5" fill="#3e3e3e"/><rect x="21.8" y="0" width="1.2" height="5" fill="#3e3e3e"/><rect x="24.8" y="0" width="1.2" height="5" fill="#3e3e3e"/></svg>
<div style="left:2523px;top:557px;width:48px;height:2px;background:#454545;"></div>
<svg style="left:2533.5px;top:561.5px;" width="27" height="5" viewBox="0 0 27 5"><rect x="0.8" y="0" width="1.2" height="5" fill="#3e3e3e"/><rect x="3.8" y="0" width="1.2" height="5" fill="#3e3e3e"/><rect x="6.8" y="0" width="1.2" height="5" fill="#3e3e3e"/><rect x="9.8" y="0" width="1.2" height="5" fill="#3e3e3e"/><rect x="12.8" y="0" width="1.2" height="5" fill="#3e3e3e"/><rect x="15.8" y="0" width="1.2" height="5" fill="#3e3e3e"/><rect x="18.8" y="0" width="1.2" height="5" fill="#3e3e3e"/><rect x="21.8" y="0" width="1.2" height="5" fill="#3e3e3e"/><rect x="24.8" y="0" width="1.2" height="5" fill="#3e3e3e"/></svg>
<div style="left:2523px;top:645px;width:48px;height:2px;background:#454545;"></div>
<svg style="left:2533.5px;top:649.5px;" width="27" height="5" viewBox="0 0 27 5"><rect x="0.8" y="0" width="1.2" height="5" fill="#3e3e3e"/><rect x="3.8" y="0" width="1.2" height="5" fill="#3e3e3e"/><rect x="6.8" y="0" width="1.2" height="5" fill="#3e3e3e"/><rect x="9.8" y="0" width="1.2" height="5" fill="#3e3e3e"/><rect x="12.8" y="0" width="1.2" height="5" fill="#3e3e3e"/><rect x="15.8" y="0" width="1.2" height="5" fill="#3e3e3e"/><rect x="18.8" y="0" width="1.2" height="5" fill="#3e3e3e"/><rect x="21.8" y="0" width="1.2" height="5" fill="#3e3e3e"/><rect x="24.8" y="0" width="1.2" height="5" fill="#3e3e3e"/></svg>
<div style="left:2523px;top:695px;width:48px;height:2px;background:#454545;"></div>
<svg style="left:2485.0px;top:164.0px;" width="26" height="24" viewBox="0 0 26 24"><path d="M12 8 H25 V18 H22.5 V22.5 L17.5 18 H12 Z" fill="#c9c9c9"/><path d="M1 1 H19.5 V13.5 H10 L5.5 17.5 V13.5 H1 Z" fill="#c9c9c9" stroke="#535353" stroke-width="1.3"/></svg>
<div style="left:2479.5px;top:212.5px;width:34px;height:27.5px;background:#2f2f2f;border-radius:3px;"></div>
<svg style="left:2483.5px;top:215.5px;" width="26" height="22" viewBox="0 0 26 22"><path d="M2 9 L8 3.5 H11.5 V20 H2 Z" fill="#dedede"/><path d="M24 9 L18 3.5 H14.5 V20 H24 Z" fill="#dedede"/><path d="M8 3.5 V9 H2 M18 3.5 V9 H24" fill="none" stroke="#2f2f2f" stroke-width="1.2"/><path d="M13 0.5 V22" stroke="#dedede" stroke-width="1.2"/></svg>
<svg style="left:2485.5px;top:268.0px;" width="22" height="22" viewBox="0 0 22 22"><path d="M11 1 L21 7.5 L11 14 L1 7.5 Z" fill="#c9c9c9"/><path d="M2.5 13 L11 18.5 L19.5 13" fill="none" stroke="#c9c9c9" stroke-width="2.4"/></svg>
<svg style="left:2483.5px;top:307.5px;" width="26" height="13" viewBox="0 0 26 13"><rect x="1.3" y="2" width="14" height="9" rx="4.5" fill="none" stroke="#c9c9c9" stroke-width="2.6"/><rect x="10.7" y="2" width="14" height="9" rx="4.5" fill="none" stroke="#c9c9c9" stroke-width="2.6"/></svg>
<div style="top:353.00px;font-size:21px;line-height:23px;height:23px;color:#c9c9c9;white-space:nowrap;font-style:italic;left:2489.00px;transform-origin:0 50%;transform:scaleX(1.0714);">fx</div>
<svg style="left:2485.0px;top:390.5px;" width="23" height="17" viewBox="0 0 23 17"><rect x="0" y="0.5" width="23" height="1.4" fill="#c9c9c9"/><rect x="0" y="6.3" width="23" height="2.4" fill="#c9c9c9"/><rect x="0" y="12.5" width="23" height="4" fill="#c9c9c9"/></svg>
<div style="top:440.00px;font-size:22px;line-height:25px;height:25px;color:#c9c9c9;white-space:nowrap;left:2487.50px;transform-origin:0 50%;transform:scaleX(1.0222);">A</div>
<div style="left:2505.5px;top:440px;width:1.4px;height:23px;background:#c9c9c9;"></div>
<div style="top:474.00px;font-size:19px;line-height:21px;height:21px;color:#c9c9c9;white-space:nowrap;left:2496.00px;transform-origin:0 50%;transform:scaleX(1.0652);">A</div>
<svg style="left:2486px;top:485px;" width="12" height="12" viewBox="0 0 12 12"><rect x="1" y="1" width="6.5" height="6.5" fill="#535353" stroke="#c9c9c9" stroke-width="1.4"/><rect x="4.5" y="4.5" width="6.5" height="6.5" fill="#535353" stroke="#c9c9c9" stroke-width="1.4"/></svg>
<svg style="left:2484.5px;top:526.0px;" width="24" height="24" viewBox="0 0 24 24"><path d="M8 4.5 H12 a2.3 2.3 0 0 0 4.6 0 H21 V9 a2.3 2.3 0 0 0 0 4.6 V17 H12" fill="none" stroke="#c9c9c9" stroke-width="1.7"/><path d="M8 4.5 V11" stroke="#c9c9c9" stroke-width="1.7"/><rect x="1" y="12" width="6.5" height="6.5" fill="#535353" stroke="#c9c9c9" stroke-width="1.4"/><rect x="4.5" y="15.5" width="6.5" height="6.5" fill="#535353" stroke="#c9c9c9" stroke-width="1.4"/></svg>
<div style="top:559.00px;font-size:25px;line-height:28px;height:28px;color:#c9c9c9;white-space:nowrap;font-weight:bold;left:2490.00px;transform-origin:0 50%;transform:scaleX(0.9711);">¶</div>
<div style="top:594.00px;font-size:20px;line-height:22px;height:22px;color:#c9c9c9;white-space:nowrap;font-weight:bold;left:2498.00px;transform-origin:0 50%;transform:scaleX(0.9441);">¶</div>
<svg style="left:2486px;top:604px;" width="12" height="12" viewBox="0 0 12 12"><rect x="1" y="1" width="6.5" height="6.5" fill="#535353" stroke="#c9c9c9" stroke-width="1.4"/><rect x="4.5" y="4.5" width="6.5" height="6.5" fill="#535353" stroke="#c9c9c9" stroke-width="1.4"/></svg>
<svg style="left:2486.0px;top:649.0px;" width="21" height="18" viewBox="0 0 21 18"><rect x="1" y="1" width="19" height="16" fill="none" stroke="#c9c9c9" stroke-width="1.6"/><rect x="1" y="1" width="19" height="4" fill="#c9c9c9"/><path d="M1 9.3 H20 M1 13.2 H20 M7 5.5 V17" stroke="#c9c9c9" stroke-width="1.3"/></svg>
<svg style="left:2485.5px;top:682.0px;" width="22" height="22" viewBox="0 0 22 22"><rect x="6" y="1" width="15" height="14" fill="none" stroke="#c9c9c9" stroke-width="1.6"/><rect x="6" y="1" width="15" height="4" fill="#c9c9c9"/><rect x="11" y="7" width="9" height="7" fill="#777"/><rect x="1" y="10.5" width="6.5" height="6.5" fill="#535353" stroke="#c9c9c9" stroke-width="1.4"/><rect x="4.5" y="14.0" width="6.5" height="6.5" fill="#535353" stroke="#c9c9c9" stroke-width="1.4"/></svg>
<svg style="left:2485.5px;top:717.0px;" width="22" height="22" viewBox="0 0 22 22"><rect x="6" y="1" width="15" height="14" fill="none" stroke="#c9c9c9" stroke-width="1.6"/><rect x="6" y="1" width="15" height="4" fill="#c9c9c9"/><path d="M10 7.5 H21 M10 10.5 H21" stroke="#c9c9c9" stroke-width="1.6"/><rect x="1" y="10.5" width="6.5" height="6.5" fill="#535353" stroke="#c9c9c9" stroke-width="1.4"/><rect x="4.5" y="14.0" width="6.5" height="6.5" fill="#535353" stroke="#c9c9c9" stroke-width="1.4"/></svg>
<svg style="left:2535.5px;top:166.0px;" width="24" height="22" viewBox="0 0 24 22"><path d="M2 4.5 H22 M2 11 H22 M2 17.5 H22" stroke="#c9c9c9" stroke-width="1.5"/><g fill="#535353" stroke="#c9c9c9" stroke-width="1.5"><circle cx="7.5" cy="4.5" r="2.4"/><circle cx="16.5" cy="11" r="2.4"/><circle cx="10" cy="17.5" r="2.4"/></g></svg>
<svg style="left:2536.5px;top:216.0px;" width="22" height="22" viewBox="0 0 22 22"><rect x="1" y="0" width="2" height="22" fill="#c9c9c9"/><rect x="5" y="3" width="10" height="6.5" fill="#c9c9c9"/><rect x="5" y="13" width="16" height="6.5" fill="#c9c9c9"/></svg>
<svg style="left:2537.0px;top:251.5px;" width="21" height="21" viewBox="0 0 21 21"><rect x="1" y="1" width="12" height="12" fill="#c9c9c9"/><rect x="8" y="8" width="12" height="12" fill="#c9c9c9" stroke="#535353" stroke-width="1.5"/><rect x="8.8" y="8.8" width="4.2" height="4.2" fill="#8a8a8a"/></svg>
<svg style="left:2534.5px;top:303.5px;" width="26" height="21" viewBox="0 0 26 21"><path d="M13 1 C5 1 1 6 1 11 C1 16.5 6 20 12 20 C15 20 15.5 18 14.5 16.5 C13.5 14.5 15 13 17.5 13 C22 13 25 11.5 25 8.5 C25 4 20 1 13 1 Z" fill="#c9c9c9"/><g fill="#535353"><circle cx="7" cy="7.5" r="2"/><circle cx="13" cy="5" r="2"/><circle cx="19.5" cy="7" r="2"/><circle cx="5.5" cy="13" r="2"/><circle cx="9.5" cy="16.5" r="1.8"/></g></svg>
<svg style="left:2536.5px;top:357px;" width="23" height="16" viewBox="0 0 23 16"><defs><linearGradient id="g3"><stop offset="0" stop-color="#222"/><stop offset="1" stop-color="#eee"/></linearGradient></defs><rect x="0.8" y="0.8" width="21.4" height="14.4" fill="url(#g3)" stroke="#c9c9c9" stroke-width="1.5"/></svg>
<svg style="left:2536.0px;top:406.0px;" width="23" height="20" viewBox="0 0 23 20"><rect x="0" y="0.5" width="23" height="1.4" fill="#c9c9c9"/><rect x="0" y="4.1" width="23" height="1.4" fill="#c9c9c9"/><rect x="0" y="7.7" width="23" height="1.4" fill="#c9c9c9"/><rect x="0" y="11.3" width="23" height="1.4" fill="#c9c9c9"/><rect x="0" y="14.9" width="23" height="1.4" fill="#c9c9c9"/><rect x="0" y="18.5" width="23" height="1.4" fill="#c9c9c9"/><ellipse cx="11.5" cy="10" rx="6.5" ry="6.5" fill="#535353"/><ellipse cx="11.5" cy="10" rx="5" ry="5" fill="#c9c9c9"/></svg>
<svg style="left:2533.5px;top:454.0px;" width="30" height="26" viewBox="0 0 30 26"><path d="M0.5 7.5 H7 V4 L11.5 8.5 L7 13 V9.5 H0.5 Z" fill="#c9c9c9"/><path d="M10 1.5 H17 L21 5.5 V11 L16 16 H10 L13.5 9 Z" fill="#c9c9c9"/><circle cx="23" cy="19" r="3.6" fill="none" stroke="#c9c9c9" stroke-width="2.8"/><path d="M23 12.8 V15 M23 23 V25.2 M16.8 19 H19 M27 19 H29.2 M18.6 14.6 L20.2 16.2 M25.8 21.8 L27.4 23.4 M18.6 23.4 L20.2 21.8 M25.8 16.2 L27.4 14.6" stroke="#c9c9c9" stroke-width="2.2"/></svg>
<div style="top:494.00px;font-size:20px;line-height:22px;height:22px;color:#c9c9c9;white-space:nowrap;left:2537.50px;transform-origin:0 50%;transform:scaleX(0.7000);">بس</div>
<svg style="left:2537px;top:490px;" width="20" height="10" viewBox="0 0 20 10"><path d="M1 1.5 L4.5 4 L1 6.5 Z" fill="#c9c9c9"/><path d="M10.5 5.5 q2.5 -4 2.5 0 q-1.5 2 -3 2.5" fill="none" stroke="#c9c9c9" stroke-width="1.2"/></svg>
<svg style="left:2551.5px;top:510px;" width="7" height="4" viewBox="0 0 7 4"><path d="M0 3.8 H6.5 L3.2 0.3 Z" fill="#c9c9c9"/></svg>
<svg style="left:2536.5px;top:526.0px;" width="22" height="22" viewBox="0 0 22 22"><rect x="1" y="1" width="16.5" height="16.5" rx="1.5" fill="#535353" stroke="#c9c9c9" stroke-width="1.6"/><rect x="4.5" y="4.5" width="16.5" height="16.5" rx="1.5" fill="#535353" stroke="#c9c9c9" stroke-width="1.6"/><path d="M12.5 4.5 V13.5 L15.5 11 L18.5 13.5 V4.5 Z" fill="#c9c9c9"/></svg>
<div style="top:576.00px;font-size:27px;line-height:30px;height:30px;color:#c9c9c9;white-space:nowrap;font-weight:bold;left:2538.00px;transform-origin:0 50%;font-family:'Liberation Serif',serif;font-style:italic;-webkit-text-stroke:0.8px #c9c9c9;">S</div>
<div style="top:610.00px;font-size:26px;line-height:30px;height:30px;color:#c9c9c9;white-space:nowrap;font-weight:bold;left:2536.00px;transform-origin:0 50%;transform:scaleX(0.9802);font-family:'Liberation Serif',serif;font-style:italic;-webkit-text-stroke:0.8px #c9c9c9;">S</div>
<svg style="left:2550px;top:620px;" width="12" height="9" viewBox="0 0 12 9"><path d="M0.5 4.5 L3.5 0.7 H11 V8.3 H3.5 Z" fill="#535353" stroke="#c9c9c9" stroke-width="1.3"/><rect x="5.5" y="3.5" width="3.5" height="2" fill="#c9c9c9"/></svg>
<div style="top:661.00px;font-size:28px;line-height:31px;height:31px;color:#c9c9c9;white-space:nowrap;font-style:italic;left:2538.00px;transform-origin:0 50%;transform:scaleX(1.0173);font-family:'Liberation Serif',serif;">A</div>
<svg style="left:2537px;top:664px;" width="8" height="8" viewBox="0 0 8 8"><path d="M7 1 C3 0.5 0.5 3 2 5.5" fill="none" stroke="#c9c9c9" stroke-width="1.3"/></svg>
<svg style="left:1545px;top:420px;" width="24" height="26" viewBox="0 0 24 26"><path d="M5.5 3.3 V21.8 L10.6 16.8 H18.6 Z" fill="#000" stroke="#dcdcdc" stroke-width="1.2" stroke-linejoin="round"/></svg>
</body></html>
